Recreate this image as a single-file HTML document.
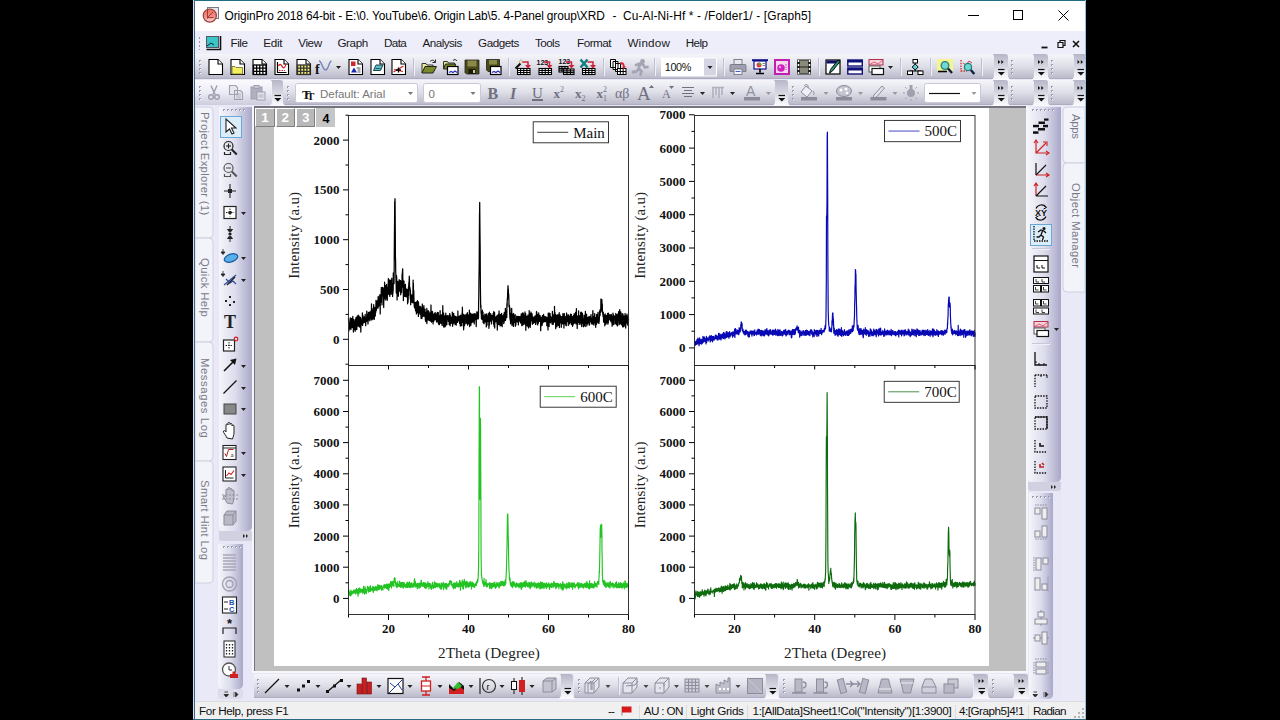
<!DOCTYPE html>
<html><head><meta charset="utf-8"><title>OriginPro 2018</title>
<style>
*{box-sizing:border-box;margin:0;padding:0}
html,body{width:1280px;height:720px;overflow:hidden;background:#000}
body{position:relative;font-family:"Liberation Sans",sans-serif;font-size:12px;color:#000}
.a{position:absolute}
#win{left:193px;top:0;width:893px;height:720px;background:#e7e7f7;overflow:hidden}
#title{left:0;top:0;width:893px;height:31px;background:#fff}
#title .t{left:31px;top:7px;font-size:12.3px;letter-spacing:-0.05px;white-space:nowrap;color:#000}
#menubar{left:0;top:31px;width:893px;height:24px;background:#eeeefa}
.mi{top:5px;font-size:11.6px;color:#111;white-space:nowrap}
.tb{border-radius:0 5px 5px 0;background:linear-gradient(#f6f6fc 0%,#e4e4f0 45%,#c4c4da 100%)}
.tbv{background:linear-gradient(90deg,#f4f4fb 0%,#e2e2ee 45%,#c0c0d6 100%);border-radius:0 0 5px 5px}
.grip{width:3px;background-image:radial-gradient(circle,#9a9ab4 0.8px,transparent 1.1px);background-size:3px 4px}
.gripv{height:3px;background-image:radial-gradient(circle,#9a9ab4 0.8px,transparent 1.1px);background-size:4px 3px}
.sep{width:1px;background:#b4b4c8}
.combo{background:#fff;border:1px solid #c6c6d4;border-radius:2px;font-size:11px;color:#555}
.stab{writing-mode:vertical-rl;font-size:11.3px;line-height:13px;color:#7a7a86;white-space:nowrap;letter-spacing:0.1px}
#status{left:0;top:700.5px;width:893px;height:19.5px;background:#f0f0f0;box-shadow:inset 0 1px 0 #dcdcdc;font-size:11.6px}
#status span{position:absolute;top:2px;white-space:nowrap}
svg{position:absolute;overflow:visible}
svg text{font-family:"Liberation Serif",serif}
</style></head>
<body>
<div id="win" class="a">
<div id="title" class="a">
<svg class="a" style="left:9px;top:6px" width="18" height="18" viewBox="0 0 18 18"><rect x="5.5" y="1.5" width="11" height="11" fill="#e8e4f0" stroke="#7a7a86"/><defs><linearGradient id="ga" x1="0" y1="0" x2="0" y2="1"><stop offset="0" stop-color="#e8705c"/><stop offset="0.6" stop-color="#f09088"/><stop offset="1" stop-color="#fbe0e0"/></linearGradient></defs><circle cx="7.8" cy="9.600" r="6.6" fill="url(#ga)" stroke="#9a4038" stroke-width="1.2"/><path d="M5.5 4v8.5M5.5 11.5h6M6 11l5-5" stroke="#a03030" stroke-width="0.9" fill="none"/></svg>
<div class="a" style="left:31.5px;top:8.8px;font-size:11.9px;letter-spacing:-0.122px;white-space:pre;color:#000;font-family:'Liberation Sans',sans-serif;">OriginPro 2018 64-bit - E:\0. YouTube\6. Origin Lab\5. 4-Panel group\XRD</div>
<div class="a" style="left:419.5px;top:8.8px;font-size:11.9px;letter-spacing:0.037px;white-space:pre;color:#000;font-family:'Liberation Sans',sans-serif;">-</div>
<div class="a" style="left:430.0px;top:8.8px;font-size:11.9px;letter-spacing:0.144px;white-space:pre;color:#000;font-family:'Liberation Sans',sans-serif;">Cu-Al-Ni-Hf * - /Folder1/ - [Graph5]</div>
<svg class="a" style="left:740px;top:0" width="153" height="30" viewBox="0 0 153 30"><path d="M35 15.5h11" stroke="#000" stroke-width="1"/><rect x="80.5" y="10.500" width="9" height="9" fill="none" stroke="#000" stroke-width="1"/><path d="M125.5 10.500l10 10M135.5 10.500l-10 10" stroke="#000" stroke-width="1"/></svg>
</div>
<div id="menubar" class="a">
<div class="a grip" style="left:5px;top:5px;height:14px"></div>
<svg class="a" style="left:11.5px;top:4px" width="17" height="16" viewBox="0 0 17 16"><path d="M15.500 1v13.500H1.5" stroke="#111" stroke-width="1.6" fill="none"/><rect x="1.5" y="1.500" width="12" height="11" fill="#39c6c6" stroke="#556"/><path d="M2 11l4-3 3 2" stroke="#123" stroke-width="1" fill="none"/></svg>
<div class="a" style="left:37.6px;top:4.5px;font-size:11.7px;letter-spacing:-0.484px;white-space:pre;color:#1a1a1a;font-family:'Liberation Sans',sans-serif;">File</div>
<div class="a" style="left:70.3px;top:4.5px;font-size:11.7px;letter-spacing:-0.287px;white-space:pre;color:#1a1a1a;font-family:'Liberation Sans',sans-serif;">Edit</div>
<div class="a" style="left:105.2px;top:4.5px;font-size:11.7px;letter-spacing:-0.383px;white-space:pre;color:#1a1a1a;font-family:'Liberation Sans',sans-serif;">View</div>
<div class="a" style="left:144.4px;top:4.5px;font-size:11.7px;letter-spacing:-0.404px;white-space:pre;color:#1a1a1a;font-family:'Liberation Sans',sans-serif;">Graph</div>
<div class="a" style="left:191.0px;top:4.5px;font-size:11.7px;letter-spacing:-0.605px;white-space:pre;color:#1a1a1a;font-family:'Liberation Sans',sans-serif;">Data</div>
<div class="a" style="left:229.5px;top:4.5px;font-size:11.7px;letter-spacing:-0.538px;white-space:pre;color:#1a1a1a;font-family:'Liberation Sans',sans-serif;">Analysis</div>
<div class="a" style="left:285.1px;top:4.5px;font-size:11.7px;letter-spacing:-0.488px;white-space:pre;color:#1a1a1a;font-family:'Liberation Sans',sans-serif;">Gadgets</div>
<div class="a" style="left:342.0px;top:4.5px;font-size:11.7px;letter-spacing:-0.578px;white-space:pre;color:#1a1a1a;font-family:'Liberation Sans',sans-serif;">Tools</div>
<div class="a" style="left:384.0px;top:4.5px;font-size:11.7px;letter-spacing:-0.491px;white-space:pre;color:#1a1a1a;font-family:'Liberation Sans',sans-serif;">Format</div>
<div class="a" style="left:434.4px;top:4.5px;font-size:11.7px;letter-spacing:0.197px;white-space:pre;color:#1a1a1a;font-family:'Liberation Sans',sans-serif;">Window</div>
<div class="a" style="left:492.7px;top:4.5px;font-size:11.7px;letter-spacing:-0.588px;white-space:pre;color:#1a1a1a;font-family:'Liberation Sans',sans-serif;">Help</div>
<svg class="a" style="left:844px;top:5px" width="60" height="16" viewBox="0 0 60 16"><path d="M4.500 11.500h6" stroke="#111" stroke-width="1.800"/><path d="M21 6.500h5v5h-5zM23 6V4.500h5v5H26.500" stroke="#111" stroke-width="1.2" fill="none"/><path d="M36 5l6 6M42 5l-6 6" stroke="#111" stroke-width="1.6"/></svg>
</div>
<svg class="a" style="left:0;top:0" width="893" height="720" viewBox="0 0 893 720">
<defs><linearGradient id="gh" x1="0" y1="0" x2="0" y2="1"><stop offset="0" stop-color="#f5f5fa"/><stop offset="0.5" stop-color="#dedee8"/><stop offset="0.94" stop-color="#bcbccc"/><stop offset="1" stop-color="#a6a6b8"/></linearGradient><linearGradient id="gh2" x1="0" y1="0" x2="0" y2="1"><stop offset="0" stop-color="#fafafe"/><stop offset="0.5" stop-color="#ececf6"/><stop offset="1" stop-color="#ccccde"/></linearGradient><linearGradient id="gc" x1="0" y1="0" x2="0" y2="1"><stop offset="0" stop-color="#b6b6c8"/><stop offset="0.45" stop-color="#d4d4e0"/><stop offset="0.85" stop-color="#f2f2f8"/><stop offset="1" stop-color="#fbfbfe"/></linearGradient><linearGradient id="gv" x1="0" y1="0" x2="1" y2="0"><stop offset="0" stop-color="#f5f5fb"/><stop offset="0.5" stop-color="#dcdcec"/><stop offset="1" stop-color="#a8a8c8"/></linearGradient></defs>
<path d="M2 54H800Q803 54 803 57V76Q803 79 800 79H2z" fill="url(#gh)"/>
<path d="M815 54H840Q843 54 843 57V76Q843 79 840 79H815z" fill="url(#gh)"/>
<rect x="818" y="60" width="2" height="2" fill="#9c9cb6"/><rect x="819" y="61" width="1" height="1" fill="#fff"/><rect x="818" y="64" width="2" height="2" fill="#9c9cb6"/><rect x="819" y="65" width="1" height="1" fill="#fff"/><rect x="818" y="68" width="2" height="2" fill="#9c9cb6"/><rect x="819" y="69" width="1" height="1" fill="#fff"/><rect x="818" y="72" width="2" height="2" fill="#9c9cb6"/><rect x="819" y="73" width="1" height="1" fill="#fff"/>
<path d="M855 54H880Q883 54 883 57V76Q883 79 880 79H855z" fill="url(#gh)"/>
<rect x="858" y="60" width="2" height="2" fill="#9c9cb6"/><rect x="859" y="61" width="1" height="1" fill="#fff"/><rect x="858" y="64" width="2" height="2" fill="#9c9cb6"/><rect x="859" y="65" width="1" height="1" fill="#fff"/><rect x="858" y="68" width="2" height="2" fill="#9c9cb6"/><rect x="859" y="69" width="1" height="1" fill="#fff"/><rect x="858" y="72" width="2" height="2" fill="#9c9cb6"/><rect x="859" y="73" width="1" height="1" fill="#fff"/>
<path d="M799 54H812Q815 54 815 57V75Q815 79 818 80H798Q801 79 801 75V57Q801 54 799 54z" fill="url(#gc)"/>
<path d="M839 54H852Q855 54 855 57V75Q855 79 858 80H838Q841 79 841 75V57Q841 54 839 54z" fill="url(#gc)"/>
<path d="M879 54H891Q894 54 894 57V75Q894 79 897 80H878Q881 79 881 75V57Q881 54 879 54z" fill="url(#gc)"/>
<path d="M805 60l2.200 2-2.200 2zM808.3 60l2.200 2-2.200 2z" fill="#111"/><path d="M805 69.5h6.500" stroke="#111" stroke-width="1.200"/><path d="M804.8 72h7l-3.500 3.500z" fill="#111"/>
<path d="M845 60l2.200 2-2.200 2zM848.3 60l2.200 2-2.200 2z" fill="#111"/><path d="M845 69.5h6.500" stroke="#111" stroke-width="1.200"/><path d="M844.8 72h7l-3.500 3.500z" fill="#111"/>
<path d="M884.5 60l2.200 2-2.200 2zM887.8 60l2.200 2-2.200 2z" fill="#111"/><path d="M884.5 69.5h6.500" stroke="#111" stroke-width="1.200"/><path d="M884.3 72h7l-3.500 3.500z" fill="#111"/>
<rect x="6" y="60" width="2" height="2" fill="#9c9cb6"/><rect x="7" y="61" width="1" height="1" fill="#fff"/><rect x="6" y="64" width="2" height="2" fill="#9c9cb6"/><rect x="7" y="65" width="1" height="1" fill="#fff"/><rect x="6" y="68" width="2" height="2" fill="#9c9cb6"/><rect x="7" y="69" width="1" height="1" fill="#fff"/><rect x="6" y="72" width="2" height="2" fill="#9c9cb6"/><rect x="7" y="73" width="1" height="1" fill="#fff"/>
<g transform="translate(15,59)"><path d="M1 0.500h9l4.500 4.500v10.500h-13.500z" fill="#fff" stroke="#000" stroke-width="1.100"/><path d="M10 0.500v4.500h4.500" fill="#fff" stroke="#000" stroke-width="1.100"/></g>
<g transform="translate(37,59)"><path d="M1 0.500h9l4.500 4.500v10.500h-13.500z" fill="#fff" stroke="#000" stroke-width="1.100"/><path d="M10 0.500v4.500h4.500" fill="#fff" stroke="#000" stroke-width="1.100"/><path d="M2 7.500h3l1 1h6.500v6.500H2z" fill="#f2f060" stroke="#6b6b30" stroke-width="0.8"/></g>
<g transform="translate(59,59)"><path d="M1 0.500h9l4.500 4.500v10.500h-13.500z" fill="#fff" stroke="#000" stroke-width="1.100"/><path d="M10 0.500v4.500h4.500" fill="#fff" stroke="#000" stroke-width="1.100"/><rect x="1.5" y="6" width="12.5" height="9.5" fill="#fff" stroke="#000" stroke-width="1.3"/><path d="M4.62 6v9.5M7.75 6v9.5M10.88 6v9.5M1.5 9.17h12.5M1.5 12.33h12.5" stroke="#000" stroke-width="1.3" fill="none"/></g>
<g transform="translate(81,59)"><path d="M1 0.500h9l4.500 4.500v10.500h-13.500z" fill="#fff" stroke="#000" stroke-width="1.100"/><path d="M10 0.500v4.500h4.500" fill="#fff" stroke="#000" stroke-width="1.100"/><path d="M3.500 3v10.500h9" stroke="#000" fill="none" stroke-width="1.2"/><path d="M4.500 7c1.500-3 3-1 4 1s3 0 3.500-3" stroke="#d02020" fill="none" stroke-width="1.2"/><path d="M5 11.500h6" stroke="#d02020" stroke-dasharray="1.500 1" /></g>
<g transform="translate(103,59)"><path d="M1 0.500h9l4.500 4.500v10.500h-13.500z" fill="#fff" stroke="#000" stroke-width="1.100"/><path d="M10 0.500v4.500h4.500" fill="#fff" stroke="#000" stroke-width="1.100"/><rect x="1.5" y="6" width="12.5" height="9.5" fill="#f0ee70" stroke="#333" stroke-width="1.3"/><path d="M4.62 6v9.5M7.75 6v9.5M10.88 6v9.5M1.5 9.17h12.5M1.5 12.33h12.5" stroke="#333" stroke-width="1.3" fill="none"/></g>
<g transform="translate(122,59)"><path d="M4 2c3 0 3.500 9 6.500 9s3.500-9 6-9" stroke="#7080b8" fill="none" stroke-width="1.3"/><path d="M4 13.500h12" stroke="#c8c8e0" stroke-width="1.5"/><text x="0" y="15" font-size="14" font-weight="bold" fill="#111">f</text></g>
<g transform="translate(155,59)"><path d="M1 0.500h9l4.500 4.500v10.500h-13.500z" fill="#fff" stroke="#000" stroke-width="1.100"/><path d="M10 0.500v4.500h4.500" fill="#fff" stroke="#000" stroke-width="1.100"/><rect x="3" y="2.500" width="4.500" height="4.500" fill="#d02828"/><path d="M3 13.500l3-5 3 5z" fill="#1828b0"/><path d="M8.500 9h4M9.500 11h3M9.500 13h3" stroke="#555" stroke-width="1"/></g>
<g transform="translate(177,59)"><path d="M1 0.500h9l4.500 4.500v10.500h-13.500z" fill="#fff" stroke="#000" stroke-width="1.100"/><path d="M10 0.500v4.500h4.500" fill="#fff" stroke="#000" stroke-width="1.100"/><path d="M3.500 11.500l2.500-5.500h7l-2.500 5.500z" fill="#58c0c0" stroke="#245" stroke-width="1"/><path d="M5.500 9.500h5" stroke="#245" stroke-width="0.8"/></g>
<g transform="translate(198,59)"><path d="M1 0.500h9l4.500 4.500v10.500h-13.500z" fill="#fff" stroke="#000" stroke-width="1.100"/><path d="M10 0.500v4.500h4.500" fill="#fff" stroke="#000" stroke-width="1.100"/><path d="M2.500 13l10-6M3 10.500l9 2" stroke="#d02020" stroke-width="1.1"/><path d="M7.500 8.500v5M5 11h5" stroke="#000" stroke-width="1.3"/></g>
<g transform="translate(228,59)"><path d="M1 14V4.500h4l1 1.500h6v2" fill="#e8e8a0" stroke="#333" stroke-width="1"/><path d="M1 14l3-6.500h11.500l-3.500 6.500z" fill="#7a8a28" stroke="#222" stroke-width="1"/><path d="M9 2.500c2-2 4-1.500 5 0.500M14.500 0.500v3h-3" stroke="#222" fill="none" stroke-width="1"/></g>
<g transform="translate(250,59)"><path d="M0.500 10V2.500h4l1 1.500h6v2" fill="#e8e8a0" stroke="#333" stroke-width="1"/><path d="M0.500 10l2-5h10l-1 5z" fill="#7a8a28" stroke="#222"/><rect x="4.500" y="7.500" width="10.500" height="8" fill="#fff" stroke="#000" stroke-width="1.2"/><path d="M6 13.500l2-1 2 1 2-1.500 2 1.500" stroke="#2030c0" fill="none" stroke-width="1.2"/><path d="M10 1.500c1.500-1.500 3-1 4 0.500" stroke="#222" fill="none"/></g>
<g transform="translate(271,59)"><path d="M1 1h14v14H2.500L1 13.500z" fill="#4a4a18" stroke="#222" stroke-width="0.8"/><rect x="3.500" y="1.500" width="9" height="6" fill="#8a8a4a"/><rect x="4.500" y="10" width="7" height="5" fill="#1a1a08"/><rect x="9" y="11" width="2" height="3" fill="#c8c8a0"/></g>
<g transform="translate(293,59)"><path d="M0.500 0.500h13v12H2L0.500 11z" fill="#4a4a18" stroke="#222" stroke-width="0.800"/><rect x="3" y="1" width="8" height="4.500" fill="#8a8a4a"/><rect x="4.500" y="7.500" width="10.500" height="8" fill="#fff" stroke="#000" stroke-width="1.2"/><path d="M6 13.500l2-1 2 1 2-1.500 2 1.500" stroke="#2030c0" fill="none" stroke-width="1.2"/></g>
<g transform="translate(322,59)"><rect x="2.5" y="9.5" width="12.5" height="6" fill="#fff" stroke="#000" stroke-width="1.1"/><path d="M5.62 9.5v6M8.75 9.5v6M11.88 9.5v6M2.5 11.50h12.5M2.5 13.50h12.5" stroke="#000" stroke-width="1.1" fill="none"/><path d="M0.500 9.500l5-5" stroke="#111" stroke-width="2.200"/><path d="M4 3l2-2.500 2 2-2.500 2z" fill="#f4f0a0" stroke="#888" stroke-width="0.500"/><path d="M7.500 3h5.500v3.500" stroke="#d02038" stroke-width="1.500" fill="none"/><path d="M10 6h6l-3 3.500z" fill="#d02038"/></g>
<g transform="translate(343.5,59)"><rect x="2.5" y="9.5" width="12.5" height="6" fill="#fff" stroke="#000" stroke-width="1.1"/><path d="M5.62 9.5v6M8.75 9.5v6M11.88 9.5v6M2.5 11.50h12.5M2.5 13.50h12.5" stroke="#000" stroke-width="1.1" fill="none"/><text x="0" y="5.500" font-size="7" font-weight="bold" fill="#111" style="font-family:'Liberation Sans',sans-serif">123</text><path d="M7.500 3h5.500v3.500" stroke="#d02038" stroke-width="1.500" fill="none"/><path d="M10 6h6l-3 3.500z" fill="#d02038"/></g>
<g transform="translate(365.5,59)"><rect x="0.5" y="7.5" width="9" height="5.5" fill="#fff" stroke="#000" stroke-width="1.1"/><path d="M3.50 7.5v5.5M6.50 7.5v5.5M0.5 9.33h9M0.5 11.17h9" stroke="#000" stroke-width="1.1" fill="none"/><rect x="5" y="10" width="10.5" height="5.5" fill="#fff" stroke="#000" stroke-width="1.1"/><path d="M8.50 10v5.5M12.00 10v5.5M5 11.83h10.5M5 13.67h10.5" stroke="#000" stroke-width="1.1" fill="none"/><text x="0" y="5" font-size="7" font-weight="bold" fill="#111" style="font-family:'Liberation Sans',sans-serif">123</text><path d="M7.500 3h5.500v3.500" stroke="#d02038" stroke-width="1.500" fill="none"/><path d="M10 6h6l-3 3.500z" fill="#d02038"/></g>
<g transform="translate(387,59)"><rect x="2.5" y="9.5" width="12.5" height="6" fill="#fff" stroke="#000" stroke-width="1.1"/><path d="M5.62 9.5v6M8.75 9.5v6M11.88 9.5v6M2.5 11.50h12.5M2.5 13.50h12.5" stroke="#000" stroke-width="1.1" fill="none"/><path d="M0.500 0.500l7 8M7.500 0.500l-7 8" stroke="#128080" stroke-width="2.600"/><path d="M7.500 3h5.500v3.500" stroke="#d02038" stroke-width="1.500" fill="none"/><path d="M10 6h6l-3 3.500z" fill="#d02038"/></g>
<g transform="translate(417,59)"><path d="M0.500 0.500h5v8h-5zM3 2.500h5v8h-5zM5.500 4.500h5v8h-5z" fill="#fff" stroke="#000" stroke-width="1"/><rect x="7.5" y="9.5" width="8.5" height="6" fill="#fff" stroke="#000" stroke-width="1"/><path d="M10.33 9.5v6M13.17 9.5v6M7.5 12.50h8.5" stroke="#000" stroke-width="1" fill="none"/><path d="M10 3.500c3-1 5 1 4.500 4l1.500-0.500-2 3-2.500-2.500 1.500 0.300c0.500-2-1-3-3-2.500z" fill="#d82030"/></g>
<g transform="translate(439,59)"><circle cx="10.500" cy="2.500" r="2.400" fill="#a4a4b4"/><path d="M4 6l4-1.500 3 1 2 3 2.500-0.500M8 5l-1.500 5 3 2-1 3.500M6.500 10l-2 2.500-3.500 0.500" stroke="#a4a4b4" stroke-width="2.800" fill="none" stroke-linecap="round" stroke-linejoin="round"/></g>
<g transform="translate(537,59)"><rect x="4" y="0.500" width="8" height="5" fill="#e8e8f0" stroke="#808090"/><path d="M1 5.500h14a1 1 0 0 1 1 1v6h-16v-6a1 1 0 0 1 1-1z" fill="#a0a0b0" stroke="#707080" stroke-width="0.8"/><rect x="4" y="10" width="8" height="5.500" fill="#f4f4f8" stroke="#808090"/><path d="M5.500 12.500h5" stroke="#4060c0"/></g>
<g transform="translate(559,59)"><path d="M0 1.200h16" stroke="#10108a" stroke-width="2"/><rect x="2" y="2" width="12" height="8" fill="#fff" stroke="#10108a" stroke-width="1.2"/><circle cx="7" cy="6" r="2.500" fill="#e04040"/><path d="M7 6V3.500A2.500 2.500 0 0 1 9.500 6z" fill="#40b040"/><path d="M10.500 4.500h2.500M10.500 6.500h2.500" stroke="#888"/><path d="M8 10v3.500M4 14.500h8" stroke="#000" stroke-width="1.600"/></g>
<g transform="translate(581,59)"><rect x="1" y="1" width="14" height="14" fill="#f8d8f0" stroke="#c020b0" stroke-width="2"/><circle cx="7" cy="9" r="3.800" fill="#d020c0"/><circle cx="6" cy="8" r="1.200" fill="#f8a0e8"/><path d="M12 5v6" stroke="#e070d0" stroke-width="1.500" stroke-dasharray="1.500 1"/></g>
<g transform="translate(603,59)"><rect x="1" y="0.500" width="14" height="15" fill="#222"/><rect x="4" y="1.500" width="8" height="6" fill="#8a8a7a"/><rect x="4" y="8.500" width="8" height="6" fill="#8a8a7a"/><path d="M2.500 1v14M13.500 1v14" stroke="#fff" stroke-width="1.500" stroke-dasharray="2 2"/></g>
<g transform="translate(632,59)"><rect x="1" y="1" width="14" height="14" fill="#fff" stroke="#000" stroke-width="1.2"/><rect x="1.500" y="1.500" width="13" height="3" fill="#10106a"/><path d="M4.500 14l1-3.500 7.500-9.500 2 1.500-7.500 9.500z" fill="#309070" stroke="#000" stroke-width="0.9"/></g>
<g transform="translate(654,59)"><rect x="0.800" y="1" width="14.500" height="6" fill="#fff" stroke="#10107a" stroke-width="1.400"/><rect x="0.800" y="1" width="14.500" height="2.500" fill="#10107a"/><rect x="0.800" y="9" width="14.500" height="6" fill="#fff" stroke="#10107a" stroke-width="1.400"/><rect x="0.800" y="9" width="14.500" height="2.500" fill="#10107a"/></g>
<g transform="translate(675,59)"><rect x="1" y="0.500" width="14" height="5.500" fill="#f8d0d8" stroke="#b03050" stroke-width="1"/><path d="M1 6l5-3 4 2 5-4" stroke="#d04060" fill="none" stroke-width="0.8"/><rect x="1" y="7" width="11" height="6" fill="#fff" stroke="#555" stroke-width="1"/><rect x="4" y="9.500" width="11.500" height="6" fill="#fff" stroke="#111" stroke-width="1.200"/></g>
<g transform="translate(714,59)"><rect x="6" y="0.500" width="4.500" height="3.500" fill="#fff" stroke="#000"/><path d="M8.200 4v1.500M8.200 10.500V12M3 15v-3h10.500v3" stroke="#000" fill="none" stroke-width="1.1"/><path d="M8.200 5l3 3-3 3-3-3z" fill="#60d0d8" stroke="#000" stroke-width="1"/><rect x="0.500" y="12" width="5" height="3.500" fill="#fff" stroke="#000"/><rect x="11" y="12" width="5" height="3.500" fill="#fff" stroke="#000"/></g>
<g transform="translate(744,59)"><rect x="0" y="0" width="16" height="12" fill="#f4f490"/><path d="M1 12.500h9" stroke="#000" stroke-width="1.600"/><circle cx="8" cy="6.500" r="3.800" fill="#70d8d0" stroke="#208080" stroke-width="1.300"/><path d="M11 9.500l4 4.500" stroke="#102040" stroke-width="2.400"/></g>
<g transform="translate(766,59)"><path d="M2 1v11h6" stroke="#d03030" stroke-dasharray="1.500 1.200" fill="none" stroke-width="1.300"/><path d="M4 4l3 2 3-4 3 2" stroke="#d03030" fill="none" stroke-width="0.900"/><circle cx="9" cy="8" r="3.600" fill="#70d8d0" stroke="#208080" stroke-width="1.300"/><path d="M11.800 11l3.500 4" stroke="#102040" stroke-width="2.400"/></g>
<path d="M143 66h5l-2.500 3z" fill="#222"/>
<path d="M695 66h5l-2.500 3z" fill="#222"/>
<path d="M220.5 58v18" stroke="#c0c0d0" stroke-width="1"/><path d="M221.5 58v18" stroke="#f0f0f8" stroke-width="1"/>
<path d="M315.5 58v18" stroke="#c0c0d0" stroke-width="1"/><path d="M316.5 58v18" stroke="#f0f0f8" stroke-width="1"/>
<path d="M410.5 58v18" stroke="#c0c0d0" stroke-width="1"/><path d="M411.5 58v18" stroke="#f0f0f8" stroke-width="1"/>
<path d="M461.5 58v18" stroke="#c0c0d0" stroke-width="1"/><path d="M462.5 58v18" stroke="#f0f0f8" stroke-width="1"/>
<path d="M530.5 58v18" stroke="#c0c0d0" stroke-width="1"/><path d="M531.5 58v18" stroke="#f0f0f8" stroke-width="1"/>
<path d="M625.5 58v18" stroke="#c0c0d0" stroke-width="1"/><path d="M626.5 58v18" stroke="#f0f0f8" stroke-width="1"/>
<path d="M707.5 58v18" stroke="#c0c0d0" stroke-width="1"/><path d="M708.5 58v18" stroke="#f0f0f8" stroke-width="1"/>
<path d="M737.5 58v18" stroke="#c0c0d0" stroke-width="1"/><path d="M738.5 58v18" stroke="#f0f0f8" stroke-width="1"/>
<path d="M788.5 58v18" stroke="#c0c0d0" stroke-width="1"/><path d="M789.5 58v18" stroke="#f0f0f8" stroke-width="1"/>
<rect x="468" y="57.5" width="56" height="19" fill="#fff"/>
<rect x="511" y="58.5" width="12" height="17" fill="#d4d4e2"/>
<path d="M514.5 66h5l-2.500 3z" fill="#222"/>
<text x="471.79999999999995" y="70.6" font-size="10.8" fill="#111" style="font-family:'Liberation Sans',sans-serif" letter-spacing="-0.35">100%</text>
<path d="M2 80H78Q81 80 81 83V102Q81 105 78 105H2z" fill="url(#gh2)"/>
<rect x="6" y="86" width="2" height="2" fill="#9c9cb6"/><rect x="7" y="87" width="1" height="1" fill="#fff"/><rect x="6" y="90" width="2" height="2" fill="#9c9cb6"/><rect x="7" y="91" width="1" height="1" fill="#fff"/><rect x="6" y="94" width="2" height="2" fill="#9c9cb6"/><rect x="7" y="95" width="1" height="1" fill="#fff"/><rect x="6" y="98" width="2" height="2" fill="#9c9cb6"/><rect x="7" y="99" width="1" height="1" fill="#fff"/>
<path d="M90 80H581Q584 80 584 83V102Q584 105 581 105H90z" fill="url(#gh)"/>
<rect x="94" y="86" width="2" height="2" fill="#9c9cb6"/><rect x="95" y="87" width="1" height="1" fill="#fff"/><rect x="94" y="90" width="2" height="2" fill="#9c9cb6"/><rect x="95" y="91" width="1" height="1" fill="#fff"/><rect x="94" y="94" width="2" height="2" fill="#9c9cb6"/><rect x="95" y="95" width="1" height="1" fill="#fff"/><rect x="94" y="98" width="2" height="2" fill="#9c9cb6"/><rect x="95" y="99" width="1" height="1" fill="#fff"/>
<path d="M595 80H800Q803 80 803 83V102Q803 105 800 105H595z" fill="url(#gh)"/>
<rect x="599" y="86" width="2" height="2" fill="#9c9cb6"/><rect x="600" y="87" width="1" height="1" fill="#fff"/><rect x="599" y="90" width="2" height="2" fill="#9c9cb6"/><rect x="600" y="91" width="1" height="1" fill="#fff"/><rect x="599" y="94" width="2" height="2" fill="#9c9cb6"/><rect x="600" y="95" width="1" height="1" fill="#fff"/><rect x="599" y="98" width="2" height="2" fill="#9c9cb6"/><rect x="600" y="99" width="1" height="1" fill="#fff"/>
<path d="M815 80H840Q843 80 843 83V102Q843 105 840 105H815z" fill="url(#gh)"/>
<rect x="818" y="86" width="2" height="2" fill="#9c9cb6"/><rect x="819" y="87" width="1" height="1" fill="#fff"/><rect x="818" y="90" width="2" height="2" fill="#9c9cb6"/><rect x="819" y="91" width="1" height="1" fill="#fff"/><rect x="818" y="94" width="2" height="2" fill="#9c9cb6"/><rect x="819" y="95" width="1" height="1" fill="#fff"/><rect x="818" y="98" width="2" height="2" fill="#9c9cb6"/><rect x="819" y="99" width="1" height="1" fill="#fff"/>
<path d="M855 80H880Q883 80 883 83V102Q883 105 880 105H855z" fill="url(#gh)"/>
<rect x="858" y="86" width="2" height="2" fill="#9c9cb6"/><rect x="859" y="87" width="1" height="1" fill="#fff"/><rect x="858" y="90" width="2" height="2" fill="#9c9cb6"/><rect x="859" y="91" width="1" height="1" fill="#fff"/><rect x="858" y="94" width="2" height="2" fill="#9c9cb6"/><rect x="859" y="95" width="1" height="1" fill="#fff"/><rect x="858" y="98" width="2" height="2" fill="#9c9cb6"/><rect x="859" y="99" width="1" height="1" fill="#fff"/>
<path d="M77 80H87Q90 80 90 83V101Q90 105 93 106H76Q79 105 79 101V83Q79 80 77 80z" fill="url(#gc)"/>
<path d="M580 80H592Q595 80 595 83V101Q595 105 598 106H579Q582 105 582 101V83Q582 80 580 80z" fill="url(#gc)"/>
<path d="M799 80H812Q815 80 815 83V101Q815 105 818 106H798Q801 105 801 101V83Q801 80 799 80z" fill="url(#gc)"/>
<path d="M839 80H852Q855 80 855 83V101Q855 105 858 106H838Q841 105 841 101V83Q841 80 839 80z" fill="url(#gc)"/>
<path d="M879 80H891Q894 80 894 83V101Q894 105 897 106H878Q881 105 881 101V83Q881 80 879 80z" fill="url(#gc)"/>
<path d="M81.5 95.5h6.500" stroke="#111" stroke-width="1.200"/><path d="M81.3 98h7l-3.500 3.500z" fill="#111"/>
<path d="M585.5 95.5h6.500" stroke="#111" stroke-width="1.200"/><path d="M585.3 98h7l-3.500 3.500z" fill="#111"/>
<path d="M805 86l2.200 2-2.200 2zM808.3 86l2.200 2-2.200 2z" fill="#111"/><path d="M805 95.5h6.500" stroke="#111" stroke-width="1.200"/><path d="M804.8 98h7l-3.500 3.500z" fill="#111"/>
<path d="M845 86l2.200 2-2.200 2zM848.3 86l2.200 2-2.200 2z" fill="#111"/><path d="M845 95.5h6.500" stroke="#111" stroke-width="1.200"/><path d="M844.8 98h7l-3.500 3.500z" fill="#111"/>
<path d="M884.5 86l2.200 2-2.200 2zM887.8 86l2.200 2-2.200 2z" fill="#111"/><path d="M884.5 95.5h6.500" stroke="#111" stroke-width="1.200"/><path d="M884.3 98h7l-3.500 3.500z" fill="#111"/>
<g transform="translate(13,85)"><path d="M5 0.500l4 9M11 0.500l-4 9" stroke="#a0a0b0" stroke-width="1.500"/><circle cx="5" cy="12" r="2.300" fill="none" stroke="#a0a0b0" stroke-width="1.500"/><circle cx="11" cy="12" r="2.300" fill="none" stroke="#a0a0b0" stroke-width="1.500"/></g>
<g transform="translate(35,85)"><path d="M1.500 0.500h6l2 2v7h-8zM6.500 5.500h6l2 2v7h-8z" fill="#e8e8f0" stroke="#a0a0b0" stroke-width="1.100"/><path d="M8 9h5M8 11h5M8 13h5" stroke="#a0a0b0" stroke-width="0.800"/></g>
<g transform="translate(57,85)"><rect x="1" y="2" width="11" height="12" fill="#b0b0c0" stroke="#a0a0b0"/><rect x="4" y="0.500" width="5" height="3" fill="#c8c8d4" stroke="#a0a0b0"/><rect x="7" y="7" width="8" height="8" fill="#e4e4ec" stroke="#a0a0b0"/><path d="M8.500 10h5M8.500 12h5" stroke="#a0a0b0" stroke-width="0.800"/></g>
<rect x="102.5" y="83.500" width="122" height="19" rx="2" fill="#fff" stroke="#c8c8d8"/>
<text x="109" y="98.500" font-size="13" font-weight="bold" fill="#111">T</text><text x="114" y="100" font-size="11" font-weight="bold" fill="#111">T</text>
<text x="127" y="97.500" font-size="11.500" fill="#777" style="font-family:'Liberation Sans',sans-serif">Default: Arial</text>
<path d="M215 92h5l-2.500 3z" fill="#777"/>
<rect x="230.5" y="83.500" width="57" height="19" rx="2" fill="#fff" stroke="#c8c8d8"/>
<text x="235.5" y="97.500" font-size="11.500" fill="#777" style="font-family:'Liberation Sans',sans-serif">0</text>
<path d="M277.5 92h5l-2.500 3z" fill="#777"/>
<text x="294.5" y="99" font-size="16" fill="#707080" font-weight="bold">B</text>
<text x="317" y="99" font-size="16" fill="#707080" font-weight="bold" font-style="italic">I</text>
<text x="339" y="98" font-size="15" fill="#707080" text-decoration="underline">U</text>
<path d="M339 100.500h11" stroke="#707080"/>
<text x="360.5" y="98" font-size="13" fill="#707080" font-weight="bold">x</text><text x="367" y="92" font-size="8" fill="#707080" >2</text>
<text x="382" y="98" font-size="13" fill="#707080" font-weight="bold">x</text><text x="388.5" y="101" font-size="8" fill="#707080" >2</text>
<text x="403.5" y="98" font-size="13" fill="#707080" font-weight="bold">x</text><text x="410" y="92" font-size="8" fill="#707080" >2</text><text x="410" y="101" font-size="8" fill="#707080" >1</text>
<text x="422" y="98" font-size="14" fill="#707080" >αβ</text>
<text x="444" y="100" font-size="19" fill="#707080" >A</text><path d="M456 88l2.500-3 2.500 3z" fill="#707080"/>
<text x="469" y="98" font-size="12" fill="#707080" >A</text><path d="M476 86h5l-2.500 3z" fill="#707080"/>
<path d="M489 87.500h12M491 90.500h8M489 93.500h12M491 96.500h8" stroke="#707080" stroke-width="1.200"/>
<path d="M507 92h5l-2.500 3z" fill="#222"/>
<path d="M520 87v11M523 87v8M526 87v11M529 87v8M519 87.500h12" stroke="#b0b0c0" stroke-width="1.600"/>
<path d="M537 92h5l-2.500 3z" fill="#222"/>
<text x="553" y="96" font-size="14" fill="#9090a0" style="font-family:'Liberation Sans',sans-serif">A</text><rect x="551" y="97" width="16" height="3.500" fill="#8c8c9c"/>
<path d="M573 92h5l-2.500 3z" fill="#999"/>
<path d="M613 86l6 5-5 6-6-5z" fill="#f0f0f6" stroke="#8c8c9c"/><path d="M611 86c2-3 5-1 4 2" stroke="#8c8c9c" fill="none"/><path d="M620 91c1.500 2 1.500 3 0 4" stroke="#8c8c9c" fill="none"/><rect x="608" y="97" width="16" height="3.500" fill="#8c8c9c"/>
<path d="M630.5 92h5l-2.500 3z" fill="#999"/>
<ellipse cx="651" cy="91" rx="7.500" ry="5.500" fill="#c4c4d0" stroke="#8c8c9c"/><circle cx="648" cy="90" r="1.500" fill="#fff"/><circle cx="653" cy="89" r="1.500" fill="#fff"/><circle cx="654" cy="93" r="1.300" fill="#fff"/><rect x="643" y="97" width="16" height="3.500" fill="#8c8c9c"/>
<path d="M665 92h5l-2.500 3z" fill="#999"/>
<path d="M681 95l8-9 2.500 2-8 9-3.500 1z" fill="#e4e4ec" stroke="#8c8c9c"/><rect x="677.5" y="97" width="16" height="3.500" fill="#8c8c9c"/>
<path d="M699.5 92h5l-2.500 3z" fill="#999"/>
<circle cx="718" cy="93" r="4" fill="#a0a0ae"/><rect x="716.5" y="85" width="3" height="5" fill="#a0a0ae"/><path d="M710 93h2M724 93h2M712 87l1.500 1.500M724 87l-1.500 1.500M712 99l1.500-1.500M724 99l-1.500-1.500M718 99v2" stroke="#a0a0ae"/>
<rect x="731.5" y="83.500" width="56" height="19" rx="2" fill="#fff" stroke="#c8c8d8"/><path d="M736 93.500h31" stroke="#111" stroke-width="1.200"/>
<path d="M778.5 92h5l-2.500 3z" fill="#999"/>
</svg>
<svg class="a" style="left:0;top:0" width="893" height="720" viewBox="0 0 893 720">
<rect x="2" y="106" width="22" height="596" fill="#e9e9f8"/>
<path d="M2 107H16Q20 107 20 111V234Q20 238 16 238H2z" fill="#f3f3fa" stroke="#d0d0e0" stroke-width="1"/>
<path d="M2 238H16Q20 238 20 242V338Q20 342 16 342H2z" fill="#f3f3fa" stroke="#d0d0e0" stroke-width="1"/>
<path d="M2 342H16Q20 342 20 346V457Q20 461 16 461H2z" fill="#f3f3fa" stroke="#d0d0e0" stroke-width="1"/>
<path d="M2 461H16Q20 461 20 465V579Q20 583 16 583H2z" fill="#f3f3fa" stroke="#d0d0e0" stroke-width="1"/>
<path d="M26 107H59V526Q59 531 54 531H31Q26 531 26 526z" fill="url(#gv)"/>
<rect x="30" y="109" width="2" height="2" fill="#9c9cb6"/><rect x="31" y="110" width="1" height="1" fill="#fff"/><rect x="34" y="109" width="2" height="2" fill="#9c9cb6"/><rect x="35" y="110" width="1" height="1" fill="#fff"/><rect x="38" y="109" width="2" height="2" fill="#9c9cb6"/><rect x="39" y="110" width="1" height="1" fill="#fff"/><rect x="42" y="109" width="2" height="2" fill="#9c9cb6"/><rect x="43" y="110" width="1" height="1" fill="#fff"/><rect x="46" y="109" width="2" height="2" fill="#9c9cb6"/><rect x="47" y="110" width="1" height="1" fill="#fff"/><rect x="50" y="109" width="2" height="2" fill="#9c9cb6"/><rect x="51" y="110" width="1" height="1" fill="#fff"/>
<rect x="27.5" y="116.500" width="21" height="21" fill="#dcedfa" stroke="#6aa8d8"/>
<path d="M33 119v13l3.500-3 2.500 5 2-1-2.500-5h4.500z" fill="#fff" stroke="#222" stroke-width="1.100"/>
<circle cx="35.5" cy="146" r="4.500" fill="none" stroke="#222" stroke-width="1.200"/><path d="M38.8 149.5l5 5" stroke="#222" stroke-width="2"/><path d="M33 146h5" stroke="#222" stroke-width="1.100"/><path d="M35.5 143.5v5" stroke="#222" stroke-width="1.100"/><path d="M31.5 154.5h6M31.5 152v3M37.5 152v3" stroke="#222" stroke-width="1.200" fill="none"/>
<circle cx="35.5" cy="168" r="4.500" fill="none" stroke="#555" stroke-width="1.200"/><path d="M38.8 171.5l5 5" stroke="#555" stroke-width="2"/><path d="M33 168h5" stroke="#555" stroke-width="1.100"/><path d="M31.5 176.5h6M31.5 174v3M37.5 174v3" stroke="#555" stroke-width="1.200" fill="none"/>
<path d="M37 184v14M31 191h12" stroke="#222" stroke-width="1.100"/><rect x="35" y="189" width="4" height="4" fill="#222"/>
<rect x="31" y="206.5" width="12" height="12" fill="#fff" stroke="#222" stroke-width="1.200"/><path d="M37 208.5v8M33 212.5h8" stroke="#222" stroke-dasharray="1.500 1"/><rect x="35.5" y="211.0" width="3" height="3" fill="#222"/>
<path d="M48 212h5l-2.500 3z" fill="#222"/>
<path d="M37 226v5M34.5 229.5h5l-2.500 3zM37 242v-5M34.5 238.5h5l-2.500-3z" stroke="#222" fill="#222" stroke-width="1"/><path d="M35.5 234h3" stroke="#222" stroke-width="2"/>
<ellipse cx="38" cy="258" rx="7" ry="3.800" fill="#58b0e8" stroke="#1858a0" stroke-width="1.200" transform="rotate(-20 38 258)"/><path d="M30 249v4M28 252h4l-2 2.500z" fill="#222" stroke="#222" stroke-width="0.800"/>
<path d="M48 257h5l-2.500 3z" fill="#222"/>
<path d="M30 271v4M28 274h4l-2 2.500z" fill="#222" stroke="#222" stroke-width="0.800"/><path d="M31 285l12-10M33 279l4 4 3-2 3 3" stroke="#2848a0" fill="none" stroke-width="1.100"/><path d="M34 285l8-8" stroke="#222" stroke-width="1.400"/>
<path d="M48 279h5l-2.500 3z" fill="#222"/>
<rect x="36" y="296" width="2" height="2" fill="#222"/><rect x="32" y="300" width="2" height="2" fill="#222"/><rect x="40" y="301" width="2" height="2" fill="#222"/><rect x="36" y="304" width="2" height="2" fill="#222"/>
<text x="37" y="327.5" font-size="18" font-weight="bold" fill="#222" text-anchor="middle">T</text>
<rect x="30.5" y="340" width="11" height="11" fill="#fff" stroke="#222" stroke-width="1.200"/><path d="M36 342v7M32.5 345.5h7" stroke="#222" stroke-dasharray="1.500 1"/><circle cx="43" cy="339" r="1.800" fill="none" stroke="#d02020" stroke-width="1.200"/>
<path d="M31 371l11-11" stroke="#111" stroke-width="1.600"/><path d="M43.5 358.5l-6.500 1.500 5 5z" fill="#111"/>
<path d="M48 365h5l-2.500 3z" fill="#222"/>
<path d="M30.5 393.5l13-13" stroke="#111" stroke-width="1.300"/>
<path d="M48 387h5l-2.500 3z" fill="#222"/>
<rect x="31" y="404" width="12" height="10" fill="#888" stroke="#444"/>
<path d="M48 408h5l-2.500 3z" fill="#222"/>
<path d="M34 438c-1-3-4-5-3.500-7 1-1 2 0 2.500 1v-7c0-1.500 2-1.500 2 0v-1.500c0-1.500 2-1.500 2 0v1c0-1.500 2-1.500 2 0v1.500c0-1.300 2-1.300 2 0v7c0 2-1 4-1.500 6z" fill="#fff" stroke="#222" stroke-width="1"/>
<rect x="30" y="445.5" width="13" height="14" fill="#fff" stroke="#222" stroke-width="1.100"/><path d="M32 453.5l1.500 3 2-7h5" stroke="#b02020" fill="none" stroke-width="1"/><text x="37.5" y="456.5" font-size="7" fill="#222">a</text><path d="M30 448.0h13" stroke="#222"/>
<path d="M48 452h5l-2.500 3z" fill="#222"/>
<rect x="30" y="467" width="13" height="14" fill="#fff" stroke="#222" stroke-width="1.100"/><path d="M32.5 470v8h8" stroke="#222" fill="none"/><path d="M33.5 476l2.500-3 2 1.500 3-4" stroke="#d02020" fill="none" stroke-width="1.100"/>
<path d="M48 474h5l-2.500 3z" fill="#222"/>
<path d="M34 503c-1-3-4-5-3.500-7 1-1 2 0 2.500 1v-7c0-1.500 2-1.500 2 0v-1.500c0-1.500 2-1.500 2 0v1c0-1.500 2-1.500 2 0v1.500c0-1.300 2-1.300 2 0v7c0 2-1 4-1.500 6z" fill="#c0c0cc" stroke="#8c8c9c" stroke-width="1"/><path d="M29 495h16M29 499h16" stroke="#8c8c9c" stroke-dasharray="2 1.500"/>
<path d="M31 515l3-4h9v10l-3 4h-9z" fill="#b8b8c6" stroke="#8c8c9c"/><path d="M31 515h9v10M40 515l3-4" stroke="#8c8c9c" fill="none"/>
<path d="M26 531h31q3 0 3 3v5q0 2-3 2h-28q-3 0-3-3z" fill="#d0d0e0"/>
<path d="M50 534v4l2-2zM53 534v4l2-2z" fill="#222"/>
<path d="M25 544H50V684Q50 689 45 689H30Q25 689 25 684z" fill="url(#gv)"/>
<rect x="30" y="546" width="2" height="2" fill="#9c9cb6"/><rect x="31" y="547" width="1" height="1" fill="#fff"/><rect x="34" y="546" width="2" height="2" fill="#9c9cb6"/><rect x="35" y="547" width="1" height="1" fill="#fff"/><rect x="38" y="546" width="2" height="2" fill="#9c9cb6"/><rect x="39" y="547" width="1" height="1" fill="#fff"/><rect x="42" y="546" width="2" height="2" fill="#9c9cb6"/><rect x="43" y="547" width="1" height="1" fill="#fff"/><rect x="46" y="546" width="2" height="2" fill="#9c9cb6"/><rect x="47" y="547" width="1" height="1" fill="#fff"/>
<path d="M30 555h13M30 558h13M30 561h13M30 564h13M30 567h13M30 570h13" stroke="#a8a8b8" stroke-width="1.600"/>
<circle cx="36.5" cy="584" r="7" fill="none" stroke="#a0a0b0" stroke-width="1.300"/><circle cx="36.5" cy="584" r="3.500" fill="none" stroke="#a0a0b0" stroke-width="1.300"/>
<rect x="29.5" y="597" width="14" height="16" fill="#fff" stroke="#222" stroke-width="1.100"/><text x="36" y="604.5" font-size="7.500" font-weight="bold" fill="#2050b0" style="font-family:'Liberation Sans',sans-serif">B</text><text x="36" y="611.5" font-size="7.500" font-weight="bold" fill="#2050b0" style="font-family:'Liberation Sans',sans-serif">C</text><path d="M31 602h4M31 609h4" stroke="#222"/>
<path d="M30 634v-6h13v6" stroke="#222" fill="none" stroke-width="1.200"/><text x="36.5" y="628" font-size="13" font-weight="bold" fill="#111" text-anchor="middle" style="font-family:'Liberation Sans',sans-serif">*</text>
<rect x="31" y="641" width="11" height="16" fill="#fff" stroke="#222" stroke-width="1"/><path d="M33.5 644v11M36.5 644v11M39.5 644v11" stroke="#222" stroke-dasharray="1.500 1.500" stroke-width="1.300"/>
<circle cx="36" cy="669.5" r="6.500" fill="#fff" stroke="#555" stroke-width="1.300"/><path d="M36 666v4h3" stroke="#333" fill="none"/><path d="M37 678h8v-4h-2.500v-2.500h-3v2.500h-2.500z" fill="#d02020"/>
<path d="M25 689h25v7q0 3-3 3h-19q-3 0-3-3z" fill="#dcdcea"/>
<path d="M31.5 692h3.500M31 694.500h4.500l-2.250 2.500z" stroke="#222" fill="#222" stroke-width="0.800"/><path d="M41 692v5M42.5 692v5l2.500-2.500z" fill="#222" stroke="#222" stroke-width="0.600"/>
</svg>
<div class="a stab" style="left:5px;top:112px;letter-spacing:0.314px">Project Explorer (1)</div>
<div class="a stab" style="left:5px;top:257.5px;letter-spacing:0.382px">Quick Help</div>
<div class="a stab" style="left:5px;top:357.5px;letter-spacing:0.573px">Messages Log</div>
<div class="a stab" style="left:5px;top:479.5px;letter-spacing:0.357px">Smart Hint Log</div>
<svg class="a" style="left:0;top:0" width="893" height="720" viewBox="0 0 893 720">
<rect x="868" y="106" width="25" height="596" fill="#e9e9f8"/>
<path d="M892 107H874Q870 107 870 111V159Q870 163 874 163H892z" fill="#f3f3fa" stroke="#d0d0e0" stroke-width="1"/>
<path d="M892 163H874Q870 163 870 167V288Q870 292 874 292H892z" fill="#f3f3fa" stroke="#d0d0e0" stroke-width="1"/>
<path d="M835 107H868V477Q868 482 863 482H840Q835 482 835 477z" fill="url(#gv)"/>
<rect x="839" y="109" width="2" height="2" fill="#9c9cb6"/><rect x="840" y="110" width="1" height="1" fill="#fff"/><rect x="843" y="109" width="2" height="2" fill="#9c9cb6"/><rect x="844" y="110" width="1" height="1" fill="#fff"/><rect x="847" y="109" width="2" height="2" fill="#9c9cb6"/><rect x="848" y="110" width="1" height="1" fill="#fff"/><rect x="851" y="109" width="2" height="2" fill="#9c9cb6"/><rect x="852" y="110" width="1" height="1" fill="#fff"/><rect x="855" y="109" width="2" height="2" fill="#9c9cb6"/><rect x="856" y="110" width="1" height="1" fill="#fff"/><rect x="859" y="109" width="2" height="2" fill="#9c9cb6"/><rect x="860" y="110" width="1" height="1" fill="#fff"/>
<rect x="851" y="118.5" width="4.5" height="2.2" fill="#111"/><rect x="845.5" y="121.5" width="6.5" height="2.5" fill="#111"/><rect x="840" y="124.8" width="6" height="2.5" fill="#111"/><rect x="850" y="124.8" width="5" height="2.5" fill="#111"/><rect x="845" y="128" width="7" height="2.5" fill="#111"/><rect x="840" y="131.3" width="5.5" height="2.5" fill="#111"/>
<path d="M843 141v12h12M843 153l10-10" stroke="#d02020" fill="none" stroke-width="1.200"/><path d="M841 143l2-3 2 3M853 151l3 2-3 2M850 142h4v4" stroke="#d02020" fill="none" stroke-width="1.100"/>
<path d="M843 163v12" stroke="#111" stroke-width="1.200"/><path d="M843 175h12M853 173l3 2-3 2" stroke="#d02020" fill="none" stroke-width="1.200"/><path d="M843 175l10-10" stroke="#111" stroke-width="1.100"/>
<path d="M843 184v12M841 186l2-3 2 3" stroke="#d02020" fill="none" stroke-width="1.200"/><path d="M843 196h12M843 196l10-10" stroke="#111" stroke-width="1.200"/>
<path d="M843 208.5a6 6 0 0 1 10-1.500M853 216.5a6 6 0 0 1-10 1.500" stroke="#111" fill="none" stroke-width="1.200"/><path d="M851 205.5l2.500 2-3 1.500M845 219.5l-2.500-2 3-1.500" stroke="#111" fill="none"/><text x="842" y="216.0" font-size="9" font-weight="bold" fill="#111" style="font-family:'Liberation Sans',sans-serif">XY</text>
<rect x="837.5" y="224.500" width="21" height="21" fill="#dcedfa" stroke="#6aa8d8"/>
<path d="M841 226v15h15" stroke="#111" fill="none" stroke-dasharray="1.500 1" stroke-width="1.300"/><circle cx="851" cy="228.5" r="1.500" fill="#111"/><path d="M845 232l3-2 3 1 2 2M849.5 231l-1.500 4 2.500 2-1 3M848 235l-2 2-2.500 0" stroke="#111" stroke-width="1.300" fill="none"/>
<path d="M839 248.5h18" stroke="#c8c8d8" stroke-width="1"/><path d="M839 249.5h18" stroke="#f0f0f8" stroke-width="1"/>
<rect x="841" y="256" width="14" height="16" fill="#fff" stroke="#111" stroke-width="1.200"/><path d="M841 260.5h14" stroke="#111"/><path d="M844 265v3h3M849 265v3h3" stroke="#111" fill="none"/>
<rect x="840.5" y="277.5" width="15" height="6" fill="#fff" stroke="#111"/><rect x="840.5" y="285.5" width="7" height="6.500" fill="#fff" stroke="#111"/><rect x="848.5" y="285.5" width="7" height="6.500" fill="#fff" stroke="#111"/><path d="M843 279v3h3M849 279v3h3M842.5 287v3h3M850.5 287v3h3" stroke="#111" fill="none" stroke-width="0.800"/>
<rect x="840.5" y="308" width="15" height="6" fill="#fff" stroke="#111"/><rect x="840.5" y="299.5" width="7" height="6.500" fill="#fff" stroke="#111"/><rect x="848.5" y="299.5" width="7" height="6.500" fill="#fff" stroke="#111"/><path d="M843 309.5v3h3M849 309.5v3h3M842.5 301v3h3M850.5 301v3h3" stroke="#111" fill="none" stroke-width="0.800"/>
<g transform="translate(840,321)"><rect x="1" y="0.500" width="14" height="5.500" fill="#f8d0d8" stroke="#b03050" stroke-width="1"/><path d="M1 6l5-3 4 2 5-4" stroke="#d04060" fill="none" stroke-width="0.8"/><rect x="1" y="7" width="11" height="6" fill="#fff" stroke="#555" stroke-width="1"/><rect x="4" y="9.500" width="11.500" height="6" fill="#fff" stroke="#111" stroke-width="1.200"/></g>
<path d="M861 328h5l-2.500 3z" fill="#222"/>
<path d="M839 343.5h18" stroke="#c8c8d8" stroke-width="1"/><path d="M839 344.5h18" stroke="#f0f0f8" stroke-width="1"/>
<path d="M842 352v13h12" stroke="#111" fill="none" stroke-width="1.300"/><path d="M842 362h2M846 365v-2M851 365v-2" stroke="#111"/>
<path d="M842 375h12M842 375v12" stroke="#111" fill="none" stroke-dasharray="1.500 1.200" stroke-width="1.300"/><path d="M854 375v3M848 375v2" stroke="#111"/>
<rect x="842" y="396" width="12" height="12" fill="none" stroke="#111" stroke-dasharray="1.500 1.200" stroke-width="1.300"/>
<rect x="842" y="417" width="12" height="12" fill="none" stroke="#111" stroke-dasharray="1.500 1.200" stroke-width="1.300"/><path d="M842 417h12v12" stroke="#111" fill="none" stroke-width="1.200"/>
<path d="M842 440v12h12" stroke="#111" fill="none" stroke-dasharray="1.500 1.200" stroke-width="1.300"/><path d="M847 443v3h4" stroke="#111" fill="none" stroke-width="1.600"/>
<path d="M842 461v12h12" stroke="#111" fill="none" stroke-dasharray="1.500 1.200" stroke-width="1.300"/><path d="M847 464v3h4M849 463l2 2" stroke="#c02020" fill="none" stroke-width="1.600"/>
<path d="M835 482h33v6q0 3-3 3h-27q-3 0-3-3z" fill="#d0d0e0"/>
<path d="M858 485v4l2-2zM861 485v4l2-2z" fill="#222"/>
<path d="M836 493H860V694Q860 699 855 699H841Q836 699 836 694z" fill="url(#gv)"/>
<rect x="839" y="496" width="2" height="2" fill="#9c9cb6"/><rect x="840" y="497" width="1" height="1" fill="#fff"/><rect x="843" y="496" width="2" height="2" fill="#9c9cb6"/><rect x="844" y="497" width="1" height="1" fill="#fff"/><rect x="847" y="496" width="2" height="2" fill="#9c9cb6"/><rect x="848" y="497" width="1" height="1" fill="#fff"/><rect x="851" y="496" width="2" height="2" fill="#9c9cb6"/><rect x="852" y="497" width="1" height="1" fill="#fff"/><rect x="855" y="496" width="2" height="2" fill="#9c9cb6"/><rect x="856" y="497" width="1" height="1" fill="#fff"/>
<path d="M842 505h12" stroke="#8c8c9c" stroke-dasharray="1.500 1"/><rect x="842" y="508" width="5" height="6" fill="#eee" stroke="#8c8c9c"/><rect x="849" y="508" width="5" height="11" fill="#eee" stroke="#8c8c9c"/>
<path d="M842 539h12" stroke="#8c8c9c" stroke-dasharray="1.500 1"/><rect x="842" y="531" width="5" height="6" fill="#eee" stroke="#8c8c9c"/><rect x="849" y="526" width="5" height="11" fill="#eee" stroke="#8c8c9c"/>
<path d="M841 557v14" stroke="#8c8c9c" stroke-dasharray="1.500 1"/><rect x="843" y="558" width="5" height="12" fill="#eee" stroke="#8c8c9c"/><rect x="850" y="558" width="5" height="6" fill="#eee" stroke="#8c8c9c"/>
<path d="M855 577v14" stroke="#8c8c9c" stroke-dasharray="1.500 1"/><rect x="842" y="578" width="5" height="12" fill="#eee" stroke="#8c8c9c"/><rect x="849" y="584" width="5" height="6" fill="#eee" stroke="#8c8c9c"/>
<path d="M848 610v16" stroke="#8c8c9c"/><rect x="845" y="612" width="6" height="5" fill="#eee" stroke="#8c8c9c"/><rect x="842" y="619" width="12" height="5" fill="#eee" stroke="#8c8c9c"/>
<path d="M840 638h16" stroke="#8c8c9c"/><rect x="842" y="635" width="5" height="6" fill="#eee" stroke="#8c8c9c"/><rect x="849" y="632" width="5" height="12" fill="#eee" stroke="#8c8c9c"/>
<path d="M842 659h12" stroke="#8c8c9c" stroke-dasharray="1.500 1"/><rect x="843" y="662" width="10" height="5" fill="#eee" stroke="#8c8c9c"/><rect x="843" y="669" width="10" height="5" fill="#eee" stroke="#8c8c9c"/><path d="M841 662v12M855 662v12" stroke="#8c8c9c" stroke-dasharray="1.500 1"/>
<path d="M840.5 692h3.500M840 694.500h4.500l-2.250 2.500z" stroke="#222" fill="#222" stroke-width="0.800"/><path d="M851 692v5M852.5 692v5l2.500-2.500z" fill="#222" stroke="#222" stroke-width="0.600"/>
</svg>
<div class="a stab" style="left:876px;top:113.5px;letter-spacing:-0.252px">Apps</div>
<div class="a stab" style="left:876px;top:182.5px;letter-spacing:0.354px">Object Manager</div>
<svg class="a" style="left:0;top:0" width="893" height="720" viewBox="0 0 893 720">
<path d="M61 674H367Q370 674 370 677V695Q370 698 367 698H61z" fill="url(#gh)"/>
<rect x="64" y="679" width="2" height="2" fill="#9c9cb6"/><rect x="65" y="680" width="1" height="1" fill="#fff"/><rect x="64" y="683" width="2" height="2" fill="#9c9cb6"/><rect x="65" y="684" width="1" height="1" fill="#fff"/><rect x="64" y="687" width="2" height="2" fill="#9c9cb6"/><rect x="65" y="688" width="1" height="1" fill="#fff"/><rect x="64" y="691" width="2" height="2" fill="#9c9cb6"/><rect x="65" y="692" width="1" height="1" fill="#fff"/>
<path d="M381 674H572Q575 674 575 677V695Q575 698 572 698H381z" fill="url(#gh)"/>
<rect x="385" y="679" width="2" height="2" fill="#9c9cb6"/><rect x="386" y="680" width="1" height="1" fill="#fff"/><rect x="385" y="683" width="2" height="2" fill="#9c9cb6"/><rect x="386" y="684" width="1" height="1" fill="#fff"/><rect x="385" y="687" width="2" height="2" fill="#9c9cb6"/><rect x="386" y="688" width="1" height="1" fill="#fff"/><rect x="385" y="691" width="2" height="2" fill="#9c9cb6"/><rect x="386" y="692" width="1" height="1" fill="#fff"/>
<path d="M586 674H777Q780 674 780 677V695Q780 698 777 698H586z" fill="url(#gh)"/>
<rect x="590" y="679" width="2" height="2" fill="#9c9cb6"/><rect x="591" y="680" width="1" height="1" fill="#fff"/><rect x="590" y="683" width="2" height="2" fill="#9c9cb6"/><rect x="591" y="684" width="1" height="1" fill="#fff"/><rect x="590" y="687" width="2" height="2" fill="#9c9cb6"/><rect x="591" y="688" width="1" height="1" fill="#fff"/><rect x="590" y="691" width="2" height="2" fill="#9c9cb6"/><rect x="591" y="692" width="1" height="1" fill="#fff"/>
<path d="M795 674H820Q823 674 823 677V695Q823 698 820 698H795z" fill="url(#gh)"/>
<rect x="799" y="679" width="2" height="2" fill="#9c9cb6"/><rect x="800" y="680" width="1" height="1" fill="#fff"/><rect x="799" y="683" width="2" height="2" fill="#9c9cb6"/><rect x="800" y="684" width="1" height="1" fill="#fff"/><rect x="799" y="687" width="2" height="2" fill="#9c9cb6"/><rect x="800" y="688" width="1" height="1" fill="#fff"/><rect x="799" y="691" width="2" height="2" fill="#9c9cb6"/><rect x="800" y="692" width="1" height="1" fill="#fff"/>
<path d="M366 674H377Q380 674 380 677V694Q380 698 383 699H365Q368 698 368 694V677Q368 674 366 674z" fill="url(#gc)"/>
<path d="M571 674H582Q585 674 585 677V694Q585 698 588 699H570Q573 698 573 694V677Q573 674 571 674z" fill="url(#gc)"/>
<path d="M779 674H792Q795 674 795 677V694Q795 698 798 699H778Q781 698 781 694V677Q781 674 779 674z" fill="url(#gc)"/>
<path d="M819 674H832Q835 674 835 677V694Q835 698 838 699H818Q821 698 821 694V677Q821 674 819 674z" fill="url(#gc)"/>
<path d="M371.5 688.5h6.500" stroke="#111" stroke-width="1.200"/><path d="M371.3 691h7l-3.500 3.500z" fill="#111"/>
<path d="M576.5 688.5h6.500" stroke="#111" stroke-width="1.200"/><path d="M576.3 691h7l-3.500 3.500z" fill="#111"/>
<path d="M785.5 679l2.200 2-2.200 2zM788.8 679l2.200 2-2.200 2z" fill="#111"/><path d="M785.5 688.5h6.500" stroke="#111" stroke-width="1.200"/><path d="M785.3 691h7l-3.500 3.500z" fill="#111"/>
<path d="M825.5 679l2.200 2-2.200 2zM828.8 679l2.200 2-2.200 2z" fill="#111"/><path d="M825.5 688.5h6.500" stroke="#111" stroke-width="1.200"/><path d="M825.3 691h7l-3.500 3.500z" fill="#111"/>
<path d="M72 693l14-14" stroke="#111" stroke-width="1.200"/>
<path d="M91.5 685h5l-2.500 3z" fill="#222"/>
<rect x="104" y="688.5" width="3" height="3" fill="#111"/><rect x="109" y="684.5" width="3" height="3" fill="#111"/><rect x="114" y="680" width="3" height="3" fill="#111"/>
<path d="M122.5 685h5l-2.500 3z" fill="#222"/>
<path d="M134 692l14-12" stroke="#111" stroke-width="1.200"/><rect x="133" y="690" width="3" height="3" fill="#111"/><rect x="140" y="684.5" width="3" height="3" fill="#111"/><rect x="147" y="679" width="3" height="3" fill="#111"/>
<path d="M153.5 685h5l-2.500 3z" fill="#222"/>
<rect x="164" y="684" width="4.500" height="10" fill="#c82020" stroke="#701010" stroke-width="0.600"/><rect x="169" y="678" width="4.500" height="16" fill="#c82020" stroke="#701010" stroke-width="0.600"/><rect x="174" y="682" width="4.500" height="12" fill="#c82020" stroke="#701010" stroke-width="0.600"/>
<path d="M183.5 685h5l-2.500 3z" fill="#222"/>
<rect x="195" y="678.500" width="15" height="15" fill="#fff" stroke="#111" stroke-width="1.200"/><path d="M196 693l13-13M197 683l5 4 3-3 4 6" stroke="#2040a0" fill="none" stroke-width="1"/>
<path d="M214.5 685h5l-2.500 3z" fill="#222"/>
<path d="M233 677v4M233 691v4M229 677h8M229 695h8" stroke="#d02020" stroke-width="1.300"/><rect x="228.5" y="681" width="9" height="10" fill="#fff" stroke="#d02020" stroke-width="1.300"/><path d="M229 686h8" stroke="#d02020"/>
<path d="M244.5 685h5l-2.500 3z" fill="#222"/>
<path d="M256 694v-10l5 5 5-7 5 4v8z" fill="#111"/><path d="M256 694v-6l5 3 5-5 5 4v4z" fill="#d02020"/><path d="M260 688l5-6 4 4-4 3z" fill="#30c030"/>
<path d="M275.5 685h5l-2.500 3z" fill="#222"/>
<circle cx="296" cy="686" r="6.500" fill="none" stroke="#333" stroke-width="1.200"/><path d="M287 678v16" stroke="#333" stroke-width="1.300"/><text x="293.5" y="689.500" font-size="9" fill="#111" style="font-family:'Liberation Sans',sans-serif">r</text>
<path d="M306.5 685h5l-2.500 3z" fill="#222"/>
<path d="M321 678v16M329 677v18" stroke="#111"/><rect x="318.5" y="681.500" width="5" height="8" fill="#fff" stroke="#111"/><rect x="326.5" y="680.500" width="5" height="11" fill="#d02020" stroke="#d02020"/>
<path d="M336.5 685h5l-2.500 3z" fill="#222"/>
<path d="M350 681l4-3h9v11l-4 3h-9z" fill="#c4c4d0" stroke="#8c8c9c"/><path d="M350 681h9v11M359 681l4-3" stroke="#8c8c9c" fill="none"/>
<path d="M392 683l5-5h9v9l-5 6h-9z" fill="#e4e4ee" stroke="#8c8c9c"/><path d="M392 683h9v10M401 683l5-5" stroke="#8c8c9c" fill="none"/><path d="M395 693v-9l3-3v9M399 690v-8l3-3" stroke="#8c8c9c" fill="none"/>
<path d="M412.5 685h5l-2.500 3z" fill="#444"/>
<path d="M425.5 677v18" stroke="#c0c0d0" stroke-width="1"/><path d="M426.5 677v18" stroke="#f0f0f8" stroke-width="1"/>
<path d="M430 683l5-5h9v9l-5 6h-9z" fill="#e4e4ee" stroke="#8c8c9c"/><path d="M430 683h9v10M439 683l5-5" stroke="#8c8c9c" fill="none"/><path d="M433 686l9-1 3-4" stroke="#8c8c9c" fill="none"/>
<path d="M450.5 685h5l-2.500 3z" fill="#444"/>
<path d="M462 683l5-5h9v9l-5 6h-9z" fill="#e4e4ee" stroke="#8c8c9c"/><path d="M462 683h9v10M471 683l5-5" stroke="#8c8c9c" fill="none"/><circle cx="467" cy="688" r="0.800" fill="#8c8c9c"/><circle cx="471" cy="685" r="0.800" fill="#8c8c9c"/>
<path d="M481 685h5l-2.500 3z" fill="#444"/>
<rect x="492" y="679" width="14" height="13" fill="#d0d0dc" stroke="#8c8c9c" stroke-width="1"/><path d="M495.50 679v13M499.00 679v13M502.50 679v13M492 682.25h14M492 685.50h14M492 688.75h14" stroke="#8c8c9c" stroke-width="1" fill="none"/>
<path d="M511.5 685h5l-2.500 3z" fill="#444"/>
<path d="M523 693v-9l4 2v-4l4 2v-4l4 2v-4h2v15z" fill="#c0c0cc" stroke="#8c8c9c"/><path d="M526 689h2M530 689h2M534 689h2" stroke="#fff" stroke-width="2"/>
<path d="M542.5 685h5l-2.500 3z" fill="#444"/>
<rect x="554.5" y="678.500" width="15" height="15" fill="#b4b4c2" stroke="#8c8c9c"/><path d="M555 679l14 14" stroke="#c8c8d4"/>
<rect x="602" y="679" width="7" height="13" fill="#b8b8c6" stroke="#8c8c9c"/><path d="M599 693h14M610 682c4 0 4 5 0 6" stroke="#8c8c9c" fill="none" stroke-width="1.300"/>
<rect x="623.5" y="679" width="7" height="13" fill="#b8b8c6" stroke="#8c8c9c"/><path d="M620.5 693h14M631.5 682c4 0 4 5 0 6" stroke="#8c8c9c" fill="none" stroke-width="1.300"/>
<rect x="646" y="679" width="6" height="14" fill="#b8b8c6" stroke="#8c8c9c" transform="rotate(-15 649 686)"/><path d="M653 684h7m-3-3l3 3-3 3" stroke="#8c8c9c" fill="none" stroke-width="1.300"/>
<rect x="668" y="679" width="6" height="14" fill="#b8b8c6" stroke="#8c8c9c" transform="rotate(15 671 686)"/><path d="M660 684h7m-3-3l3 3-3 3" stroke="#8c8c9c" fill="none" stroke-width="1.300"/>
<path d="M685 693l3.500-14h7l3.500 14z" fill="#b8b8c6" stroke="#8c8c9c"/><path d="M686 689h12" stroke="#eee"/>
<path d="M707 679h14l-3.500 14h-7z" fill="#b8b8c6" stroke="#8c8c9c"/><path d="M708 683h12" stroke="#eee"/>
<path d="M729 693v-6l3-8h7l4 8v6z" fill="#d0d0dc" stroke="#8c8c9c"/><path d="M729 687h14" stroke="#8c8c9c"/>
<rect x="755" y="679" width="10" height="9" fill="#c8c8d4" stroke="#8c8c9c"/><rect x="751" y="684" width="10" height="9" fill="#b8b8c6" stroke="#8c8c9c"/>
</svg>
<div class="a" style="left:59px;top:105.5px;width:776px;height:567.5px;background:#f6f6fb"></div>
<div class="a" style="left:60.5px;top:106px;width:772.5px;height:564.5px;background:#74747e"></div>
<div class="a" style="left:62px;top:107.5px;width:771px;height:563px;background:#c0c0c0"></div>
<div class="a" style="left:81px;top:108px;width:715px;height:557.8px;background:#fff"></div>
<div class="a" style="left:62.3px;top:108px;width:19.5px;height:19px;background:#b8b8b8;border:1.5px solid;border-color:#fff #808080 #808080 #fff;color:#fff;font-size:13.5px;font-weight:bold;line-height:17px;text-align:center;font-family:'Liberation Sans',sans-serif">1</div>
<div class="a" style="left:82.6px;top:108px;width:19.5px;height:19px;background:#b8b8b8;border:1.5px solid;border-color:#fff #808080 #808080 #fff;color:#fff;font-size:13.5px;font-weight:bold;line-height:17px;text-align:center;font-family:'Liberation Sans',sans-serif">2</div>
<div class="a" style="left:102.9px;top:108px;width:19.5px;height:19px;background:#b8b8b8;border:1.5px solid;border-color:#fff #808080 #808080 #fff;color:#fff;font-size:13.5px;font-weight:bold;line-height:17px;text-align:center;font-family:'Liberation Sans',sans-serif">3</div>
<div class="a" style="left:123.2px;top:108px;width:18.5px;height:18.5px;background:#c6c6c6;color:#000;font-size:12.5px;font-weight:bold;line-height:22px;text-align:center;padding-left:1px;font-family:'Liberation Sans',sans-serif">4</div>
<svg class="a" style="left:0;top:0" width="893" height="720" viewBox="0 0 893 720">
<polyline points="155.5,317.9 155.6,322.7 155.8,323.9 155.9,330.9 156.1,325.2 156.2,325.5 156.3,324.5 156.5,326.4 156.6,324.3 156.8,325.8 156.9,328.8 157.0,320.9 157.2,320.8 157.3,317.8 157.5,323.8 157.6,325.4 157.7,325.9 157.9,329.5 158.0,320.3 158.2,327.8 158.3,328.1 158.4,324.5 158.6,318.4 158.7,322.9 158.9,327.4 159.0,326.2 159.1,321.4 159.3,324.2 159.4,326.4 159.6,324.4 159.7,320.9 159.8,316.4 160.0,328.0 160.1,325.7 160.3,326.3 160.4,332.1 160.5,326.7 160.7,327.0 160.8,319.3 161.0,323.8 161.1,329.1 161.2,320.9 161.4,324.5 161.5,329.5 161.7,325.3 161.8,325.2 161.9,326.2 162.1,322.9 162.2,331.2 162.4,324.0 162.5,319.3 162.6,319.8 162.8,318.9 162.9,318.8 163.1,317.4 163.2,326.8 163.3,319.7 163.5,329.5 163.6,324.9 163.8,329.6 163.9,318.8 164.0,317.7 164.2,323.3 164.3,316.1 164.5,324.9 164.6,321.9 164.7,321.8 164.9,326.2 165.0,320.7 165.2,315.2 165.3,326.0 165.4,318.9 165.6,322.7 165.7,315.7 165.9,320.3 166.0,319.6 166.1,319.7 166.3,321.0 166.4,327.0 166.6,316.8 166.7,326.8 166.8,320.9 167.0,319.5 167.1,324.7 167.3,321.1 167.4,317.3 167.5,321.6 167.7,324.7 167.8,332.1 168.0,325.0 168.1,323.5 168.2,323.2 168.4,324.8 168.5,319.8 168.7,323.2 168.8,321.5 168.9,318.5 169.1,324.1 169.2,322.0 169.4,312.9 169.5,317.5 169.6,325.5 169.8,320.9 169.9,318.5 170.1,315.9 170.2,319.9 170.3,322.4 170.5,323.0 170.6,317.9 170.8,319.0 170.9,322.0 171.0,320.8 171.2,321.5 171.3,317.2 171.5,322.4 171.6,317.9 171.7,316.5 171.9,317.8 172.0,322.6 172.2,314.4 172.3,321.9 172.4,317.7 172.6,322.0 172.7,325.7 172.9,318.2 173.0,317.9 173.1,319.1 173.3,317.7 173.4,321.1 173.6,321.4 173.7,319.1 173.8,311.1 174.0,315.2 174.1,320.2 174.3,316.0 174.4,319.8 174.5,319.6 174.7,314.5 174.8,319.7 175.0,324.0 175.1,320.9 175.2,317.0 175.4,316.7 175.5,312.3 175.7,319.8 175.8,314.1 176.0,315.1 176.1,317.2 176.2,313.3 176.4,314.5 176.5,319.6 176.7,312.0 176.8,320.8 176.9,315.7 177.1,315.8 177.2,314.0 177.4,318.3 177.5,315.5 177.6,315.8 177.8,311.2 177.9,318.1 178.1,314.5 178.2,315.7 178.3,319.7 178.5,303.8 178.6,314.5 178.8,320.0 178.9,308.3 179.0,318.0 179.2,312.1 179.3,310.0 179.5,315.9 179.6,314.8 179.7,315.1 179.9,313.3 180.0,319.2 180.2,317.4 180.3,312.8 180.4,307.9 180.6,309.4 180.7,304.7 180.9,308.7 181.0,313.5 181.1,311.7 181.3,319.3 181.4,314.8 181.6,314.8 181.7,309.3 181.8,307.6 182.0,312.4 182.1,312.3 182.3,316.1 182.4,310.0 182.5,308.3 182.7,307.2 182.8,312.2 183.0,300.3 183.1,303.5 183.2,308.7 183.4,310.3 183.5,309.2 183.7,307.0 183.8,307.5 183.9,305.2 184.1,303.7 184.2,301.0 184.4,301.7 184.5,306.8 184.6,304.5 184.8,307.6 184.9,308.2 185.1,297.2 185.2,307.2 185.3,296.4 185.5,306.3 185.6,303.4 185.8,299.6 185.9,304.0 186.0,302.1 186.2,304.7 186.3,305.5 186.5,303.9 186.6,305.8 186.7,295.5 186.9,303.2 187.0,294.6 187.2,313.9 187.3,301.6 187.4,299.0 187.6,302.6 187.7,296.1 187.9,297.9 188.0,301.8 188.1,298.4 188.3,287.5 188.4,298.8 188.6,298.4 188.7,301.5 188.8,298.7 189.0,304.9 189.1,299.7 189.3,287.4 189.4,293.5 189.5,295.2 189.7,292.9 189.8,289.1 190.0,294.8 190.1,287.7 190.2,292.1 190.4,296.1 190.5,288.7 190.7,307.4 190.8,298.9 190.9,294.8 191.1,300.0 191.2,296.3 191.4,298.4 191.5,298.2 191.6,282.2 191.8,291.8 191.9,294.8 192.1,288.1 192.2,295.2 192.3,289.7 192.5,292.0 192.6,285.7 192.8,300.1 192.9,289.4 193.0,292.3 193.2,298.2 193.3,287.4 193.5,296.5 193.6,284.3 193.7,289.5 193.9,288.4 194.0,291.2 194.2,287.0 194.3,300.2 194.4,290.7 194.6,293.9 194.7,289.3 194.9,290.7 195.0,287.3 195.1,294.2 195.3,281.0 195.4,278.5 195.6,290.7 195.7,289.6 195.8,287.9 196.0,283.0 196.1,279.7 196.3,294.8 196.4,291.8 196.5,293.8 196.7,293.9 196.8,296.4 197.0,286.3 197.1,293.7 197.2,280.4 197.4,283.2 197.5,292.7 197.7,292.6 197.8,290.3 197.9,280.2 198.1,291.3 198.2,294.3 198.4,287.0 198.5,284.7 198.6,289.7 198.8,278.2 198.9,284.9 199.1,283.7 199.2,290.1 199.3,285.8 199.5,286.1 199.6,296.5 199.8,283.4 199.9,293.5 200.0,284.3 200.2,291.1 200.3,273.0 200.5,280.8 200.6,277.1 200.7,275.1 200.9,283.6 201.0,283.7 201.2,266.4 201.3,249.2 201.4,238.5 201.6,217.9 201.7,201.4 201.9,204.8 202.0,198.7 202.1,203.2 202.3,233.0 202.4,256.6 202.6,260.6 202.7,271.1 202.8,272.7 203.0,283.0 203.1,280.2 203.3,293.1 203.4,278.6 203.5,275.6 203.7,277.5 203.8,292.0 204.0,283.1 204.1,299.9 204.2,283.9 204.4,285.8 204.5,290.7 204.7,284.1 204.8,285.3 204.9,281.5 205.1,285.7 205.2,285.3 205.4,296.2 205.5,292.4 205.6,289.1 205.8,285.4 205.9,287.0 206.1,279.7 206.2,291.5 206.3,288.5 206.5,286.1 206.6,288.6 206.8,285.1 206.9,290.4 207.0,280.7 207.2,289.3 207.3,282.4 207.5,288.0 207.6,280.6 207.7,294.8 207.9,285.4 208.0,290.0 208.2,286.7 208.3,281.7 208.4,292.6 208.6,292.5 208.7,289.4 208.9,280.9 209.0,287.8 209.1,274.1 209.3,276.6 209.4,273.2 209.6,269.5 209.7,268.8 209.8,278.0 210.0,281.8 210.1,283.4 210.3,287.2 210.4,300.6 210.5,291.1 210.7,289.4 210.8,285.1 211.0,281.0 211.1,287.8 211.2,290.9 211.4,296.1 211.5,291.3 211.7,288.3 211.8,286.2 211.9,296.5 212.1,291.4 212.2,288.9 212.4,284.3 212.5,291.9 212.6,295.8 212.8,296.6 212.9,295.3 213.1,296.8 213.2,290.1 213.3,289.2 213.5,290.9 213.6,289.0 213.8,296.6 213.9,293.0 214.0,296.6 214.2,294.8 214.3,289.6 214.5,295.4 214.6,303.8 214.7,296.6 214.9,298.7 215.0,302.3 215.2,299.0 215.3,290.9 215.4,287.1 215.6,295.5 215.7,286.6 215.9,282.2 216.0,287.9 216.2,278.4 216.3,276.2 216.4,277.3 216.6,289.8 216.7,289.4 216.9,287.3 217.0,289.3 217.1,288.5 217.3,299.0 217.4,290.0 217.6,295.7 217.7,304.8 217.8,295.9 218.0,300.9 218.1,297.4 218.3,300.3 218.4,294.9 218.5,299.1 218.7,301.6 218.8,296.4 219.0,299.5 219.1,302.4 219.2,295.2 219.4,302.2 219.5,302.7 219.7,301.1 219.8,302.7 219.9,295.1 220.1,280.2 220.2,287.7 220.4,283.4 220.5,291.9 220.6,295.0 220.8,290.6 220.9,296.2 221.1,304.2 221.2,302.7 221.3,306.7 221.5,306.9 221.6,307.7 221.8,307.9 221.9,303.2 222.0,302.3 222.2,303.0 222.3,305.8 222.5,310.9 222.6,305.8 222.7,309.5 222.9,302.3 223.0,303.8 223.2,303.2 223.3,307.8 223.4,313.9 223.6,302.9 223.7,302.0 223.9,313.0 224.0,306.7 224.1,302.6 224.3,311.8 224.4,300.7 224.6,309.2 224.7,312.3 224.8,302.7 225.0,307.2 225.1,311.0 225.3,305.1 225.4,316.4 225.5,301.8 225.7,312.2 225.8,308.1 226.0,310.9 226.1,307.8 226.2,306.1 226.4,312.9 226.5,306.8 226.7,311.1 226.8,312.8 226.9,311.1 227.1,314.3 227.2,313.6 227.4,307.0 227.5,311.4 227.6,306.5 227.8,309.4 227.9,315.1 228.1,318.5 228.2,314.0 228.3,310.5 228.5,311.6 228.6,314.9 228.8,308.0 228.9,318.6 229.0,316.9 229.2,311.7 229.3,304.0 229.5,310.8 229.6,316.3 229.7,310.4 229.9,310.1 230.0,309.3 230.2,314.5 230.3,316.1 230.4,312.7 230.6,311.7 230.7,307.3 230.9,305.6 231.0,316.3 231.1,315.6 231.3,314.0 231.4,314.8 231.6,312.1 231.7,312.2 231.8,313.1 232.0,309.2 232.1,314.9 232.3,318.3 232.4,320.2 232.5,318.3 232.7,318.5 232.8,321.7 233.0,312.3 233.1,314.2 233.2,316.5 233.4,318.3 233.5,320.9 233.7,318.6 233.8,308.4 233.9,323.5 234.1,314.9 234.2,312.7 234.4,315.0 234.5,316.8 234.6,312.8 234.8,319.8 234.9,313.8 235.1,310.6 235.2,319.8 235.3,319.0 235.5,315.6 235.6,312.5 235.8,311.3 235.9,313.8 236.0,318.8 236.2,320.4 236.3,315.5 236.5,315.0 236.6,320.6 236.7,316.4 236.9,315.4 237.0,312.9 237.2,320.4 237.3,314.8 237.4,321.1 237.6,318.5 237.7,317.2 237.9,311.5 238.0,305.0 238.1,316.2 238.3,315.3 238.4,313.5 238.6,322.2 238.7,314.5 238.8,321.8 239.0,311.4 239.1,312.2 239.3,315.6 239.4,320.4 239.5,311.5 239.7,316.6 239.8,317.2 240.0,315.5 240.1,323.9 240.2,316.2 240.4,314.1 240.5,316.5 240.7,317.3 240.8,321.3 240.9,315.5 241.1,317.2 241.2,317.9 241.4,320.0 241.5,314.9 241.6,313.5 241.8,316.7 241.9,314.9 242.1,313.3 242.2,312.4 242.3,317.4 242.5,319.0 242.6,319.7 242.8,318.2 242.9,316.3 243.0,314.9 243.2,319.9 243.3,317.8 243.5,322.0 243.6,313.8 243.7,319.8 243.9,317.2 244.0,321.1 244.2,319.6 244.3,321.0 244.4,312.4 244.6,317.3 244.7,319.2 244.9,322.0 245.0,320.8 245.1,316.6 245.3,312.6 245.4,323.8 245.6,322.0 245.7,319.3 245.8,321.0 246.0,324.7 246.1,318.7 246.3,316.1 246.4,324.4 246.5,318.0 246.7,315.3 246.8,315.3 247.0,320.3 247.1,310.6 247.2,316.9 247.4,321.8 247.5,315.3 247.7,322.9 247.8,315.7 247.9,323.4 248.1,316.1 248.2,321.0 248.4,314.9 248.5,316.3 248.6,317.4 248.8,318.8 248.9,315.1 249.1,325.5 249.2,317.5 249.3,317.5 249.5,317.0 249.6,316.1 249.8,305.7 249.9,318.6 250.0,316.2 250.2,318.5 250.3,313.4 250.5,326.3 250.6,313.0 250.7,321.5 250.9,327.2 251.0,323.0 251.2,319.7 251.3,318.4 251.4,319.3 251.6,316.2 251.7,319.3 251.9,319.4 252.0,326.8 252.1,317.4 252.3,315.5 252.4,320.7 252.6,325.9 252.7,324.0 252.8,313.2 253.0,321.4 253.1,321.6 253.3,322.1 253.4,316.8 253.5,321.3 253.7,322.3 253.8,324.6 254.0,319.6 254.1,315.6 254.2,319.8 254.4,316.1 254.5,318.6 254.7,318.7 254.8,318.6 254.9,319.1 255.1,315.6 255.2,317.5 255.4,321.3 255.5,318.8 255.7,319.5 255.8,317.5 255.9,318.6 256.1,317.8 256.2,324.6 256.4,317.9 256.5,314.6 256.6,324.1 256.8,313.5 256.9,318.2 257.1,320.0 257.2,325.8 257.3,315.4 257.5,322.8 257.6,321.1 257.8,317.3 257.9,323.0 258.0,322.8 258.2,323.4 258.3,319.7 258.5,317.2 258.6,317.9 258.7,317.8 258.9,320.5 259.0,318.8 259.2,321.8 259.3,312.1 259.4,318.6 259.6,326.3 259.7,323.1 259.9,313.6 260.0,324.2 260.1,320.9 260.3,317.9 260.4,323.2 260.6,315.5 260.7,313.3 260.8,322.3 261.0,315.3 261.1,322.5 261.3,322.9 261.4,318.4 261.5,318.5 261.7,321.5 261.8,316.3 262.0,324.6 262.1,322.4 262.2,323.2 262.4,316.6 262.5,316.4 262.7,316.9 262.8,324.0 262.9,318.8 263.1,317.7 263.2,325.1 263.4,322.3 263.5,317.0 263.6,316.8 263.8,318.4 263.9,317.4 264.1,318.2 264.2,318.8 264.3,319.7 264.5,322.4 264.6,320.2 264.8,320.8 264.9,311.0 265.0,318.4 265.2,319.4 265.3,320.1 265.5,319.7 265.6,320.3 265.7,317.4 265.9,319.4 266.0,316.4 266.2,321.8 266.3,318.1 266.4,316.2 266.6,323.4 266.7,318.7 266.9,318.4 267.0,320.5 267.1,321.0 267.3,325.9 267.4,315.2 267.6,322.6 267.7,323.7 267.8,316.9 268.0,325.8 268.1,315.8 268.3,317.6 268.4,317.0 268.5,319.7 268.7,323.4 268.8,325.7 269.0,313.4 269.1,319.4 269.2,317.6 269.4,307.2 269.5,313.6 269.7,314.4 269.8,317.2 269.9,318.5 270.1,322.4 270.2,321.0 270.4,314.4 270.5,316.4 270.6,329.8 270.8,326.2 270.9,318.0 271.1,319.6 271.2,320.6 271.3,315.5 271.5,325.7 271.6,315.0 271.8,318.8 271.9,317.3 272.0,318.4 272.2,316.2 272.3,320.2 272.5,321.2 272.6,316.5 272.7,318.6 272.9,323.8 273.0,314.4 273.2,314.9 273.3,314.1 273.4,319.0 273.6,318.0 273.7,320.6 273.9,322.8 274.0,319.0 274.1,318.6 274.3,321.6 274.4,312.7 274.6,325.1 274.7,322.2 274.8,321.7 275.0,314.6 275.1,320.2 275.3,320.4 275.4,322.4 275.5,322.0 275.7,323.9 275.8,315.6 276.0,317.1 276.1,315.7 276.2,321.6 276.4,310.2 276.5,322.7 276.7,326.6 276.8,320.3 276.9,318.7 277.1,316.5 277.2,322.9 277.4,317.1 277.5,313.1 277.6,322.2 277.8,321.8 277.9,325.3 278.1,318.3 278.2,316.1 278.3,316.4 278.5,316.2 278.6,314.1 278.8,318.7 278.9,315.7 279.0,322.5 279.2,322.0 279.3,318.2 279.5,322.0 279.6,317.0 279.7,314.1 279.9,317.6 280.0,321.7 280.2,321.7 280.3,314.1 280.4,321.9 280.6,318.7 280.7,319.9 280.9,318.8 281.0,315.0 281.1,320.8 281.3,323.9 281.4,313.7 281.6,318.0 281.7,316.2 281.8,318.8 282.0,316.0 282.1,314.2 282.3,313.8 282.4,319.6 282.5,319.8 282.7,317.1 282.8,317.7 283.0,316.4 283.1,320.9 283.2,326.6 283.4,316.5 283.5,315.2 283.7,315.6 283.8,311.8 283.9,314.5 284.1,318.8 284.2,313.6 284.4,317.2 284.5,312.1 284.6,315.4 284.8,314.2 284.9,314.5 285.1,314.4 285.2,319.0 285.3,312.0 285.5,318.1 285.6,304.5 285.8,296.9 285.9,284.0 286.0,277.0 286.2,263.8 286.3,247.1 286.5,214.8 286.6,213.0 286.7,202.3 286.9,224.2 287.0,234.5 287.2,252.1 287.3,271.6 287.4,287.4 287.6,300.6 287.7,307.8 287.9,305.2 288.0,309.9 288.1,313.7 288.3,313.5 288.4,318.4 288.6,312.0 288.7,311.6 288.8,319.3 289.0,316.5 289.1,313.3 289.3,319.6 289.4,310.2 289.5,312.3 289.7,318.8 289.8,314.5 290.0,312.1 290.1,322.6 290.2,316.0 290.4,318.9 290.5,319.2 290.7,315.9 290.8,320.2 290.9,323.6 291.1,323.7 291.2,318.8 291.4,316.5 291.5,318.8 291.6,319.3 291.8,318.9 291.9,314.2 292.1,317.0 292.2,321.6 292.3,320.0 292.5,314.6 292.6,321.0 292.8,320.4 292.9,319.1 293.0,322.8 293.2,315.8 293.3,326.9 293.5,313.8 293.6,320.6 293.7,323.6 293.9,318.1 294.0,325.2 294.2,317.2 294.3,316.3 294.4,321.2 294.6,320.5 294.7,315.7 294.9,321.5 295.0,319.1 295.1,317.9 295.3,313.6 295.4,321.0 295.6,319.0 295.7,315.1 295.9,328.3 296.0,320.1 296.1,326.0 296.3,325.8 296.4,312.2 296.6,318.4 296.7,313.9 296.8,320.1 297.0,317.3 297.1,320.8 297.3,321.2 297.4,319.5 297.5,318.8 297.7,313.7 297.8,319.9 298.0,317.9 298.1,320.1 298.2,318.7 298.4,323.9 298.5,315.3 298.7,321.1 298.8,319.1 298.9,320.0 299.1,315.7 299.2,317.4 299.4,319.2 299.5,318.6 299.6,318.0 299.8,316.5 299.9,317.4 300.1,314.6 300.2,313.4 300.3,317.0 300.5,324.0 300.6,313.0 300.8,311.5 300.9,320.5 301.0,320.7 301.2,326.6 301.3,316.4 301.5,322.8 301.6,312.7 301.7,328.1 301.9,319.0 302.0,316.8 302.2,320.7 302.3,322.1 302.4,318.3 302.6,321.1 302.7,320.5 302.9,319.4 303.0,321.2 303.1,320.0 303.3,316.4 303.4,320.6 303.6,318.6 303.7,321.9 303.8,315.9 304.0,323.8 304.1,315.8 304.3,330.1 304.4,322.5 304.5,324.9 304.7,315.6 304.8,318.2 305.0,323.9 305.1,321.3 305.2,314.4 305.4,319.4 305.5,317.2 305.7,324.6 305.8,324.6 305.9,317.2 306.1,311.0 306.2,321.2 306.4,317.1 306.5,322.6 306.6,314.7 306.8,320.8 306.9,320.8 307.1,326.0 307.2,320.7 307.3,318.5 307.5,314.3 307.6,323.4 307.8,315.7 307.9,320.4 308.0,320.2 308.2,322.6 308.3,325.3 308.5,323.5 308.6,313.3 308.7,323.4 308.9,320.7 309.0,315.2 309.2,326.7 309.3,317.5 309.4,320.9 309.6,318.4 309.7,315.9 309.9,319.6 310.0,319.7 310.1,316.4 310.3,316.6 310.4,321.5 310.6,319.5 310.7,323.6 310.8,314.1 311.0,323.1 311.1,318.0 311.3,312.3 311.4,315.6 311.5,319.5 311.7,321.0 311.8,320.5 312.0,314.8 312.1,316.8 312.2,317.8 312.4,308.3 312.5,320.4 312.7,318.8 312.8,318.0 312.9,315.4 313.1,314.4 313.2,315.6 313.4,310.9 313.5,310.3 313.6,311.7 313.8,317.5 313.9,303.6 314.1,307.3 314.2,303.4 314.3,298.6 314.5,299.5 314.6,295.0 314.8,289.4 314.9,289.1 315.0,285.7 315.2,290.0 315.3,288.9 315.5,293.9 315.6,293.7 315.7,294.5 315.9,299.5 316.0,306.7 316.2,305.1 316.3,306.4 316.4,305.1 316.6,311.2 316.7,314.1 316.9,318.1 317.0,307.8 317.1,319.2 317.3,320.5 317.4,317.5 317.6,323.8 317.7,313.7 317.8,317.2 318.0,316.3 318.1,321.7 318.3,320.1 318.4,315.3 318.5,315.2 318.7,308.4 318.8,314.7 319.0,325.5 319.1,318.4 319.2,320.1 319.4,314.9 319.5,319.2 319.7,317.2 319.8,320.1 319.9,316.8 320.1,313.8 320.2,321.2 320.4,326.4 320.5,322.8 320.6,313.5 320.8,318.3 320.9,320.2 321.1,322.6 321.2,315.4 321.3,318.2 321.5,319.6 321.6,321.2 321.8,319.8 321.9,320.4 322.0,317.2 322.2,314.7 322.3,326.3 322.5,324.5 322.6,319.6 322.7,319.0 322.9,324.9 323.0,321.6 323.2,320.8 323.3,320.9 323.4,321.0 323.6,319.7 323.7,316.2 323.9,316.7 324.0,317.3 324.1,318.4 324.3,322.0 324.4,321.1 324.6,316.9 324.7,319.0 324.8,316.5 325.0,318.5 325.1,319.2 325.3,317.8 325.4,324.9 325.5,320.0 325.7,321.5 325.8,316.4 326.0,321.8 326.1,318.6 326.2,321.0 326.4,317.8 326.5,316.9 326.7,320.2 326.8,319.1 326.9,318.9 327.1,316.7 327.2,320.7 327.4,319.4 327.5,321.0 327.6,323.0 327.8,318.9 327.9,318.0 328.1,322.4 328.2,313.9 328.3,322.2 328.5,316.9 328.6,318.2 328.8,325.7 328.9,319.7 329.0,325.2 329.2,320.0 329.3,317.1 329.5,312.9 329.6,316.8 329.7,325.1 329.9,320.8 330.0,314.2 330.2,318.9 330.3,313.2 330.4,322.2 330.6,321.6 330.7,324.4 330.9,321.0 331.0,315.1 331.1,322.9 331.3,316.6 331.4,318.0 331.6,316.8 331.7,320.5 331.8,319.5 332.0,311.9 332.1,324.1 332.3,316.9 332.4,314.2 332.5,318.0 332.7,313.7 332.8,330.3 333.0,320.7 333.1,323.8 333.2,321.1 333.4,320.0 333.5,317.9 333.7,322.7 333.8,316.5 333.9,325.3 334.1,316.2 334.2,320.6 334.4,326.0 334.5,326.1 334.6,326.1 334.8,323.3 334.9,319.3 335.1,315.0 335.2,316.9 335.3,324.5 335.5,328.0 335.6,320.8 335.8,324.9 335.9,320.4 336.1,322.2 336.2,310.6 336.3,326.0 336.5,318.7 336.6,313.1 336.8,321.3 336.9,322.6 337.0,313.8 337.2,327.4 337.3,326.0 337.5,324.3 337.6,318.4 337.7,317.1 337.9,320.3 338.0,312.0 338.2,320.6 338.3,319.8 338.4,320.9 338.6,315.4 338.7,319.8 338.9,321.2 339.0,313.7 339.1,315.1 339.3,316.1 339.4,324.3 339.6,323.6 339.7,320.6 339.8,320.6 340.0,321.2 340.1,320.5 340.3,317.3 340.4,323.3 340.5,318.8 340.7,321.1 340.8,321.4 341.0,320.6 341.1,316.9 341.2,318.6 341.4,322.4 341.5,318.4 341.7,319.1 341.8,318.1 341.9,320.5 342.1,315.9 342.2,318.1 342.4,323.6 342.5,324.1 342.6,324.5 342.8,318.0 342.9,321.9 343.1,320.7 343.2,319.7 343.3,315.0 343.5,311.5 343.6,319.8 343.8,312.2 343.9,317.4 344.0,315.0 344.2,320.4 344.3,323.9 344.5,317.6 344.6,314.7 344.7,325.0 344.9,319.6 345.0,318.6 345.2,317.2 345.3,323.3 345.4,321.4 345.6,316.0 345.7,312.9 345.9,319.0 346.0,315.8 346.1,318.8 346.3,317.8 346.4,320.8 346.6,320.2 346.7,321.4 346.8,319.0 347.0,315.4 347.1,318.7 347.3,317.0 347.4,321.7 347.5,316.8 347.7,330.7 347.8,324.5 348.0,320.6 348.1,325.9 348.2,317.3 348.4,318.6 348.5,322.7 348.7,319.0 348.8,324.8 348.9,322.7 349.1,320.8 349.2,325.2 349.4,315.6 349.5,321.8 349.6,315.7 349.8,319.9 349.9,318.3 350.1,322.7 350.2,320.5 350.3,320.9 350.5,318.5 350.6,314.4 350.8,321.4 350.9,320.0 351.0,318.1 351.2,316.3 351.3,319.8 351.5,320.8 351.6,321.5 351.7,319.3 351.9,318.5 352.0,321.8 352.2,320.5 352.3,316.6 352.4,319.5 352.6,321.4 352.7,316.8 352.9,316.8 353.0,317.2 353.1,317.0 353.3,320.8 353.4,318.6 353.6,318.2 353.7,318.9 353.8,325.7 354.0,319.4 354.1,318.1 354.3,317.6 354.4,320.4 354.5,319.2 354.7,325.8 354.8,324.7 355.0,330.0 355.1,320.2 355.2,313.5 355.4,313.1 355.5,323.4 355.7,317.0 355.8,314.8 355.9,320.5 356.1,326.4 356.2,314.3 356.4,320.6 356.5,320.8 356.6,313.2 356.8,317.7 356.9,316.3 357.1,313.6 357.2,319.9 357.3,322.8 357.5,316.5 357.6,319.3 357.8,316.6 357.9,317.8 358.0,322.0 358.2,319.2 358.3,320.5 358.5,320.1 358.6,319.4 358.7,318.0 358.9,318.5 359.0,323.8 359.2,317.0 359.3,324.4 359.4,311.3 359.6,322.0 359.7,319.4 359.9,314.4 360.0,319.9 360.1,323.8 360.3,324.3 360.4,318.2 360.6,317.7 360.7,316.2 360.8,318.2 361.0,320.9 361.1,317.5 361.3,314.0 361.4,322.1 361.5,306.4 361.7,320.7 361.8,314.7 362.0,312.4 362.1,315.9 362.2,318.1 362.4,316.6 362.5,314.4 362.7,328.7 362.8,317.6 362.9,320.7 363.1,321.7 363.2,318.8 363.4,318.6 363.5,317.5 363.6,321.3 363.8,315.2 363.9,326.8 364.1,322.7 364.2,323.7 364.3,318.9 364.5,321.1 364.6,317.4 364.8,322.1 364.9,314.7 365.0,316.7 365.2,321.2 365.3,325.4 365.5,323.6 365.6,324.9 365.7,314.9 365.9,316.6 366.0,323.9 366.2,312.6 366.3,320.4 366.4,327.5 366.6,315.5 366.7,314.7 366.9,319.3 367.0,322.6 367.1,314.9 367.3,321.2 367.4,319.4 367.6,317.7 367.7,318.3 367.8,321.0 368.0,323.1 368.1,316.7 368.3,327.3 368.4,318.2 368.5,318.4 368.7,317.5 368.8,320.7 369.0,318.6 369.1,316.5 369.2,323.1 369.4,319.2 369.5,318.0 369.7,323.9 369.8,322.8 369.9,313.7 370.1,315.6 370.2,322.0 370.4,316.8 370.5,317.9 370.6,314.3 370.8,315.2 370.9,328.1 371.1,320.4 371.2,314.4 371.3,313.5 371.5,321.6 371.6,323.8 371.8,318.4 371.9,321.7 372.0,319.4 372.2,323.5 372.3,316.6 372.5,317.3 372.6,317.7 372.7,323.3 372.9,325.4 373.0,323.9 373.2,317.6 373.3,325.8 373.4,317.0 373.6,313.0 373.7,321.6 373.9,320.0 374.0,315.8 374.1,316.1 374.3,321.6 374.4,320.0 374.6,318.9 374.7,320.3 374.8,317.3 375.0,318.2 375.1,314.6 375.3,325.5 375.4,315.1 375.6,316.4 375.7,319.8 375.8,317.8 376.0,315.8 376.1,318.2 376.3,320.2 376.4,318.3 376.5,321.8 376.7,324.0 376.8,322.5 377.0,322.1 377.1,318.6 377.2,316.5 377.4,318.4 377.5,314.1 377.7,319.6 377.8,321.6 377.9,321.9 378.1,322.5 378.2,320.4 378.4,314.4 378.5,324.6 378.6,317.3 378.8,319.3 378.9,316.3 379.1,321.0 379.2,316.7 379.3,321.0 379.5,317.0 379.6,326.3 379.8,317.5 379.9,316.6 380.0,324.9 380.2,316.2 380.3,323.3 380.5,315.7 380.6,319.2 380.7,316.7 380.9,317.8 381.0,323.5 381.2,313.6 381.3,314.8 381.4,322.8 381.6,317.1 381.7,317.5 381.9,321.6 382.0,322.8 382.1,314.5 382.3,320.5 382.4,315.9 382.6,312.3 382.7,317.4 382.8,322.3 383.0,315.6 383.1,324.0 383.3,322.3 383.4,308.6 383.5,321.9 383.7,317.8 383.8,322.9 384.0,319.5 384.1,318.4 384.2,328.6 384.4,321.4 384.5,316.7 384.7,316.0 384.8,317.9 384.9,322.5 385.1,317.7 385.2,320.9 385.4,321.9 385.5,319.1 385.6,310.9 385.8,322.3 385.9,315.4 386.1,318.2 386.2,324.4 386.3,322.4 386.5,319.7 386.6,320.8 386.8,318.2 386.9,322.7 387.0,322.8 387.2,315.5 387.3,319.2 387.5,322.2 387.6,319.1 387.7,312.5 387.9,321.2 388.0,324.5 388.2,315.8 388.3,312.1 388.4,314.6 388.6,323.9 388.7,326.5 388.9,314.6 389.0,319.8 389.1,317.4 389.3,319.8 389.4,313.2 389.6,318.9 389.7,320.3 389.8,318.7 390.0,323.5 390.1,318.6 390.3,319.5 390.4,326.8 390.5,323.3 390.7,323.8 390.8,324.9 391.0,318.0 391.1,315.2 391.2,318.1 391.4,324.6 391.5,325.7 391.7,316.5 391.8,320.4 391.9,319.7 392.1,324.0 392.2,326.6 392.4,311.4 392.5,321.5 392.6,320.0 392.8,323.5 392.9,313.9 393.1,320.6 393.2,319.9 393.3,319.2 393.5,319.4 393.6,314.3 393.8,325.9 393.9,317.1 394.0,321.6 394.2,320.9 394.3,321.6 394.5,317.9 394.6,324.0 394.7,321.4 394.9,317.4 395.0,321.5 395.2,321.1 395.3,318.1 395.4,319.1 395.6,320.6 395.7,319.2 395.9,322.6 396.0,316.4 396.1,323.4 396.3,325.2 396.4,317.9 396.6,324.2 396.7,322.9 396.8,320.2 397.0,316.9 397.1,321.2 397.3,321.1 397.4,321.0 397.5,318.1 397.7,321.3 397.8,318.6 398.0,314.6 398.1,320.3 398.2,320.8 398.4,322.8 398.5,322.2 398.7,323.9 398.8,323.4 398.9,321.6 399.1,318.3 399.2,317.8 399.4,321.0 399.5,318.3 399.6,324.1 399.8,312.1 399.9,310.6 400.1,319.9 400.2,317.7 400.3,319.1 400.5,316.7 400.6,321.7 400.8,324.9 400.9,316.5 401.0,323.3 401.2,318.2 401.3,322.7 401.5,322.2 401.6,315.9 401.7,313.6 401.9,319.9 402.0,320.9 402.2,318.3 402.3,321.3 402.4,325.5 402.6,319.4 402.7,327.3 402.9,317.7 403.0,321.1 403.1,318.6 403.3,324.5 403.4,321.9 403.6,317.1 403.7,314.3 403.8,316.1 404.0,317.7 404.1,323.0 404.3,317.0 404.4,318.5 404.5,320.1 404.7,314.2 404.8,321.5 405.0,312.4 405.1,320.9 405.2,320.9 405.4,318.7 405.5,322.9 405.7,319.7 405.8,317.5 405.9,323.5 406.1,320.0 406.2,321.5 406.4,317.5 406.5,311.2 406.6,316.1 406.8,314.3 406.9,311.8 407.1,315.4 407.2,309.4 407.3,310.8 407.5,310.0 407.6,312.5 407.8,307.4 407.9,300.4 408.0,299.0 408.2,303.9 408.3,302.5 408.5,304.5 408.6,307.5 408.7,310.9 408.9,299.5 409.0,310.4 409.2,307.4 409.3,303.9 409.4,312.0 409.6,312.4 409.7,312.0 409.9,315.2 410.0,313.8 410.1,316.7 410.3,312.1 410.4,314.9 410.6,321.3 410.7,322.2 410.8,320.0 411.0,320.1 411.1,320.8 411.3,315.0 411.4,321.0 411.5,320.1 411.7,318.1 411.8,325.8 412.0,317.2 412.1,316.7 412.2,313.8 412.4,322.3 412.5,320.5 412.7,318.1 412.8,320.3 412.9,324.2 413.1,315.7 413.2,320.0 413.4,317.8 413.5,322.9 413.6,315.6 413.8,320.3 413.9,321.6 414.1,316.3 414.2,315.1 414.3,322.4 414.5,315.5 414.6,313.3 414.8,318.2 414.9,324.2 415.0,317.1 415.2,315.3 415.3,322.8 415.5,313.2 415.6,319.9 415.8,319.6 415.9,315.3 416.0,318.4 416.2,314.7 416.3,319.2 416.5,317.8 416.6,319.1 416.7,318.3 416.9,317.1 417.0,317.5 417.2,320.3 417.3,315.9 417.4,319.5 417.6,314.9 417.7,317.0 417.9,319.6 418.0,321.9 418.1,319.1 418.3,314.3 418.4,318.6 418.6,315.8 418.7,319.6 418.8,320.4 419.0,321.7 419.1,326.2 419.3,318.1 419.4,319.1 419.5,319.5 419.7,316.5 419.8,322.8 420.0,313.2 420.1,324.5 420.2,318.4 420.4,323.6 420.5,320.3 420.7,315.2 420.8,324.7 420.9,318.7 421.1,318.9 421.2,318.7 421.4,318.4 421.5,316.5 421.6,317.6 421.8,318.0 421.9,316.1 422.1,317.0 422.2,319.8 422.3,323.7 422.5,316.5 422.6,320.6 422.8,313.5 422.9,321.4 423.0,323.7 423.2,315.3 423.3,322.0 423.5,324.7 423.6,315.1 423.7,324.6 423.9,314.6 424.0,322.8 424.2,317.9 424.3,318.6 424.4,325.9 424.6,319.4 424.7,320.9 424.9,318.9 425.0,317.5 425.1,313.7 425.3,320.2 425.4,319.7 425.6,311.7 425.7,316.8 425.8,316.7 426.0,324.9 426.1,324.4 426.3,321.4 426.4,320.1 426.5,317.6 426.7,309.6 426.8,323.9 427.0,320.9 427.1,317.1 427.2,318.4 427.4,315.4 427.5,320.4 427.7,322.6 427.8,311.9 427.9,317.8 428.1,323.7 428.2,320.7 428.4,319.6 428.5,324.8 428.6,316.7 428.8,318.9 428.9,320.8 429.1,321.8 429.2,313.6 429.3,319.7 429.5,322.3 429.6,326.8 429.8,323.3 429.9,317.0 430.0,314.1 430.2,323.7 430.3,326.8 430.5,319.4 430.6,319.7 430.7,316.4 430.9,322.1 431.0,319.1 431.2,326.2 431.3,324.0 431.4,321.5 431.6,321.1 431.7,317.6 431.9,315.1 432.0,324.6 432.1,313.5 432.3,322.2 432.4,321.0 432.6,315.5 432.7,328.1 432.8,324.7 433.0,322.5 433.1,319.2 433.3,315.6 433.4,315.6 433.5,322.8 433.7,316.8 433.8,321.0 434.0,314.1 434.1,320.5 434.2,315.7 434.4,323.2 434.5,316.7 434.7,324.4 434.8,319.1 434.9,325.3 435.1,320.0 435.2,322.3 435.4,323.0 435.5,318.6" fill="none" stroke="#000" stroke-width="1.25" stroke-linejoin="round"/>
<rect x="155.5" y="115.5" width="280.0" height="250.0" fill="none" stroke="#2a2a2a" stroke-width="0.95"/>
<line x1="150.0" y1="339.3" x2="155.5" y2="339.3" stroke="#000" stroke-width="1"/>
<text x="146.5" y="343.7" font-size="13" font-weight="bold" text-anchor="end" fill="#111">0</text>
<line x1="150.0" y1="289.5" x2="155.5" y2="289.5" stroke="#000" stroke-width="1"/>
<text x="146.5" y="293.9" font-size="13" font-weight="bold" text-anchor="end" fill="#111">500</text>
<line x1="150.0" y1="239.7" x2="155.5" y2="239.7" stroke="#000" stroke-width="1"/>
<text x="146.5" y="244.1" font-size="13" font-weight="bold" text-anchor="end" fill="#111">1000</text>
<line x1="150.0" y1="189.9" x2="155.5" y2="189.9" stroke="#000" stroke-width="1"/>
<text x="146.5" y="194.3" font-size="13" font-weight="bold" text-anchor="end" fill="#111">1500</text>
<line x1="150.0" y1="140.1" x2="155.5" y2="140.1" stroke="#000" stroke-width="1"/>
<text x="146.5" y="144.5" font-size="13" font-weight="bold" text-anchor="end" fill="#111">2000</text>
<line x1="152.5" y1="364.2" x2="155.5" y2="364.2" stroke="#000" stroke-width="1"/>
<line x1="152.5" y1="314.4" x2="155.5" y2="314.4" stroke="#000" stroke-width="1"/>
<line x1="152.5" y1="264.6" x2="155.5" y2="264.6" stroke="#000" stroke-width="1"/>
<line x1="152.5" y1="214.8" x2="155.5" y2="214.8" stroke="#000" stroke-width="1"/>
<line x1="152.5" y1="165.0" x2="155.5" y2="165.0" stroke="#000" stroke-width="1"/>
<line x1="152.5" y1="115.2" x2="155.5" y2="115.2" stroke="#000" stroke-width="1"/>
<text transform="translate(106.0,235.3) rotate(-90)" font-size="15" text-anchor="middle" fill="#222" letter-spacing="0.2">Intensity (a.u)</text>
<rect x="340.20000000000005" y="121.8" width="75.3" height="21" fill="#fff" stroke="#222" stroke-width="0.9"/>
<line x1="344.20000000000005" y1="132.3" x2="375.20000000000005" y2="132.3" stroke="#000" stroke-width="1" opacity="0.75"/>
<text x="380.20000000000005" y="137.5" font-size="15" fill="#111">Main</text>
</svg>
<svg class="a" style="left:0;top:0" width="893" height="720" viewBox="0 0 893 720">
<polyline points="501.5,342.8 501.6,342.0 501.8,344.5 501.9,341.5 502.1,343.4 502.2,345.4 502.3,343.7 502.5,341.5 502.6,342.0 502.8,344.5 502.9,341.4 503.0,342.6 503.2,341.6 503.3,341.8 503.5,344.3 503.6,341.6 503.7,343.3 503.9,339.5 504.0,340.9 504.2,342.0 504.3,343.8 504.4,341.9 504.6,341.7 504.7,344.0 504.9,338.1 505.0,341.2 505.1,338.9 505.3,343.7 505.4,338.9 505.6,344.1 505.7,342.8 505.8,340.7 506.0,341.5 506.1,345.7 506.3,343.5 506.4,340.1 506.6,337.9 506.7,339.9 506.8,341.9 507.0,340.0 507.1,343.3 507.3,340.4 507.4,343.6 507.5,341.2 507.7,341.4 507.8,339.8 508.0,341.7 508.1,339.0 508.2,341.4 508.4,339.6 508.5,339.6 508.7,344.1 508.8,340.9 508.9,340.8 509.1,342.2 509.2,340.5 509.4,343.3 509.5,339.8 509.6,339.8 509.8,340.2 509.9,336.4 510.1,340.0 510.2,340.5 510.3,341.8 510.5,340.0 510.6,342.1 510.8,338.2 510.9,341.5 511.0,340.1 511.2,336.9 511.3,338.3 511.5,339.9 511.6,337.9 511.7,340.3 511.9,338.8 512.0,340.1 512.2,341.7 512.3,339.3 512.4,338.4 512.6,340.6 512.7,341.9 512.9,340.9 513.0,344.0 513.1,340.9 513.3,341.7 513.4,336.3 513.6,340.8 513.7,342.4 513.8,338.2 514.0,340.0 514.1,339.6 514.3,339.3 514.4,339.2 514.5,340.2 514.7,337.9 514.8,338.6 515.0,340.3 515.1,339.7 515.3,341.0 515.4,338.9 515.5,338.1 515.7,338.2 515.8,338.2 516.0,339.5 516.1,336.5 516.2,339.5 516.4,339.1 516.5,339.7 516.7,338.9 516.8,339.5 516.9,335.5 517.1,338.2 517.2,341.9 517.4,339.7 517.5,341.3 517.6,337.3 517.8,336.4 517.9,339.6 518.1,337.7 518.2,339.1 518.3,338.0 518.5,335.7 518.6,339.2 518.8,340.7 518.9,337.3 519.0,337.6 519.2,337.3 519.3,336.7 519.5,339.6 519.6,341.8 519.7,336.6 519.9,339.1 520.0,340.4 520.2,340.3 520.3,336.3 520.4,337.9 520.6,337.7 520.7,336.7 520.9,339.3 521.0,340.0 521.1,339.5 521.3,340.0 521.4,338.5 521.6,339.5 521.7,337.9 521.8,338.7 522.0,338.0 522.1,336.7 522.3,335.4 522.4,335.1 522.5,337.6 522.7,337.4 522.8,338.6 523.0,335.9 523.1,335.0 523.2,338.6 523.4,336.3 523.5,338.1 523.7,337.8 523.8,337.2 524.0,338.1 524.1,335.9 524.2,340.0 524.4,338.6 524.5,337.5 524.7,339.1 524.8,336.6 524.9,339.9 525.1,337.1 525.2,339.7 525.4,337.4 525.5,336.2 525.6,333.3 525.8,335.2 525.9,334.2 526.1,336.9 526.2,333.3 526.3,337.4 526.5,337.3 526.6,339.1 526.8,336.5 526.9,335.0 527.0,337.9 527.2,337.4 527.3,337.5 527.5,337.3 527.6,337.7 527.7,339.0 527.9,334.2 528.0,340.0 528.2,338.1 528.3,335.9 528.4,334.7 528.6,336.8 528.7,336.9 528.9,336.3 529.0,336.8 529.1,334.8 529.3,337.1 529.4,338.0 529.6,337.1 529.7,336.0 529.8,334.1 530.0,333.4 530.1,336.8 530.3,338.6 530.4,338.5 530.5,332.3 530.7,336.7 530.8,335.2 531.0,332.6 531.1,337.1 531.2,336.2 531.4,336.9 531.5,337.7 531.7,334.4 531.8,333.9 531.9,339.0 532.1,334.0 532.2,336.1 532.4,335.3 532.5,335.3 532.7,337.8 532.8,336.1 532.9,337.2 533.1,332.2 533.2,331.7 533.4,335.3 533.5,337.4 533.6,333.4 533.8,335.7 533.9,332.3 534.1,331.9 534.2,332.4 534.3,335.9 534.5,336.9 534.6,336.3 534.8,335.3 534.9,336.7 535.0,333.0 535.2,333.9 535.3,335.1 535.5,335.7 535.6,333.8 535.7,332.5 535.9,338.2 536.0,334.5 536.2,335.4 536.3,336.1 536.4,335.4 536.6,334.5 536.7,331.5 536.9,334.6 537.0,335.4 537.1,336.8 537.3,333.3 537.4,335.9 537.6,334.7 537.7,333.3 537.8,334.4 538.0,335.1 538.1,334.7 538.3,332.8 538.4,334.4 538.5,333.9 538.7,333.6 538.8,334.8 539.0,333.7 539.1,334.7 539.2,332.2 539.4,333.3 539.5,337.1 539.7,334.4 539.8,332.1 539.9,334.4 540.1,334.7 540.2,332.2 540.4,335.8 540.5,333.8 540.6,332.9 540.8,332.4 540.9,335.6 541.1,335.9 541.2,331.2 541.4,335.1 541.5,333.8 541.6,329.4 541.8,334.4 541.9,337.4 542.1,328.7 542.2,331.8 542.3,332.9 542.5,328.7 542.6,333.6 542.8,330.9 542.9,333.3 543.0,333.8 543.2,332.2 543.3,331.7 543.5,331.0 543.6,331.1 543.7,334.0 543.9,333.3 544.0,329.7 544.2,332.0 544.3,332.8 544.4,330.6 544.6,330.5 544.7,330.6 544.9,333.8 545.0,333.5 545.1,331.4 545.3,330.6 545.4,334.7 545.6,333.4 545.7,332.9 545.8,330.8 546.0,334.3 546.1,327.7 546.3,332.1 546.4,331.1 546.5,328.2 546.7,330.8 546.8,330.3 547.0,331.5 547.1,329.9 547.2,331.9 547.4,329.4 547.5,328.3 547.7,329.0 547.8,324.4 547.9,324.2 548.1,327.2 548.2,321.8 548.4,324.5 548.5,322.1 548.6,325.1 548.8,325.3 548.9,325.1 549.1,323.6 549.2,330.7 549.3,329.6 549.5,330.5 549.6,328.6 549.8,331.5 549.9,330.8 550.1,329.5 550.2,330.7 550.3,332.9 550.5,333.0 550.6,332.8 550.8,332.1 550.9,334.0 551.0,332.6 551.2,331.5 551.3,333.4 551.5,333.4 551.6,332.1 551.7,331.3 551.9,335.0 552.0,334.4 552.2,330.5 552.3,332.8 552.4,334.6 552.6,332.5 552.7,330.0 552.9,333.8 553.0,334.4 553.1,333.2 553.3,330.0 553.4,333.9 553.6,331.9 553.7,331.1 553.8,331.7 554.0,333.4 554.1,331.7 554.3,332.5 554.4,331.4 554.5,332.2 554.7,332.6 554.8,335.8 555.0,331.7 555.1,333.0 555.2,336.4 555.4,332.9 555.5,332.3 555.7,333.1 555.8,337.1 555.9,334.1 556.1,334.5 556.2,333.4 556.4,336.8 556.5,332.4 556.6,331.9 556.8,331.9 556.9,333.0 557.1,333.0 557.2,331.1 557.3,332.1 557.5,333.6 557.6,332.4 557.8,331.7 557.9,330.8 558.0,332.1 558.2,334.2 558.3,333.7 558.5,332.5 558.6,332.3 558.8,331.1 558.9,336.1 559.0,334.1 559.2,334.8 559.3,331.0 559.5,331.5 559.6,332.3 559.7,331.5 559.9,333.8 560.0,332.0 560.2,332.8 560.3,332.7 560.4,333.1 560.6,331.2 560.7,331.0 560.9,335.3 561.0,333.8 561.1,332.7 561.3,331.9 561.4,335.6 561.6,334.5 561.7,333.4 561.8,329.9 562.0,334.4 562.1,333.5 562.3,332.9 562.4,333.1 562.5,332.6 562.7,332.9 562.8,333.2 563.0,332.4 563.1,332.4 563.2,332.2 563.4,332.2 563.5,334.9 563.7,332.6 563.8,332.6 563.9,331.5 564.1,331.7 564.2,330.2 564.4,334.2 564.5,333.1 564.6,332.5 564.8,334.0 564.9,333.3 565.1,333.5 565.2,333.7 565.3,329.0 565.5,333.0 565.6,330.3 565.8,334.3 565.9,332.4 566.0,334.0 566.2,332.3 566.3,330.0 566.5,329.5 566.6,331.5 566.7,332.1 566.9,332.8 567.0,332.2 567.2,330.5 567.3,335.6 567.5,333.4 567.6,334.5 567.7,331.1 567.9,335.0 568.0,331.4 568.2,334.8 568.3,334.7 568.4,330.3 568.6,331.1 568.7,334.4 568.9,335.8 569.0,334.5 569.1,331.8 569.3,332.9 569.4,334.5 569.6,331.9 569.7,330.5 569.8,334.8 570.0,333.0 570.1,334.2 570.3,331.0 570.4,332.7 570.5,334.0 570.7,335.7 570.8,331.7 571.0,333.3 571.1,332.6 571.2,333.2 571.4,332.2 571.5,335.8 571.7,334.3 571.8,332.3 571.9,329.8 572.1,332.3 572.2,333.0 572.4,334.0 572.5,334.0 572.6,333.2 572.8,334.2 572.9,332.6 573.1,332.8 573.2,329.4 573.3,333.0 573.5,331.0 573.6,333.6 573.8,331.2 573.9,328.7 574.0,333.8 574.2,334.8 574.3,331.0 574.5,332.7 574.6,333.3 574.7,332.1 574.9,332.3 575.0,330.7 575.2,332.1 575.3,333.8 575.4,334.7 575.6,335.8 575.7,334.7 575.9,330.9 576.0,335.3 576.2,332.7 576.3,330.7 576.4,331.8 576.6,330.2 576.7,331.6 576.9,330.1 577.0,333.8 577.1,334.2 577.3,329.5 577.4,332.2 577.6,332.7 577.7,333.8 577.8,330.1 578.0,332.0 578.1,332.0 578.3,333.9 578.4,332.7 578.5,333.6 578.7,333.0 578.8,332.3 579.0,333.7 579.1,334.3 579.2,331.5 579.4,334.6 579.5,330.4 579.7,330.2 579.8,335.2 579.9,330.1 580.1,334.2 580.2,330.6 580.4,333.8 580.5,331.5 580.6,334.6 580.8,331.7 580.9,332.7 581.1,330.1 581.2,331.5 581.3,334.4 581.5,332.3 581.6,334.0 581.8,332.5 581.9,330.2 582.0,330.1 582.2,332.5 582.3,334.2 582.5,332.7 582.6,329.2 582.7,333.0 582.9,335.3 583.0,335.2 583.2,334.9 583.3,331.0 583.4,333.4 583.6,334.1 583.7,332.2 583.9,331.2 584.0,333.1 584.1,334.2 584.3,332.5 584.4,331.4 584.6,335.7 584.7,335.2 584.9,329.4 585.0,332.1 585.1,332.2 585.3,335.2 585.4,334.5 585.6,333.3 585.7,330.7 585.8,332.7 586.0,335.6 586.1,330.2 586.3,330.1 586.4,331.3 586.5,334.7 586.7,333.9 586.8,333.3 587.0,332.6 587.1,329.8 587.2,335.2 587.4,334.1 587.5,332.9 587.7,333.8 587.8,333.7 587.9,335.4 588.1,332.8 588.2,333.4 588.4,332.6 588.5,331.3 588.6,333.3 588.8,333.1 588.9,332.4 589.1,333.6 589.2,332.5 589.3,335.9 589.5,334.3 589.6,332.0 589.8,332.5 589.9,331.5 590.0,335.2 590.2,333.8 590.3,333.0 590.5,333.0 590.6,333.3 590.7,330.4 590.9,333.7 591.0,333.4 591.2,332.0 591.3,332.1 591.4,332.6 591.6,330.0 591.7,331.9 591.9,333.3 592.0,334.5 592.1,330.8 592.3,333.9 592.4,332.2 592.6,333.8 592.7,329.3 592.8,331.6 593.0,335.9 593.1,332.4 593.3,335.2 593.4,333.8 593.6,331.5 593.7,335.1 593.8,332.3 594.0,333.0 594.1,331.6 594.3,334.5 594.4,331.8 594.5,333.5 594.7,331.1 594.8,332.8 595.0,331.8 595.1,330.6 595.2,331.0 595.4,332.9 595.5,331.7 595.7,332.9 595.8,332.2 595.9,330.1 596.1,334.4 596.2,334.9 596.4,332.1 596.5,333.8 596.6,330.8 596.8,331.4 596.9,331.8 597.1,332.9 597.2,333.7 597.3,334.4 597.5,333.8 597.6,332.9 597.8,334.5 597.9,331.1 598.0,331.8 598.2,335.1 598.3,337.5 598.5,331.0 598.6,334.9 598.7,337.8 598.9,335.7 599.0,332.5 599.2,330.5 599.3,331.2 599.4,330.3 599.6,329.7 599.7,329.5 599.9,334.4 600.0,333.0 600.1,333.8 600.3,332.6 600.4,333.3 600.6,332.2 600.7,329.5 600.8,333.8 601.0,331.3 601.1,334.2 601.3,334.7 601.4,330.7 601.5,332.6 601.7,332.1 601.8,329.7 602.0,334.3 602.1,331.7 602.2,329.1 602.4,333.2 602.5,330.7 602.7,329.3 602.8,329.0 603.0,329.0 603.1,328.1 603.2,328.6 603.4,327.7 603.5,328.0 603.7,329.9 603.8,327.9 603.9,328.1 604.1,325.9 604.2,327.1 604.4,327.2 604.5,328.0 604.6,327.5 604.8,329.9 604.9,328.9 605.1,330.9 605.2,330.7 605.3,332.4 605.5,327.0 605.6,330.1 605.8,333.0 605.9,332.2 606.0,331.2 606.2,332.7 606.3,330.8 606.5,331.5 606.6,330.3 606.7,337.2 606.9,331.1 607.0,332.1 607.2,330.8 607.3,333.5 607.4,333.8 607.6,334.6 607.7,331.8 607.9,332.4 608.0,335.6 608.1,333.6 608.3,332.7 608.4,334.7 608.6,333.3 608.7,332.9 608.8,333.7 609.0,335.5 609.1,330.8 609.3,332.3 609.4,332.2 609.5,333.7 609.7,332.5 609.8,333.9 610.0,333.0 610.1,332.5 610.2,331.8 610.4,333.8 610.5,334.1 610.7,330.6 610.8,335.2 610.9,332.5 611.1,333.0 611.2,331.6 611.4,333.5 611.5,334.6 611.7,332.6 611.8,335.1 611.9,334.6 612.1,332.8 612.2,332.6 612.4,335.3 612.5,330.6 612.6,332.9 612.8,330.7 612.9,330.9 613.1,332.7 613.2,333.5 613.3,335.2 613.5,331.1 613.6,330.2 613.8,332.5 613.9,332.7 614.0,334.4 614.2,334.5 614.3,333.0 614.5,330.7 614.6,333.3 614.7,331.3 614.9,332.1 615.0,333.0 615.2,334.2 615.3,333.4 615.4,334.8 615.6,331.3 615.7,331.9 615.9,334.5 616.0,333.9 616.1,335.0 616.3,332.5 616.4,331.8 616.6,334.3 616.7,333.5 616.8,332.1 617.0,335.6 617.1,332.4 617.3,330.1 617.4,330.0 617.5,333.0 617.7,332.8 617.8,331.5 618.0,331.6 618.1,330.2 618.2,332.3 618.4,332.1 618.5,332.1 618.7,329.8 618.8,334.3 618.9,330.5 619.1,332.2 619.2,332.1 619.4,334.0 619.5,332.7 619.6,334.1 619.8,337.0 619.9,332.2 620.1,334.9 620.2,332.5 620.4,334.8 620.5,333.2 620.6,333.3 620.8,335.5 620.9,332.5 621.1,333.6 621.2,336.6 621.3,329.5 621.5,331.7 621.6,331.9 621.8,332.5 621.9,331.1 622.0,333.4 622.2,331.3 622.3,330.9 622.5,333.4 622.6,332.4 622.7,332.3 622.9,335.0 623.0,331.9 623.2,332.6 623.3,330.4 623.4,332.2 623.6,334.0 623.7,332.3 623.9,333.4 624.0,336.5 624.1,332.9 624.3,334.7 624.4,330.4 624.6,332.0 624.7,331.0 624.8,331.9 625.0,332.9 625.1,331.3 625.3,335.1 625.4,331.2 625.5,332.7 625.7,335.9 625.8,332.8 626.0,331.5 626.1,333.3 626.2,330.1 626.4,330.3 626.5,333.5 626.7,333.7 626.8,332.8 626.9,333.2 627.1,331.2 627.2,330.5 627.4,331.2 627.5,331.2 627.6,332.4 627.8,332.5 627.9,333.4 628.1,328.3 628.2,330.7 628.3,331.2 628.5,333.3 628.6,334.7 628.8,333.4 628.9,332.8 629.1,332.6 629.2,330.9 629.3,332.6 629.5,330.8 629.6,331.0 629.8,330.6 629.9,331.9 630.0,330.3 630.2,331.3 630.3,331.1 630.5,331.6 630.6,331.5 630.7,330.8 630.9,329.8 631.0,332.0 631.2,331.2 631.3,330.4 631.4,328.3 631.6,329.9 631.7,328.5 631.9,327.6 632.0,328.7 632.1,325.5 632.3,329.1 632.4,328.8 632.6,327.3 632.7,325.2 632.8,322.4 633.0,317.4 633.1,305.8 633.3,284.0 633.4,247.0 633.5,215.8 633.7,218.3 633.8,218.8 634.0,200.2 634.1,167.7 634.2,136.3 634.4,132.1 634.5,156.7 634.7,197.9 634.8,239.9 634.9,268.5 635.1,295.7 635.2,310.7 635.4,316.7 635.5,321.0 635.6,321.9 635.8,325.6 635.9,325.9 636.1,326.4 636.2,326.4 636.3,331.0 636.5,328.3 636.6,331.2 636.8,327.6 636.9,331.1 637.0,331.2 637.2,329.3 637.3,330.4 637.5,330.6 637.6,329.3 637.8,331.4 637.9,331.6 638.0,328.8 638.2,331.3 638.3,329.8 638.5,331.8 638.6,329.1 638.7,328.6 638.9,325.9 639.0,320.7 639.2,325.2 639.3,320.6 639.4,316.5 639.6,313.2 639.7,314.8 639.9,312.9 640.0,316.3 640.1,317.6 640.3,322.5 640.4,318.9 640.6,325.7 640.7,326.7 640.8,333.2 641.0,331.5 641.1,331.0 641.3,328.2 641.4,332.8 641.5,330.9 641.7,333.3 641.8,332.1 642.0,335.2 642.1,335.3 642.2,333.4 642.4,330.7 642.5,330.7 642.7,332.6 642.8,334.5 642.9,330.4 643.1,332.9 643.2,333.9 643.4,333.1 643.5,332.9 643.6,329.5 643.8,332.5 643.9,333.4 644.1,333.3 644.2,335.2 644.3,330.4 644.5,334.2 644.6,332.3 644.8,334.3 644.9,333.9 645.0,336.3 645.2,332.5 645.3,328.8 645.5,329.5 645.6,331.9 645.7,330.2 645.9,334.0 646.0,334.6 646.2,330.6 646.3,333.8 646.5,329.0 646.6,330.2 646.7,334.6 646.9,333.3 647.0,333.3 647.2,331.3 647.3,333.3 647.4,332.7 647.6,335.3 647.7,329.9 647.9,331.1 648.0,332.5 648.1,335.4 648.3,332.4 648.4,327.5 648.6,332.0 648.7,330.5 648.8,336.4 649.0,333.2 649.1,333.1 649.3,330.8 649.4,334.4 649.5,331.2 649.7,330.8 649.8,332.5 650.0,333.0 650.1,331.9 650.2,334.5 650.4,335.5 650.5,335.7 650.7,332.4 650.8,333.2 650.9,333.0 651.1,333.7 651.2,332.9 651.4,329.5 651.5,333.3 651.6,334.3 651.8,334.9 651.9,334.4 652.1,331.8 652.2,333.1 652.3,333.4 652.5,333.1 652.6,335.3 652.8,334.3 652.9,333.5 653.0,333.5 653.2,332.3 653.3,331.2 653.5,333.9 653.6,332.2 653.7,332.1 653.9,333.8 654.0,331.8 654.2,331.1 654.3,335.5 654.4,332.0 654.6,332.0 654.7,332.2 654.9,335.3 655.0,330.9 655.2,332.9 655.3,334.1 655.4,335.4 655.6,331.9 655.7,332.9 655.9,335.0 656.0,329.7 656.1,334.7 656.3,331.4 656.4,334.2 656.6,332.8 656.7,331.3 656.8,332.9 657.0,331.5 657.1,332.3 657.3,329.7 657.4,331.0 657.5,331.3 657.7,333.4 657.8,332.8 658.0,331.7 658.1,329.0 658.2,329.3 658.4,331.5 658.5,329.8 658.7,331.4 658.8,331.2 658.9,331.4 659.1,331.9 659.2,330.4 659.4,325.8 659.5,331.5 659.6,328.8 659.8,329.1 659.9,330.3 660.1,328.8 660.2,330.6 660.3,329.2 660.5,326.4 660.6,325.4 660.8,327.2 660.9,326.2 661.0,326.3 661.2,320.3 661.3,319.3 661.5,315.7 661.6,308.7 661.7,303.1 661.9,298.7 662.0,286.9 662.2,284.6 662.3,278.3 662.4,269.5 662.6,270.1 662.7,274.2 662.9,273.8 663.0,280.3 663.1,289.4 663.3,296.5 663.4,302.8 663.6,307.8 663.7,314.6 663.9,320.4 664.0,321.9 664.1,325.1 664.3,328.9 664.4,328.2 664.6,330.2 664.7,328.9 664.8,327.5 665.0,329.1 665.1,325.4 665.3,329.8 665.4,330.5 665.5,332.5 665.7,329.7 665.8,330.7 666.0,334.3 666.1,332.7 666.2,330.5 666.4,332.5 666.5,331.1 666.7,331.5 666.8,328.4 666.9,334.6 667.1,332.3 667.2,334.4 667.4,333.7 667.5,328.8 667.6,330.6 667.8,331.2 667.9,332.4 668.1,332.2 668.2,328.8 668.3,334.2 668.5,330.1 668.6,330.5 668.8,334.0 668.9,332.0 669.0,333.7 669.2,332.4 669.3,330.9 669.5,332.0 669.6,330.4 669.7,331.2 669.9,336.4 670.0,331.1 670.2,334.8 670.3,337.7 670.4,333.2 670.6,333.5 670.7,329.0 670.9,330.8 671.0,331.1 671.1,332.5 671.3,331.0 671.4,333.8 671.6,330.7 671.7,333.4 671.8,332.9 672.0,332.1 672.1,333.9 672.3,327.5 672.4,332.3 672.6,333.4 672.7,334.3 672.8,333.8 673.0,332.8 673.1,331.7 673.3,335.3 673.4,333.5 673.5,329.5 673.7,332.1 673.8,332.7 674.0,333.4 674.1,333.1 674.2,332.5 674.4,330.3 674.5,330.4 674.7,333.7 674.8,334.2 674.9,331.9 675.1,333.7 675.2,331.0 675.4,330.8 675.5,334.0 675.6,336.4 675.8,335.2 675.9,333.0 676.1,334.9 676.2,332.3 676.3,332.4 676.5,332.7 676.6,333.1 676.8,334.0 676.9,331.8 677.0,336.2 677.2,332.1 677.3,328.8 677.5,330.6 677.6,332.8 677.7,333.3 677.9,332.1 678.0,333.1 678.2,329.9 678.3,333.8 678.4,333.2 678.6,334.9 678.7,331.8 678.9,335.6 679.0,331.4 679.1,331.9 679.3,335.1 679.4,332.1 679.6,333.3 679.7,333.8 679.8,335.2 680.0,335.7 680.1,335.4 680.3,335.8 680.4,332.8 680.5,334.6 680.7,329.2 680.8,332.2 681.0,330.9 681.1,334.1 681.3,330.2 681.4,333.6 681.5,331.1 681.7,332.3 681.8,331.6 682.0,334.9 682.1,334.5 682.2,331.2 682.4,332.1 682.5,333.9 682.7,331.8 682.8,332.7 682.9,333.9 683.1,329.3 683.2,336.8 683.4,333.4 683.5,331.4 683.6,332.1 683.8,329.5 683.9,331.8 684.1,332.0 684.2,334.0 684.3,330.0 684.5,333.9 684.6,333.5 684.8,333.5 684.9,331.8 685.0,333.9 685.2,333.0 685.3,333.8 685.5,335.9 685.6,334.0 685.7,329.3 685.9,333.6 686.0,332.6 686.2,328.4 686.3,334.2 686.4,331.6 686.6,330.8 686.7,334.5 686.9,330.2 687.0,331.3 687.1,334.9 687.3,332.7 687.4,335.0 687.6,328.0 687.7,329.2 687.8,332.8 688.0,334.0 688.1,332.1 688.3,334.9 688.4,333.3 688.5,334.8 688.7,333.3 688.8,332.2 689.0,332.3 689.1,331.6 689.2,333.8 689.4,331.4 689.5,332.7 689.7,332.3 689.8,330.3 689.9,332.8 690.1,334.5 690.2,331.7 690.4,334.7 690.5,332.7 690.7,333.0 690.8,336.5 690.9,335.4 691.1,334.5 691.2,332.3 691.4,331.3 691.5,332.8 691.6,328.9 691.8,331.5 691.9,335.6 692.1,331.8 692.2,334.6 692.3,334.2 692.5,333.4 692.6,333.3 692.8,332.3 692.9,331.6 693.0,331.0 693.2,333.9 693.3,332.7 693.5,330.8 693.6,334.8 693.7,331.1 693.9,331.6 694.0,333.5 694.2,330.8 694.3,332.2 694.4,331.6 694.6,330.1 694.7,333.0 694.9,334.8 695.0,333.7 695.1,334.8 695.3,331.1 695.4,333.5 695.6,333.6 695.7,334.0 695.8,331.0 696.0,332.4 696.1,331.6 696.3,332.5 696.4,334.2 696.5,334.5 696.7,330.8 696.8,333.4 697.0,331.7 697.1,334.9 697.2,333.4 697.4,333.9 697.5,334.4 697.7,331.9 697.8,331.4 697.9,333.4 698.1,329.3 698.2,333.0 698.4,335.7 698.5,332.0 698.6,335.2 698.8,333.6 698.9,332.5 699.1,330.9 699.2,331.9 699.4,334.2 699.5,330.7 699.6,332.5 699.8,330.7 699.9,330.6 700.1,332.9 700.2,334.2 700.3,331.7 700.5,332.8 700.6,333.0 700.8,332.7 700.9,334.4 701.0,334.7 701.2,333.8 701.3,332.6 701.5,333.5 701.6,331.8 701.7,331.6 701.9,332.2 702.0,334.7 702.2,335.4 702.3,334.6 702.4,335.0 702.6,331.5 702.7,331.6 702.9,335.8 703.0,333.7 703.1,333.2 703.3,334.5 703.4,333.5 703.6,334.4 703.7,333.7 703.8,333.0 704.0,332.4 704.1,334.3 704.3,331.7 704.4,334.4 704.5,333.6 704.7,333.3 704.8,334.6 705.0,332.2 705.1,334.1 705.2,334.6 705.4,330.1 705.5,333.4 705.7,333.7 705.8,336.9 705.9,333.2 706.1,330.3 706.2,333.6 706.4,333.5 706.5,331.6 706.6,331.5 706.8,330.9 706.9,331.8 707.1,333.4 707.2,334.2 707.3,332.0 707.5,332.0 707.6,332.1 707.8,334.1 707.9,333.8 708.1,330.3 708.2,333.6 708.3,331.9 708.5,332.9 708.6,335.8 708.8,332.0 708.9,334.7 709.0,330.1 709.2,333.6 709.3,334.0 709.5,333.3 709.6,333.0 709.7,333.7 709.9,333.5 710.0,331.1 710.2,332.7 710.3,331.7 710.4,332.8 710.6,331.9 710.7,334.1 710.9,330.3 711.0,334.5 711.1,335.9 711.3,335.3 711.4,334.7 711.6,333.4 711.7,330.0 711.8,335.1 712.0,331.7 712.1,334.6 712.3,330.6 712.4,332.0 712.5,329.8 712.7,333.4 712.8,331.6 713.0,331.5 713.1,333.7 713.2,333.1 713.4,334.0 713.5,334.3 713.7,334.0 713.8,335.0 713.9,331.5 714.1,333.2 714.2,334.5 714.4,332.9 714.5,332.5 714.6,333.6 714.8,331.2 714.9,333.4 715.1,332.7 715.2,329.2 715.3,333.9 715.5,332.9 715.6,332.5 715.8,335.1 715.9,333.7 716.0,331.6 716.2,330.2 716.3,334.2 716.5,332.2 716.6,333.5 716.8,333.7 716.9,335.1 717.0,332.3 717.2,336.6 717.3,331.9 717.5,332.6 717.6,332.5 717.7,333.3 717.9,335.2 718.0,335.7 718.2,332.8 718.3,332.1 718.4,332.7 718.6,334.6 718.7,331.5 718.9,329.0 719.0,333.7 719.1,334.6 719.3,333.6 719.4,329.9 719.6,334.4 719.7,333.8 719.8,333.2 720.0,333.5 720.1,331.8 720.3,333.7 720.4,335.0 720.5,332.7 720.7,332.9 720.8,329.5 721.0,330.8 721.1,329.8 721.2,332.8 721.4,332.2 721.5,332.1 721.7,332.9 721.8,335.7 721.9,331.9 722.1,332.5 722.2,330.0 722.4,331.0 722.5,333.8 722.6,332.3 722.8,334.8 722.9,330.8 723.1,333.2 723.2,335.2 723.3,336.7 723.5,331.5 723.6,331.9 723.8,334.5 723.9,328.9 724.0,333.9 724.2,330.2 724.3,334.1 724.5,332.5 724.6,333.9 724.7,329.3 724.9,331.2 725.0,332.4 725.2,332.2 725.3,332.6 725.5,332.6 725.6,335.3 725.7,332.1 725.9,330.5 726.0,334.1 726.2,335.2 726.3,335.3 726.4,334.6 726.6,331.2 726.7,332.2 726.9,335.2 727.0,330.4 727.1,333.5 727.3,331.8 727.4,333.5 727.6,334.7 727.7,332.7 727.8,333.6 728.0,332.5 728.1,332.8 728.3,335.0 728.4,332.1 728.5,333.7 728.7,332.1 728.8,331.4 729.0,332.1 729.1,331.3 729.2,330.0 729.4,333.5 729.5,334.0 729.7,334.7 729.8,331.1 729.9,334.4 730.1,331.8 730.2,330.4 730.4,334.4 730.5,330.4 730.6,334.6 730.8,331.6 730.9,332.9 731.1,335.6 731.2,333.0 731.3,330.3 731.5,333.2 731.6,335.0 731.8,331.3 731.9,331.3 732.0,334.8 732.2,332.7 732.3,335.2 732.5,335.4 732.6,331.7 732.7,331.6 732.9,330.2 733.0,331.6 733.2,333.3 733.3,331.0 733.4,334.4 733.6,333.6 733.7,332.7 733.9,333.7 734.0,333.2 734.2,334.3 734.3,331.3 734.4,330.3 734.6,330.9 734.7,329.6 734.9,331.2 735.0,331.4 735.1,335.2 735.3,332.6 735.4,335.4 735.6,331.0 735.7,332.5 735.8,333.1 736.0,333.6 736.1,334.1 736.3,333.1 736.4,333.4 736.5,332.3 736.7,335.1 736.8,333.6 737.0,330.3 737.1,336.3 737.2,333.7 737.4,335.1 737.5,332.2 737.7,331.6 737.8,333.5 737.9,334.1 738.1,333.3 738.2,331.3 738.4,334.2 738.5,333.4 738.6,331.0 738.8,334.7 738.9,335.2 739.1,331.7 739.2,330.6 739.3,331.6 739.5,328.8 739.6,334.6 739.8,333.9 739.9,332.2 740.0,336.8 740.2,333.7 740.3,329.3 740.5,330.7 740.6,334.7 740.7,329.1 740.9,330.2 741.0,332.4 741.2,333.8 741.3,331.6 741.4,330.3 741.6,332.6 741.7,334.2 741.9,331.9 742.0,332.1 742.1,335.4 742.3,335.2 742.4,334.6 742.6,331.5 742.7,334.9 742.9,333.3 743.0,332.4 743.1,334.6 743.3,334.6 743.4,334.4 743.6,333.4 743.7,334.6 743.8,329.7 744.0,332.0 744.1,331.1 744.3,334.6 744.4,334.6 744.5,335.0 744.7,334.5 744.8,331.8 745.0,330.9 745.1,331.0 745.2,331.4 745.4,336.5 745.5,333.6 745.7,332.2 745.8,331.6 745.9,333.2 746.1,332.2 746.2,333.0 746.4,333.2 746.5,331.9 746.6,334.2 746.8,333.9 746.9,332.2 747.1,332.3 747.2,332.7 747.3,331.4 747.5,333.7 747.6,332.3 747.8,330.8 747.9,334.0 748.0,333.4 748.2,330.5 748.3,333.3 748.5,331.6 748.6,334.2 748.7,333.9 748.9,334.8 749.0,335.0 749.2,330.7 749.3,332.8 749.4,333.8 749.6,331.0 749.7,332.2 749.9,331.8 750.0,332.4 750.1,331.2 750.3,335.0 750.4,335.1 750.6,333.2 750.7,332.3 750.8,332.4 751.0,333.6 751.1,331.6 751.3,331.9 751.4,332.5 751.6,332.5 751.7,330.1 751.8,332.7 752.0,334.3 752.1,334.0 752.3,330.3 752.4,332.4 752.5,331.4 752.7,331.2 752.8,331.7 753.0,332.9 753.1,331.7 753.2,330.2 753.4,332.7 753.5,330.9 753.7,330.5 753.8,332.4 753.9,330.3 754.1,328.5 754.2,328.2 754.4,328.5 754.5,323.4 754.6,324.8 754.8,320.0 754.9,317.7 755.1,315.4 755.2,309.6 755.3,304.0 755.5,302.9 755.6,300.3 755.8,298.3 755.9,297.1 756.0,299.7 756.2,297.1 756.3,302.0 756.5,306.9 756.6,304.3 756.7,305.7 756.9,307.3 757.0,302.9 757.2,305.2 757.3,307.6 757.4,315.4 757.6,320.4 757.7,323.3 757.9,324.9 758.0,327.9 758.1,326.3 758.3,330.5 758.4,330.9 758.6,331.8 758.7,332.3 758.8,333.2 759.0,333.8 759.1,332.1 759.3,330.8 759.4,329.0 759.5,331.8 759.7,334.8 759.8,330.5 760.0,333.4 760.1,330.8 760.3,331.8 760.4,333.1 760.5,332.9 760.7,333.2 760.8,331.2 761.0,333.6 761.1,332.9 761.2,333.5 761.4,333.5 761.5,331.2 761.7,330.4 761.8,333.1 761.9,332.2 762.1,330.9 762.2,331.2 762.4,333.4 762.5,331.2 762.6,332.4 762.8,334.8 762.9,333.3 763.1,334.3 763.2,331.7 763.3,331.4 763.5,331.0 763.6,333.1 763.8,333.6 763.9,333.2 764.0,332.6 764.2,333.9 764.3,332.1 764.5,331.1 764.6,335.7 764.7,331.3 764.9,331.3 765.0,334.9 765.2,325.4 765.3,331.3 765.4,332.2 765.6,335.4 765.7,332.4 765.9,332.7 766.0,331.9 766.1,333.6 766.3,334.6 766.4,334.7 766.6,332.4 766.7,334.1 766.8,332.3 767.0,330.0 767.1,335.6 767.3,333.3 767.4,329.1 767.5,332.0 767.7,329.8 767.8,332.5 768.0,330.1 768.1,331.0 768.2,330.9 768.4,334.8 768.5,330.4 768.7,332.7 768.8,333.6 769.0,331.4 769.1,333.8 769.2,334.8 769.4,332.6 769.5,331.0 769.7,333.4 769.8,331.7 769.9,330.4 770.1,332.9 770.2,333.0 770.4,334.1 770.5,333.8 770.6,333.0 770.8,337.2 770.9,332.5 771.1,329.7 771.2,332.7 771.3,332.8 771.5,334.0 771.6,331.7 771.8,333.4 771.9,329.6 772.0,332.0 772.2,331.8 772.3,332.2 772.5,333.5 772.6,337.3 772.7,333.7 772.9,331.6 773.0,336.2 773.2,332.1 773.3,332.1 773.4,331.9 773.6,332.5 773.7,332.4 773.9,333.5 774.0,330.9 774.1,335.3 774.3,334.9 774.4,334.6 774.6,334.5 774.7,331.7 774.8,333.4 775.0,331.4 775.1,335.1 775.3,333.7 775.4,334.3 775.5,332.8 775.7,332.5 775.8,332.5 776.0,334.1 776.1,330.7 776.2,333.5 776.4,331.5 776.5,330.0 776.7,330.6 776.8,335.1 776.9,329.9 777.1,333.2 777.2,331.7 777.4,332.7 777.5,332.9 777.7,332.7 777.8,332.0 777.9,331.4 778.1,334.5 778.2,335.8 778.4,333.7 778.5,335.3 778.6,334.6 778.8,330.9 778.9,331.9 779.1,334.3 779.2,334.1 779.3,333.9 779.5,333.7 779.6,333.4 779.8,332.8 779.9,331.3 780.0,333.4 780.2,336.1 780.3,332.9 780.5,333.3 780.6,333.9 780.7,331.6 780.9,336.3 781.0,334.9 781.2,334.4 781.3,330.3 781.4,334.6 781.6,333.7 781.7,332.3 781.9,332.8 782.0,336.8" fill="none" stroke="#0808b4" stroke-width="1.2" stroke-linejoin="round"/>
<rect x="501.5" y="115.5" width="280.5" height="250.0" fill="none" stroke="#2a2a2a" stroke-width="0.95"/>
<line x1="496.0" y1="347.9" x2="501.5" y2="347.9" stroke="#000" stroke-width="1"/>
<text x="492.5" y="352.3" font-size="13" font-weight="bold" text-anchor="end" fill="#111">0</text>
<line x1="496.0" y1="314.6" x2="501.5" y2="314.6" stroke="#000" stroke-width="1"/>
<text x="492.5" y="319.0" font-size="13" font-weight="bold" text-anchor="end" fill="#111">1000</text>
<line x1="496.0" y1="281.3" x2="501.5" y2="281.3" stroke="#000" stroke-width="1"/>
<text x="492.5" y="285.7" font-size="13" font-weight="bold" text-anchor="end" fill="#111">2000</text>
<line x1="496.0" y1="248.0" x2="501.5" y2="248.0" stroke="#000" stroke-width="1"/>
<text x="492.5" y="252.4" font-size="13" font-weight="bold" text-anchor="end" fill="#111">3000</text>
<line x1="496.0" y1="214.7" x2="501.5" y2="214.7" stroke="#000" stroke-width="1"/>
<text x="492.5" y="219.1" font-size="13" font-weight="bold" text-anchor="end" fill="#111">4000</text>
<line x1="496.0" y1="181.4" x2="501.5" y2="181.4" stroke="#000" stroke-width="1"/>
<text x="492.5" y="185.8" font-size="13" font-weight="bold" text-anchor="end" fill="#111">5000</text>
<line x1="496.0" y1="148.1" x2="501.5" y2="148.1" stroke="#000" stroke-width="1"/>
<text x="492.5" y="152.5" font-size="13" font-weight="bold" text-anchor="end" fill="#111">6000</text>
<line x1="496.0" y1="114.8" x2="501.5" y2="114.8" stroke="#000" stroke-width="1"/>
<text x="492.5" y="119.2" font-size="13" font-weight="bold" text-anchor="end" fill="#111">7000</text>
<line x1="498.5" y1="331.2" x2="501.5" y2="331.2" stroke="#000" stroke-width="1"/>
<line x1="498.5" y1="297.9" x2="501.5" y2="297.9" stroke="#000" stroke-width="1"/>
<line x1="498.5" y1="264.6" x2="501.5" y2="264.6" stroke="#000" stroke-width="1"/>
<line x1="498.5" y1="231.3" x2="501.5" y2="231.3" stroke="#000" stroke-width="1"/>
<line x1="498.5" y1="198.0" x2="501.5" y2="198.0" stroke="#000" stroke-width="1"/>
<line x1="498.5" y1="164.7" x2="501.5" y2="164.7" stroke="#000" stroke-width="1"/>
<line x1="498.5" y1="131.4" x2="501.5" y2="131.4" stroke="#000" stroke-width="1"/>
<text transform="translate(452.0,235.3) rotate(-90)" font-size="15" text-anchor="middle" fill="#222" letter-spacing="0.2">Intensity (a.u)</text>
<rect x="691.5" y="120.4" width="76" height="21.3" fill="#fff" stroke="#222" stroke-width="0.9"/>
<line x1="695.5" y1="131.05" x2="726.5" y2="131.05" stroke="#0808b4" stroke-width="1" opacity="0.75"/>
<text x="731.5" y="136.25" font-size="15" fill="#111">500C</text>
</svg>
<svg class="a" style="left:0;top:0" width="893" height="720" viewBox="0 0 893 720">
<polyline points="155.5,593.0 155.6,594.2 155.8,589.7 155.9,594.0 156.1,593.4 156.2,591.0 156.3,595.0 156.5,594.4 156.6,593.1 156.8,593.9 156.9,595.3 157.0,593.6 157.2,593.9 157.3,592.3 157.5,595.9 157.6,594.3 157.7,591.3 157.9,590.1 158.0,595.5 158.2,592.0 158.3,594.6 158.4,594.4 158.6,594.4 158.7,593.6 158.9,591.3 159.0,591.7 159.1,592.7 159.3,593.4 159.4,592.8 159.6,592.9 159.7,591.4 159.8,593.7 160.0,592.7 160.1,592.8 160.3,592.7 160.4,592.2 160.5,592.2 160.7,590.3 160.8,592.6 161.0,589.9 161.1,592.9 161.2,593.2 161.4,592.2 161.5,591.7 161.7,591.9 161.8,590.2 161.9,590.4 162.1,591.4 162.2,592.7 162.4,592.3 162.5,589.8 162.6,591.7 162.8,594.2 162.9,593.1 163.1,592.9 163.2,590.1 163.3,592.1 163.5,588.3 163.6,590.8 163.8,591.7 163.9,592.5 164.0,590.2 164.2,592.2 164.3,593.1 164.5,590.8 164.6,591.7 164.7,589.7 164.9,591.7 165.0,596.2 165.2,590.3 165.3,594.6 165.4,589.0 165.6,588.5 165.7,592.2 165.9,593.3 166.0,593.7 166.1,590.0 166.3,591.7 166.4,592.3 166.6,591.7 166.7,587.9 166.8,590.7 167.0,590.0 167.1,589.9 167.3,589.5 167.4,589.4 167.5,592.3 167.7,591.4 167.8,592.3 168.0,592.2 168.1,589.1 168.2,591.8 168.4,591.1 168.5,592.0 168.7,591.8 168.8,589.6 168.9,591.6 169.1,591.6 169.2,590.0 169.4,589.9 169.5,589.4 169.6,590.4 169.8,593.5 169.9,589.6 170.1,589.8 170.2,588.9 170.3,591.9 170.5,586.4 170.6,592.5 170.8,589.3 170.9,590.4 171.0,591.2 171.2,589.1 171.3,590.8 171.5,594.1 171.6,592.2 171.7,589.5 171.9,586.6 172.0,592.6 172.2,590.2 172.3,587.8 172.4,589.2 172.6,590.7 172.7,592.4 172.9,593.0 173.0,591.3 173.1,590.6 173.3,593.6 173.4,592.7 173.6,589.5 173.7,590.6 173.8,591.1 174.0,590.5 174.1,591.2 174.3,588.3 174.4,587.1 174.5,586.4 174.7,588.6 174.8,588.5 175.0,587.3 175.1,586.8 175.2,587.3 175.4,587.6 175.5,590.6 175.7,592.1 175.8,588.1 176.0,589.7 176.1,589.6 176.2,590.9 176.4,591.5 176.5,587.1 176.7,588.6 176.8,591.1 176.9,588.7 177.1,588.8 177.2,588.4 177.4,585.6 177.5,589.3 177.6,591.3 177.8,589.1 177.9,590.2 178.1,588.2 178.2,588.7 178.3,588.5 178.5,590.0 178.6,588.3 178.8,589.8 178.9,588.1 179.0,589.4 179.2,590.7 179.3,588.1 179.5,590.0 179.6,586.5 179.7,588.1 179.9,588.0 180.0,588.6 180.2,588.8 180.3,592.6 180.4,586.7 180.6,590.0 180.7,587.1 180.9,589.6 181.0,588.8 181.1,588.9 181.3,590.2 181.4,588.8 181.6,587.7 181.7,589.1 181.8,590.5 182.0,589.3 182.1,588.0 182.3,586.5 182.4,587.0 182.5,587.8 182.7,589.9 182.8,586.8 183.0,588.2 183.1,588.6 183.2,586.7 183.4,587.1 183.5,587.3 183.7,590.0 183.8,589.1 183.9,590.8 184.1,587.7 184.2,587.9 184.4,586.5 184.5,587.6 184.6,588.5 184.8,584.5 184.9,589.5 185.1,590.0 185.2,588.8 185.3,586.9 185.5,588.3 185.6,588.5 185.8,589.5 185.9,585.3 186.0,588.7 186.2,589.4 186.3,587.8 186.5,588.9 186.6,587.9 186.7,585.4 186.9,588.2 187.0,587.6 187.2,588.1 187.3,587.7 187.4,586.1 187.6,586.5 187.7,587.9 187.9,588.8 188.0,587.5 188.1,585.9 188.3,587.3 188.4,587.4 188.6,590.1 188.7,585.6 188.8,589.6 189.0,589.2 189.1,587.7 189.3,587.0 189.4,587.0 189.5,588.3 189.7,587.5 189.8,588.0 190.0,589.9 190.1,587.3 190.2,588.0 190.4,586.2 190.5,587.1 190.7,585.3 190.8,585.7 190.9,585.3 191.1,584.8 191.2,585.6 191.4,587.0 191.5,584.5 191.6,588.2 191.8,586.7 191.9,585.2 192.1,587.0 192.2,585.4 192.3,587.8 192.5,587.4 192.6,585.6 192.8,585.3 192.9,584.5 193.0,586.5 193.2,585.9 193.3,585.3 193.5,585.6 193.6,588.4 193.7,587.2 193.9,583.9 194.0,588.2 194.2,585.2 194.3,586.9 194.4,584.5 194.6,587.4 194.7,586.0 194.9,589.4 195.0,586.1 195.1,584.3 195.3,588.4 195.4,584.0 195.6,587.1 195.7,586.0 195.8,590.4 196.0,584.1 196.1,587.3 196.3,586.7 196.4,587.8 196.5,587.4 196.7,583.9 196.8,586.5 197.0,584.2 197.1,585.9 197.2,585.0 197.4,586.4 197.5,584.9 197.7,581.3 197.8,584.4 197.9,584.6 198.1,586.2 198.2,583.7 198.4,583.1 198.5,588.1 198.6,587.5 198.8,581.8 198.9,584.5 199.1,584.9 199.2,584.1 199.3,583.2 199.5,583.6 199.6,585.2 199.8,581.3 199.9,584.5 200.0,585.7 200.2,584.9 200.3,583.9 200.5,583.8 200.6,582.9 200.7,581.5 200.9,586.6 201.0,581.8 201.2,578.4 201.3,578.5 201.4,580.2 201.6,580.1 201.7,577.6 201.9,580.4 202.0,581.6 202.1,578.4 202.3,582.7 202.4,581.6 202.6,583.4 202.7,583.6 202.8,585.6 203.0,585.7 203.1,582.5 203.3,586.6 203.4,584.4 203.5,586.8 203.7,585.3 203.8,585.1 204.0,587.7 204.1,583.2 204.2,585.4 204.4,583.1 204.5,586.6 204.7,583.7 204.8,581.4 204.9,584.8 205.1,586.2 205.2,584.4 205.4,585.0 205.5,585.5 205.6,585.4 205.8,586.2 205.9,584.5 206.1,585.9 206.2,586.6 206.3,583.9 206.5,585.5 206.6,581.0 206.8,585.6 206.9,586.4 207.0,586.1 207.2,584.7 207.3,586.4 207.5,587.3 207.6,582.6 207.7,587.3 207.9,582.8 208.0,585.0 208.2,587.0 208.3,582.6 208.4,585.6 208.6,586.9 208.7,585.2 208.9,583.2 209.0,584.2 209.1,583.9 209.3,582.4 209.4,584.9 209.6,584.7 209.7,585.6 209.8,587.6 210.0,585.5 210.1,582.7 210.3,588.1 210.4,583.1 210.5,584.9 210.7,586.8 210.8,585.2 211.0,582.4 211.1,586.2 211.2,584.0 211.4,583.5 211.5,586.7 211.7,584.3 211.8,584.4 211.9,586.1 212.1,584.2 212.2,585.9 212.4,586.2 212.5,587.3 212.6,584.7 212.8,586.0 212.9,586.2 213.1,587.2 213.2,587.5 213.3,586.6 213.5,584.1 213.6,586.6 213.8,583.0 213.9,584.6 214.0,585.0 214.2,587.2 214.3,582.1 214.5,587.6 214.6,584.4 214.7,582.5 214.9,585.6 215.0,586.4 215.2,585.3 215.3,583.8 215.4,583.1 215.6,584.3 215.7,587.0 215.9,586.4 216.0,585.0 216.2,587.4 216.3,585.7 216.4,581.7 216.6,587.0 216.7,583.4 216.9,586.8 217.0,585.8 217.1,585.4 217.3,587.7 217.4,585.4 217.6,583.2 217.7,584.1 217.8,584.1 218.0,586.6 218.1,585.5 218.3,584.9 218.4,584.2 218.5,583.1 218.7,586.9 218.8,582.5 219.0,585.7 219.1,585.6 219.2,587.2 219.4,585.3 219.5,585.6 219.7,587.2 219.8,585.7 219.9,585.0 220.1,585.8 220.2,583.8 220.4,586.7 220.5,583.5 220.6,585.1 220.8,583.9 220.9,587.0 221.1,583.1 221.2,582.4 221.3,579.7 221.5,582.6 221.6,578.7 221.8,583.6 221.9,580.8 222.0,582.8 222.2,585.6 222.3,581.2 222.5,586.9 222.6,585.3 222.7,584.8 222.9,584.3 223.0,584.8 223.2,583.9 223.3,584.4 223.4,585.1 223.6,586.7 223.7,585.8 223.9,583.8 224.0,587.1 224.1,585.1 224.3,588.6 224.4,586.4 224.6,587.9 224.7,583.2 224.8,588.2 225.0,585.6 225.1,584.1 225.3,584.3 225.4,584.0 225.5,583.5 225.7,584.5 225.8,583.9 226.0,585.3 226.1,585.3 226.2,588.1 226.4,584.9 226.5,583.1 226.7,586.4 226.8,587.0 226.9,585.0 227.1,583.2 227.2,583.1 227.4,587.3 227.5,584.0 227.6,585.4 227.8,583.3 227.9,586.5 228.1,580.3 228.2,581.5 228.3,580.3 228.5,581.6 228.6,584.0 228.8,582.5 228.9,584.9 229.0,585.7 229.2,583.8 229.3,585.1 229.5,586.2 229.6,583.6 229.7,586.1 229.9,585.2 230.0,584.0 230.2,583.7 230.3,583.3 230.4,582.5 230.6,585.2 230.7,586.5 230.9,582.6 231.0,583.0 231.1,585.7 231.3,584.1 231.4,585.9 231.6,587.8 231.7,583.6 231.8,584.7 232.0,585.1 232.1,582.5 232.3,583.0 232.4,586.3 232.5,587.1 232.7,588.4 232.8,585.3 233.0,585.9 233.1,584.7 233.2,585.3 233.4,586.3 233.5,585.9 233.7,587.8 233.8,583.3 233.9,586.2 234.1,584.3 234.2,586.4 234.4,585.2 234.5,584.3 234.6,585.7 234.8,586.6 234.9,581.5 235.1,585.6 235.2,584.4 235.3,585.4 235.5,586.5 235.6,583.2 235.8,584.7 235.9,584.7 236.0,589.0 236.2,584.8 236.3,583.9 236.5,584.8 236.6,585.5 236.7,583.4 236.9,584.9 237.0,584.4 237.2,583.6 237.3,583.7 237.4,587.4 237.6,584.7 237.7,586.5 237.9,588.5 238.0,584.8 238.1,588.1 238.3,586.0 238.4,589.4 238.6,586.9 238.7,586.1 238.8,585.3 239.0,586.2 239.1,586.8 239.3,586.8 239.4,582.8 239.5,586.1 239.7,585.5 239.8,582.2 240.0,588.1 240.1,588.6 240.2,586.9 240.4,585.9 240.5,587.2 240.7,585.4 240.8,585.4 240.9,587.8 241.1,585.0 241.2,587.6 241.4,584.2 241.5,584.9 241.6,581.7 241.8,584.0 241.9,585.6 242.1,584.7 242.2,585.1 242.3,586.5 242.5,587.7 242.6,583.5 242.8,582.8 242.9,586.1 243.0,585.7 243.2,586.1 243.3,583.7 243.5,583.3 243.6,586.7 243.7,585.8 243.9,586.2 244.0,584.9 244.2,584.1 244.3,583.6 244.4,585.7 244.6,586.9 244.7,584.4 244.9,584.3 245.0,585.9 245.1,585.0 245.3,584.7 245.4,583.9 245.6,585.2 245.7,584.5 245.8,585.0 246.0,586.9 246.1,584.1 246.3,585.1 246.4,583.6 246.5,587.2 246.7,586.4 246.8,584.8 247.0,588.1 247.1,585.5 247.2,586.0 247.4,585.9 247.5,585.7 247.7,588.9 247.8,585.2 247.9,585.2 248.1,583.6 248.2,582.9 248.4,584.7 248.5,583.8 248.6,589.1 248.8,584.4 248.9,583.5 249.1,583.9 249.2,584.9 249.3,585.8 249.5,585.9 249.6,585.2 249.8,584.6 249.9,584.3 250.0,585.4 250.2,587.3 250.3,582.3 250.5,586.7 250.6,589.6 250.7,582.9 250.9,583.6 251.0,584.9 251.2,583.7 251.3,584.5 251.4,586.6 251.6,585.0 251.7,587.2 251.9,586.3 252.0,586.6 252.1,585.0 252.3,583.5 252.4,586.3 252.6,584.5 252.7,588.7 252.8,586.9 253.0,584.3 253.1,583.6 253.3,583.7 253.4,583.4 253.5,587.8 253.7,586.0 253.8,589.3 254.0,585.4 254.1,584.7 254.2,585.7 254.4,586.6 254.5,584.4 254.7,584.2 254.8,584.8 254.9,585.9 255.1,584.8 255.2,584.7 255.4,584.3 255.5,583.6 255.7,584.6 255.8,586.7 255.9,584.7 256.1,583.5 256.2,584.6 256.4,583.3 256.5,584.5 256.6,581.0 256.8,582.3 256.9,582.5 257.1,581.3 257.2,581.1 257.3,582.1 257.5,580.5 257.6,581.1 257.8,581.9 257.9,582.4 258.0,584.4 258.2,582.5 258.3,582.8 258.5,584.7 258.6,581.3 258.7,583.8 258.9,585.7 259.0,584.8 259.2,584.4 259.3,584.5 259.4,585.9 259.6,584.7 259.7,587.2 259.9,585.6 260.0,584.2 260.1,586.1 260.3,584.0 260.4,583.7 260.6,586.0 260.7,589.0 260.8,583.7 261.0,582.9 261.1,587.7 261.3,584.8 261.4,584.6 261.5,587.8 261.7,586.0 261.8,583.1 262.0,584.8 262.1,585.1 262.2,583.3 262.4,586.1 262.5,588.1 262.7,583.0 262.8,586.4 262.9,585.2 263.1,583.3 263.2,584.7 263.4,584.9 263.5,586.1 263.6,584.2 263.8,581.6 263.9,586.1 264.1,587.0 264.2,584.7 264.3,586.3 264.5,585.0 264.6,585.1 264.8,584.3 264.9,584.8 265.0,584.6 265.2,583.1 265.3,586.7 265.5,585.1 265.6,584.6 265.7,587.1 265.9,586.7 266.0,585.7 266.2,586.0 266.3,583.3 266.4,584.9 266.6,580.4 266.7,585.7 266.9,585.6 267.0,581.5 267.1,586.0 267.3,581.6 267.4,590.2 267.6,586.2 267.7,582.9 267.8,582.5 268.0,584.4 268.1,586.2 268.3,585.3 268.4,583.8 268.5,584.6 268.7,583.6 268.8,586.3 269.0,583.7 269.1,583.0 269.2,580.1 269.4,583.9 269.5,583.9 269.7,586.4 269.8,587.2 269.9,588.7 270.1,584.2 270.2,581.7 270.4,585.1 270.5,588.9 270.6,584.4 270.8,584.8 270.9,584.7 271.1,580.6 271.2,580.6 271.3,579.4 271.5,582.6 271.6,581.0 271.8,584.1 271.9,581.3 272.0,585.7 272.2,582.3 272.3,584.2 272.5,584.4 272.6,587.2 272.7,583.8 272.9,587.9 273.0,587.0 273.2,586.5 273.3,581.6 273.4,584.8 273.6,586.1 273.7,584.2 273.9,581.2 274.0,585.3 274.1,586.7 274.3,586.8 274.4,585.1 274.6,582.3 274.7,585.2 274.8,585.4 275.0,586.6 275.1,586.9 275.3,583.3 275.4,584.5 275.5,584.3 275.7,587.2 275.8,584.1 276.0,584.5 276.1,582.5 276.2,583.3 276.4,585.4 276.5,584.5 276.7,584.5 276.8,585.1 276.9,586.4 277.1,583.5 277.2,581.3 277.4,585.1 277.5,582.3 277.6,585.5 277.8,585.5 277.9,585.0 278.1,585.4 278.2,583.3 278.3,583.0 278.5,589.1 278.6,583.6 278.8,584.2 278.9,582.0 279.0,586.3 279.2,584.6 279.3,582.9 279.5,583.4 279.6,582.3 279.7,586.1 279.9,585.9 280.0,583.8 280.2,587.0 280.3,584.0 280.4,583.2 280.6,584.1 280.7,586.8 280.9,585.6 281.0,585.1 281.1,583.9 281.3,584.1 281.4,585.2 281.6,587.2 281.7,587.4 281.8,586.0 282.0,586.0 282.1,585.3 282.3,586.0 282.4,584.4 282.5,585.1 282.7,583.7 282.8,584.0 283.0,582.9 283.1,585.3 283.2,585.1 283.4,585.3 283.5,583.2 283.7,582.0 283.8,581.0 283.9,582.4 284.1,582.6 284.2,580.8 284.4,581.7 284.5,582.8 284.6,579.3 284.8,580.5 284.9,581.2 285.1,577.9 285.2,577.3 285.3,573.5 285.5,570.4 285.6,561.7 285.8,546.4 285.9,517.3 286.0,473.4 286.2,423.3 286.3,386.5 286.5,388.2 286.6,430.5 286.7,471.1 286.9,496.0 287.0,499.2 287.2,477.5 287.3,447.2 287.4,418.2 287.6,427.5 287.7,459.7 287.9,502.1 288.0,533.4 288.1,556.6 288.3,567.0 288.4,575.3 288.6,574.8 288.7,576.1 288.8,578.0 289.0,577.8 289.1,579.4 289.3,580.8 289.4,580.6 289.5,582.8 289.7,580.8 289.8,582.1 290.0,582.3 290.1,583.3 290.2,584.2 290.4,584.9 290.5,584.0 290.7,582.5 290.8,586.6 290.9,583.7 291.1,578.2 291.2,583.7 291.4,584.3 291.5,583.5 291.6,584.4 291.8,584.0 291.9,584.0 292.1,585.9 292.2,582.4 292.3,584.0 292.5,582.6 292.6,584.1 292.8,582.7 292.9,584.4 293.0,579.6 293.2,582.6 293.3,582.4 293.5,584.6 293.6,587.0 293.7,585.1 293.9,583.8 294.0,584.4 294.2,585.5 294.3,585.8 294.4,586.6 294.6,585.4 294.7,583.7 294.9,583.6 295.0,583.7 295.1,585.0 295.3,584.4 295.4,584.8 295.6,584.1 295.7,584.3 295.9,583.8 296.0,585.0 296.1,585.0 296.3,582.6 296.4,582.8 296.6,588.3 296.7,584.4 296.8,584.4 297.0,583.6 297.1,588.4 297.3,587.7 297.4,585.7 297.5,584.9 297.7,586.9 297.8,583.3 298.0,583.5 298.1,584.1 298.2,583.8 298.4,587.0 298.5,585.4 298.7,588.8 298.8,583.6 298.9,583.3 299.1,584.5 299.2,586.7 299.4,585.1 299.5,583.6 299.6,587.1 299.8,584.8 299.9,584.0 300.1,586.4 300.2,586.0 300.3,583.2 300.5,583.9 300.6,582.8 300.8,584.7 300.9,586.7 301.0,585.2 301.2,586.1 301.3,585.5 301.5,584.3 301.6,582.7 301.7,584.8 301.9,582.1 302.0,587.2 302.2,585.4 302.3,585.0 302.4,588.4 302.6,587.6 302.7,585.6 302.9,584.9 303.0,584.3 303.1,584.9 303.3,585.5 303.4,587.2 303.6,585.0 303.7,582.5 303.8,584.3 304.0,586.1 304.1,584.8 304.3,584.3 304.4,583.0 304.5,585.9 304.7,584.2 304.8,584.1 305.0,585.5 305.1,585.1 305.2,585.6 305.4,584.8 305.5,584.5 305.7,586.9 305.8,585.2 305.9,582.5 306.1,584.9 306.2,587.9 306.4,582.6 306.5,585.3 306.6,584.6 306.8,584.0 306.9,585.5 307.1,586.5 307.2,586.0 307.3,584.4 307.5,584.8 307.6,585.2 307.8,581.4 307.9,584.4 308.0,583.2 308.2,581.3 308.3,584.5 308.5,585.3 308.6,585.0 308.7,584.4 308.9,581.7 309.0,582.8 309.2,584.8 309.3,585.4 309.4,583.2 309.6,581.5 309.7,585.3 309.9,581.8 310.0,583.7 310.1,584.2 310.3,584.5 310.4,585.1 310.6,584.7 310.7,581.9 310.8,586.1 311.0,584.4 311.1,583.7 311.3,585.3 311.4,584.1 311.5,585.5 311.7,582.1 311.8,581.8 312.0,584.8 312.1,580.1 312.2,583.7 312.4,584.7 312.5,584.0 312.7,579.8 312.8,583.3 312.9,578.5 313.1,576.2 313.2,572.7 313.4,571.7 313.5,565.2 313.6,562.5 313.8,554.1 313.9,549.9 314.1,539.8 314.2,532.5 314.3,523.9 314.5,514.4 314.6,514.2 314.8,513.9 314.9,516.9 315.0,522.6 315.2,534.3 315.3,537.9 315.5,549.3 315.6,557.8 315.7,560.8 315.9,568.3 316.0,570.2 316.2,572.1 316.3,576.3 316.4,579.8 316.6,579.3 316.7,577.1 316.9,581.0 317.0,578.8 317.1,579.7 317.3,584.3 317.4,581.2 317.6,585.1 317.7,582.2 317.8,582.4 318.0,583.8 318.1,586.1 318.3,584.3 318.4,584.4 318.5,583.2 318.7,584.1 318.8,583.3 319.0,584.7 319.1,586.9 319.2,584.4 319.4,582.1 319.5,585.8 319.7,586.1 319.8,587.6 319.9,581.6 320.1,586.3 320.2,582.9 320.4,584.4 320.5,584.9 320.6,584.6 320.8,581.7 320.9,582.0 321.1,584.0 321.2,585.5 321.3,582.5 321.5,583.7 321.6,584.7 321.8,584.0 321.9,586.1 322.0,583.7 322.2,585.4 322.3,585.3 322.5,586.8 322.6,584.8 322.7,584.3 322.9,587.4 323.0,584.5 323.2,584.3 323.3,582.9 323.4,583.2 323.6,586.0 323.7,583.1 323.9,584.2 324.0,585.4 324.1,586.3 324.3,583.6 324.4,583.7 324.6,585.8 324.7,584.6 324.8,585.7 325.0,586.3 325.1,586.6 325.3,584.1 325.4,584.6 325.5,584.5 325.7,584.7 325.8,585.0 326.0,583.6 326.1,587.8 326.2,583.8 326.4,587.0 326.5,585.5 326.7,585.0 326.8,585.1 326.9,584.4 327.1,586.6 327.2,582.5 327.4,583.4 327.5,584.3 327.6,584.0 327.8,585.8 327.9,588.0 328.1,587.6 328.2,584.4 328.3,589.4 328.5,582.7 328.6,584.5 328.8,586.7 328.9,586.1 329.0,587.8 329.2,585.4 329.3,584.6 329.5,583.3 329.6,587.3 329.7,583.5 329.9,584.9 330.0,585.4 330.2,585.2 330.3,584.6 330.4,582.3 330.6,582.8 330.7,583.9 330.9,586.4 331.0,585.6 331.1,583.8 331.3,584.6 331.4,586.5 331.6,582.3 331.7,581.4 331.8,584.4 332.0,585.8 332.1,585.2 332.3,586.9 332.4,587.1 332.5,584.7 332.7,585.6 332.8,583.7 333.0,580.6 333.1,584.5 333.2,585.2 333.4,584.9 333.5,584.5 333.7,582.8 333.8,584.9 333.9,583.8 334.1,586.8 334.2,586.7 334.4,585.5 334.5,583.7 334.6,586.6 334.8,583.1 334.9,586.6 335.1,584.9 335.2,585.2 335.3,582.6 335.5,586.7 335.6,586.5 335.8,585.6 335.9,584.0 336.1,584.0 336.2,587.1 336.3,586.4 336.5,587.2 336.6,582.4 336.8,584.5 336.9,584.1 337.0,588.6 337.2,584.8 337.3,585.5 337.5,583.6 337.6,587.7 337.7,582.9 337.9,584.0 338.0,584.1 338.2,587.0 338.3,581.9 338.4,584.6 338.6,584.5 338.7,585.0 338.9,585.5 339.0,584.7 339.1,584.7 339.3,583.2 339.4,584.1 339.6,586.2 339.7,584.7 339.8,583.4 340.0,586.0 340.1,585.1 340.3,583.2 340.4,584.3 340.5,585.8 340.7,584.0 340.8,583.5 341.0,583.9 341.1,584.7 341.2,582.0 341.4,587.2 341.5,584.5 341.7,584.0 341.8,586.5 341.9,586.3 342.1,586.2 342.2,584.8 342.4,585.2 342.5,584.2 342.6,583.1 342.8,586.1 342.9,584.9 343.1,584.4 343.2,588.3 343.3,585.5 343.5,587.9 343.6,586.5 343.8,586.7 343.9,583.5 344.0,586.2 344.2,586.3 344.3,584.1 344.5,585.5 344.6,587.5 344.7,583.5 344.9,583.7 345.0,585.8 345.2,588.0 345.3,586.4 345.4,586.8 345.6,582.7 345.7,586.5 345.9,584.1 346.0,583.3 346.1,584.8 346.3,584.8 346.4,583.3 346.6,584.0 346.7,587.8 346.8,583.7 347.0,588.9 347.1,586.4 347.3,584.0 347.4,588.3 347.5,583.7 347.7,581.8 347.8,585.7 348.0,588.3 348.1,582.7 348.2,586.9 348.4,587.4 348.5,587.2 348.7,586.3 348.8,586.5 348.9,582.3 349.1,587.0 349.2,588.2 349.4,588.0 349.5,586.2 349.6,582.8 349.8,587.7 349.9,585.8 350.1,584.3 350.2,586.0 350.3,585.9 350.5,586.1 350.6,584.9 350.8,586.7 350.9,583.1 351.0,588.4 351.2,583.9 351.3,583.7 351.5,585.4 351.6,586.0 351.7,583.5 351.9,587.0 352.0,585.8 352.2,586.9 352.3,585.0 352.4,586.9 352.6,586.5 352.7,584.4 352.9,585.5 353.0,585.0 353.1,582.8 353.3,588.6 353.4,586.3 353.6,585.4 353.7,583.1 353.8,587.2 354.0,585.6 354.1,584.5 354.3,587.2 354.4,586.1 354.5,585.4 354.7,586.3 354.8,584.5 355.0,584.0 355.1,586.0 355.2,584.3 355.4,584.6 355.5,585.4 355.7,586.6 355.8,582.7 355.9,587.1 356.1,585.0 356.2,584.0 356.4,589.4 356.5,586.4 356.6,588.4 356.8,585.7 356.9,584.3 357.1,586.5 357.2,585.3 357.3,584.2 357.5,586.5 357.6,585.8 357.8,587.0 357.9,584.5 358.0,585.8 358.2,583.0 358.3,583.4 358.5,587.5 358.6,585.0 358.7,585.0 358.9,585.1 359.0,584.7 359.2,585.7 359.3,583.8 359.4,584.3 359.6,584.7 359.7,586.2 359.9,583.5 360.0,587.6 360.1,583.7 360.3,584.3 360.4,586.7 360.6,584.6 360.7,581.5 360.8,585.2 361.0,586.3 361.1,585.0 361.3,584.3 361.4,582.4 361.5,585.6 361.7,583.7 361.8,585.0 362.0,583.3 362.1,584.6 362.2,586.9 362.4,584.1 362.5,583.5 362.7,585.6 362.8,588.7 362.9,586.8 363.1,585.2 363.2,584.2 363.4,586.1 363.5,583.7 363.6,586.1 363.8,587.5 363.9,584.6 364.1,586.4 364.2,583.2 364.3,583.5 364.5,585.9 364.6,586.3 364.8,584.9 364.9,583.5 365.0,585.1 365.2,585.5 365.3,583.6 365.5,584.2 365.6,586.4 365.7,586.4 365.9,588.8 366.0,585.7 366.2,585.9 366.3,584.5 366.4,586.4 366.6,586.0 366.7,586.0 366.9,586.2 367.0,585.8 367.1,586.3 367.3,583.4 367.4,585.6 367.6,584.7 367.7,584.8 367.8,587.0 368.0,588.6 368.1,587.2 368.3,585.9 368.4,585.4 368.5,587.6 368.7,584.4 368.8,585.9 369.0,584.1 369.1,586.9 369.2,590.0 369.4,584.5 369.5,584.7 369.7,581.8 369.8,585.3 369.9,584.9 370.1,582.6 370.2,589.9 370.4,587.8 370.5,588.6 370.6,584.9 370.8,585.8 370.9,584.6 371.1,588.0 371.2,586.7 371.3,585.5 371.5,585.8 371.6,586.0 371.8,583.8 371.9,586.7 372.0,586.3 372.2,586.4 372.3,584.5 372.5,587.2 372.6,587.2 372.7,587.1 372.9,588.2 373.0,585.9 373.2,586.6 373.3,588.9 373.4,586.5 373.6,585.6 373.7,583.1 373.9,585.8 374.0,583.4 374.1,585.3 374.3,583.5 374.4,587.6 374.6,587.8 374.7,586.0 374.8,586.1 375.0,585.6 375.1,584.9 375.3,587.5 375.4,585.3 375.6,586.5 375.7,582.4 375.8,585.9 376.0,586.3 376.1,582.7 376.3,588.1 376.4,582.9 376.5,585.0 376.7,586.2 376.8,586.2 377.0,585.5 377.1,585.0 377.2,586.7 377.4,584.9 377.5,584.3 377.7,585.5 377.8,583.0 377.9,587.0 378.1,585.3 378.2,583.9 378.4,584.7 378.5,583.1 378.6,583.9 378.8,587.2 378.9,583.1 379.1,586.4 379.2,583.6 379.3,585.3 379.5,583.6 379.6,589.3 379.8,584.2 379.9,585.6 380.0,582.9 380.2,582.8 380.3,583.1 380.5,585.6 380.6,585.2 380.7,586.7 380.9,585.4 381.0,585.1 381.2,584.5 381.3,583.1 381.4,586.7 381.6,585.0 381.7,584.3 381.9,585.5 382.0,588.0 382.1,586.0 382.3,586.3 382.4,587.2 382.6,585.0 382.7,586.0 382.8,585.8 383.0,585.2 383.1,585.5 383.3,584.5 383.4,584.5 383.5,585.0 383.7,584.7 383.8,584.2 384.0,585.9 384.1,583.7 384.2,583.2 384.4,585.6 384.5,583.2 384.7,584.4 384.8,584.6 384.9,582.5 385.1,587.4 385.2,584.0 385.4,586.4 385.5,585.0 385.6,588.9 385.8,584.0 385.9,583.5 386.1,587.0 386.2,582.8 386.3,586.3 386.5,585.6 386.6,587.2 386.8,584.8 386.9,586.1 387.0,585.8 387.2,585.4 387.3,587.3 387.5,584.8 387.6,586.1 387.7,583.4 387.9,585.7 388.0,584.8 388.2,585.0 388.3,583.7 388.4,583.3 388.6,585.6 388.7,587.2 388.9,585.8 389.0,586.3 389.1,584.7 389.3,586.2 389.4,585.2 389.6,585.4 389.7,585.3 389.8,587.2 390.0,583.9 390.1,586.5 390.3,588.3 390.4,586.9 390.5,586.3 390.7,586.4 390.8,585.1 391.0,586.6 391.1,585.3 391.2,584.2 391.4,587.0 391.5,586.7 391.7,583.3 391.8,584.8 391.9,584.1 392.1,585.8 392.2,585.5 392.4,585.7 392.5,586.8 392.6,583.7 392.8,587.3 392.9,586.6 393.1,587.3 393.2,582.5 393.3,586.9 393.5,583.6 393.6,587.6 393.8,582.2 393.9,581.4 394.0,585.5 394.2,583.0 394.3,587.5 394.5,586.1 394.6,583.4 394.7,585.3 394.9,586.2 395.0,585.3 395.2,586.3 395.3,586.5 395.4,583.9 395.6,588.4 395.7,586.3 395.9,585.4 396.0,583.9 396.1,585.1 396.3,586.1 396.4,589.0 396.6,580.7 396.7,586.6 396.8,584.3 397.0,587.4 397.1,583.9 397.3,587.6 397.4,586.3 397.5,585.2 397.7,587.3 397.8,584.0 398.0,585.2 398.1,583.4 398.2,583.9 398.4,585.9 398.5,587.1 398.7,585.8 398.8,583.5 398.9,587.8 399.1,583.5 399.2,587.7 399.4,584.3 399.5,584.4 399.6,586.6 399.8,587.5 399.9,585.2 400.1,584.3 400.2,587.2 400.3,584.4 400.5,584.7 400.6,587.1 400.8,588.1 400.9,585.1 401.0,585.6 401.2,587.4 401.3,586.5 401.5,581.6 401.6,584.0 401.7,584.1 401.9,586.2 402.0,584.9 402.2,583.1 402.3,586.4 402.4,585.8 402.6,585.4 402.7,585.6 402.9,583.8 403.0,585.9 403.1,584.4 403.3,584.2 403.4,584.1 403.6,584.1 403.7,586.7 403.8,586.5 404.0,587.2 404.1,583.9 404.3,583.2 404.4,583.2 404.5,581.4 404.7,584.1 404.8,581.7 405.0,583.0 405.1,581.7 405.2,584.0 405.4,582.6 405.5,583.4 405.7,583.3 405.8,584.3 405.9,578.1 406.1,577.6 406.2,571.3 406.4,572.8 406.5,568.0 406.6,564.9 406.8,554.7 406.9,549.8 407.1,537.1 407.2,528.8 407.3,529.9 407.5,525.0 407.6,527.0 407.8,530.1 407.9,535.9 408.0,537.2 408.2,536.6 408.3,535.6 408.5,527.7 408.6,524.3 408.7,524.9 408.9,533.8 409.0,550.4 409.2,558.0 409.3,570.7 409.4,576.3 409.6,576.6 409.7,581.2 409.9,582.5 410.0,580.2 410.1,582.5 410.3,583.4 410.4,584.0 410.6,584.6 410.7,582.9 410.8,583.8 411.0,584.7 411.1,580.4 411.3,582.9 411.4,586.1 411.5,583.6 411.7,585.4 411.8,585.2 412.0,581.3 412.1,582.3 412.2,584.0 412.4,582.7 412.5,587.0 412.7,583.5 412.8,583.4 412.9,585.9 413.1,587.5 413.2,583.8 413.4,584.3 413.5,585.0 413.6,584.7 413.8,584.7 413.9,583.4 414.1,582.5 414.2,585.7 414.3,582.8 414.5,585.7 414.6,586.1 414.8,585.4 414.9,584.0 415.0,584.2 415.2,585.1 415.3,586.8 415.5,583.5 415.6,585.6 415.8,585.2 415.9,586.4 416.0,582.3 416.2,585.8 416.3,587.4 416.5,583.8 416.6,585.2 416.7,583.8 416.9,583.8 417.0,588.0 417.2,585.6 417.3,581.4 417.4,584.4 417.6,584.4 417.7,583.5 417.9,583.2 418.0,585.1 418.1,583.7 418.3,583.9 418.4,584.8 418.6,585.2 418.7,583.9 418.8,584.6 419.0,586.7 419.1,587.3 419.3,585.3 419.4,585.3 419.5,582.9 419.7,585.2 419.8,585.3 420.0,585.9 420.1,584.9 420.2,584.6 420.4,583.5 420.5,586.0 420.7,584.4 420.8,583.8 420.9,588.0 421.1,584.8 421.2,586.7 421.4,586.1 421.5,585.7 421.6,585.8 421.8,586.7 421.9,585.0 422.1,584.4 422.2,585.7 422.3,587.0 422.5,586.0 422.6,582.6 422.8,584.3 422.9,586.1 423.0,587.0 423.2,584.9 423.3,585.0 423.5,581.7 423.6,587.8 423.7,584.6 423.9,583.7 424.0,583.5 424.2,587.6 424.3,584.6 424.4,585.1 424.6,584.7 424.7,584.6 424.9,586.4 425.0,584.5 425.1,586.7 425.3,587.7 425.4,586.3 425.6,585.0 425.7,582.6 425.8,586.0 426.0,582.9 426.1,586.7 426.3,586.4 426.4,587.7 426.5,585.5 426.7,585.4 426.8,584.0 427.0,586.0 427.1,585.1 427.2,587.4 427.4,585.8 427.5,582.6 427.7,587.1 427.8,585.4 427.9,584.0 428.1,584.4 428.2,585.7 428.4,586.3 428.5,587.4 428.6,583.4 428.8,588.1 428.9,586.0 429.1,587.4 429.2,586.4 429.3,587.6 429.5,585.7 429.6,584.2 429.8,586.5 429.9,585.6 430.0,585.3 430.2,586.2 430.3,582.7 430.5,587.0 430.6,586.4 430.7,584.0 430.9,585.2 431.0,585.7 431.2,583.6 431.3,588.9 431.4,584.9 431.6,583.3 431.7,587.4 431.9,580.8 432.0,584.8 432.1,584.7 432.3,584.5 432.4,585.2 432.6,581.7 432.7,587.3 432.8,586.8 433.0,584.4 433.1,584.3 433.3,587.0 433.4,583.5 433.5,587.3 433.7,586.4 433.8,586.1 434.0,585.2 434.1,585.7 434.2,584.9 434.4,584.3 434.5,584.2 434.7,586.9 434.8,586.3 434.9,583.0 435.1,584.3 435.2,584.2 435.4,587.2 435.5,591.0" fill="none" stroke="#22c322" stroke-width="1.15" stroke-linejoin="round"/>
<rect x="155.5" y="365.5" width="280.0" height="249.0" fill="none" stroke="#2a2a2a" stroke-width="0.95"/>
<line x1="150.0" y1="598.4" x2="155.5" y2="598.4" stroke="#000" stroke-width="1"/>
<text x="146.5" y="602.8" font-size="13" font-weight="bold" text-anchor="end" fill="#111">0</text>
<line x1="150.0" y1="567.2" x2="155.5" y2="567.2" stroke="#000" stroke-width="1"/>
<text x="146.5" y="571.6" font-size="13" font-weight="bold" text-anchor="end" fill="#111">1000</text>
<line x1="150.0" y1="536.1" x2="155.5" y2="536.1" stroke="#000" stroke-width="1"/>
<text x="146.5" y="540.5" font-size="13" font-weight="bold" text-anchor="end" fill="#111">2000</text>
<line x1="150.0" y1="504.9" x2="155.5" y2="504.9" stroke="#000" stroke-width="1"/>
<text x="146.5" y="509.3" font-size="13" font-weight="bold" text-anchor="end" fill="#111">3000</text>
<line x1="150.0" y1="473.8" x2="155.5" y2="473.8" stroke="#000" stroke-width="1"/>
<text x="146.5" y="478.2" font-size="13" font-weight="bold" text-anchor="end" fill="#111">4000</text>
<line x1="150.0" y1="442.6" x2="155.5" y2="442.6" stroke="#000" stroke-width="1"/>
<text x="146.5" y="447.0" font-size="13" font-weight="bold" text-anchor="end" fill="#111">5000</text>
<line x1="150.0" y1="411.5" x2="155.5" y2="411.5" stroke="#000" stroke-width="1"/>
<text x="146.5" y="415.9" font-size="13" font-weight="bold" text-anchor="end" fill="#111">6000</text>
<line x1="150.0" y1="380.3" x2="155.5" y2="380.3" stroke="#000" stroke-width="1"/>
<text x="146.5" y="384.7" font-size="13" font-weight="bold" text-anchor="end" fill="#111">7000</text>
<line x1="152.5" y1="582.8" x2="155.5" y2="582.8" stroke="#000" stroke-width="1"/>
<line x1="152.5" y1="551.7" x2="155.5" y2="551.7" stroke="#000" stroke-width="1"/>
<line x1="152.5" y1="520.5" x2="155.5" y2="520.5" stroke="#000" stroke-width="1"/>
<line x1="152.5" y1="489.4" x2="155.5" y2="489.4" stroke="#000" stroke-width="1"/>
<line x1="152.5" y1="458.2" x2="155.5" y2="458.2" stroke="#000" stroke-width="1"/>
<line x1="152.5" y1="427.1" x2="155.5" y2="427.1" stroke="#000" stroke-width="1"/>
<line x1="152.5" y1="395.9" x2="155.5" y2="395.9" stroke="#000" stroke-width="1"/>
<line x1="155.5" y1="614.5" x2="155.5" y2="617.5" stroke="#000" stroke-width="1"/>
<line x1="195.5" y1="614.5" x2="195.5" y2="620.0" stroke="#000" stroke-width="1"/>
<text x="195.5" y="633.2" font-size="13" font-weight="bold" text-anchor="middle" fill="#111">20</text>
<line x1="195.5" y1="365.5" x2="195.5" y2="369.5" stroke="#000" stroke-width="1"/>
<line x1="235.5" y1="614.5" x2="235.5" y2="617.5" stroke="#000" stroke-width="1"/>
<line x1="235.5" y1="365.5" x2="235.5" y2="368.0" stroke="#000" stroke-width="1"/>
<line x1="275.5" y1="614.5" x2="275.5" y2="620.0" stroke="#000" stroke-width="1"/>
<text x="275.5" y="633.2" font-size="13" font-weight="bold" text-anchor="middle" fill="#111">40</text>
<line x1="275.5" y1="365.5" x2="275.5" y2="369.5" stroke="#000" stroke-width="1"/>
<line x1="315.5" y1="614.5" x2="315.5" y2="617.5" stroke="#000" stroke-width="1"/>
<line x1="315.5" y1="365.5" x2="315.5" y2="368.0" stroke="#000" stroke-width="1"/>
<line x1="355.5" y1="614.5" x2="355.5" y2="620.0" stroke="#000" stroke-width="1"/>
<text x="355.5" y="633.2" font-size="13" font-weight="bold" text-anchor="middle" fill="#111">60</text>
<line x1="355.5" y1="365.5" x2="355.5" y2="369.5" stroke="#000" stroke-width="1"/>
<line x1="395.5" y1="614.5" x2="395.5" y2="617.5" stroke="#000" stroke-width="1"/>
<line x1="395.5" y1="365.5" x2="395.5" y2="368.0" stroke="#000" stroke-width="1"/>
<line x1="435.5" y1="614.5" x2="435.5" y2="620.0" stroke="#000" stroke-width="1"/>
<text x="435.5" y="633.2" font-size="13" font-weight="bold" text-anchor="middle" fill="#111">80</text>
<line x1="435.5" y1="365.5" x2="435.5" y2="369.5" stroke="#000" stroke-width="1"/>
<text transform="translate(106.0,484.8) rotate(-90)" font-size="15" text-anchor="middle" fill="#222" letter-spacing="0.2">Intensity (a.u)</text>
<text x="296.0" y="658.0" font-size="15.2" text-anchor="middle" fill="#222" letter-spacing="0.15">2Theta (Degree)</text>
<rect x="347.20000000000005" y="386.2" width="76" height="21" fill="#fff" stroke="#222" stroke-width="0.9"/>
<line x1="351.20000000000005" y1="396.7" x2="382.20000000000005" y2="396.7" stroke="#22c322" stroke-width="1" opacity="0.75"/>
<text x="387.20000000000005" y="401.9" font-size="15" fill="#111">600C</text>
</svg>
<svg class="a" style="left:0;top:0" width="893" height="720" viewBox="0 0 893 720">
<polyline points="501.5,595.8 501.6,594.1 501.8,594.8 501.9,596.5 502.1,599.0 502.2,593.6 502.3,593.3 502.5,597.3 502.6,592.4 502.8,595.6 502.9,590.8 503.0,593.9 503.2,595.3 503.3,592.8 503.5,594.5 503.6,594.5 503.7,594.5 503.9,594.8 504.0,593.6 504.2,593.3 504.3,593.9 504.4,591.6 504.6,596.5 504.7,595.1 504.9,593.1 505.0,596.2 505.1,591.9 505.3,593.1 505.4,594.5 505.6,593.4 505.7,595.1 505.8,596.4 506.0,592.7 506.1,592.6 506.3,593.8 506.4,594.0 506.6,597.3 506.7,595.2 506.8,594.6 507.0,593.5 507.1,591.7 507.3,594.6 507.4,595.0 507.5,592.2 507.7,593.9 507.8,595.8 508.0,591.7 508.1,594.9 508.2,594.4 508.4,595.1 508.5,592.9 508.7,591.8 508.8,594.0 508.9,592.8 509.1,594.1 509.2,589.7 509.4,591.0 509.5,594.2 509.6,592.4 509.8,591.7 509.9,592.5 510.1,594.3 510.2,593.4 510.3,591.9 510.5,592.4 510.6,594.4 510.8,592.3 510.9,594.5 511.0,596.2 511.2,592.6 511.3,591.4 511.5,592.1 511.6,590.5 511.7,590.0 511.9,592.2 512.0,593.7 512.2,592.7 512.3,594.9 512.4,592.7 512.6,592.7 512.7,592.3 512.9,590.8 513.0,595.8 513.1,591.3 513.3,593.3 513.4,591.2 513.6,592.1 513.7,593.9 513.8,590.9 514.0,593.4 514.1,591.4 514.3,593.1 514.4,592.9 514.5,592.0 514.7,589.2 514.8,591.0 515.0,592.1 515.1,589.4 515.3,592.0 515.4,592.4 515.5,593.5 515.7,591.7 515.8,591.7 516.0,592.9 516.1,594.8 516.2,592.0 516.4,591.6 516.5,592.3 516.7,593.2 516.8,593.3 516.9,592.4 517.1,589.5 517.2,591.3 517.4,594.1 517.5,590.5 517.6,592.2 517.8,587.8 517.9,591.9 518.1,591.5 518.2,591.1 518.3,590.9 518.5,591.2 518.6,591.2 518.8,591.6 518.9,592.1 519.0,591.8 519.2,593.0 519.3,592.0 519.5,592.1 519.6,591.8 519.7,591.7 519.9,591.2 520.0,590.3 520.2,591.4 520.3,590.8 520.4,590.5 520.6,591.4 520.7,591.1 520.9,590.3 521.0,593.4 521.1,589.7 521.3,591.5 521.4,596.4 521.6,589.8 521.7,592.5 521.8,589.2 522.0,592.1 522.1,590.9 522.3,589.5 522.4,591.7 522.5,592.0 522.7,590.6 522.8,588.3 523.0,588.7 523.1,588.2 523.2,589.7 523.4,589.5 523.5,588.6 523.7,589.4 523.8,591.5 524.0,589.0 524.1,590.9 524.2,591.4 524.4,589.9 524.5,590.2 524.7,588.7 524.8,589.6 524.9,590.6 525.1,590.0 525.2,590.8 525.4,590.4 525.5,587.9 525.6,589.2 525.8,590.4 525.9,590.3 526.1,590.7 526.2,590.0 526.3,592.0 526.5,588.7 526.6,590.1 526.8,588.5 526.9,588.1 527.0,589.1 527.2,591.1 527.3,591.4 527.5,588.2 527.6,588.1 527.7,591.6 527.9,590.9 528.0,587.7 528.2,589.2 528.3,586.1 528.4,588.5 528.6,587.8 528.7,589.3 528.9,589.9 529.0,591.4 529.1,593.3 529.3,587.4 529.4,587.8 529.6,589.8 529.7,587.4 529.8,591.3 530.0,586.5 530.1,588.2 530.3,586.3 530.4,591.5 530.5,586.6 530.7,587.4 530.8,588.3 531.0,590.1 531.1,588.2 531.2,588.3 531.4,589.6 531.5,590.8 531.7,590.3 531.8,589.4 531.9,586.8 532.1,586.7 532.2,585.9 532.4,587.7 532.5,590.7 532.7,589.6 532.8,590.2 532.9,588.8 533.1,586.2 533.2,588.6 533.4,589.0 533.5,587.4 533.6,587.1 533.8,586.7 533.9,589.6 534.1,589.5 534.2,588.8 534.3,586.9 534.5,587.8 534.6,589.5 534.8,585.0 534.9,588.8 535.0,588.1 535.2,588.1 535.3,589.2 535.5,587.9 535.6,587.7 535.7,587.4 535.9,587.3 536.0,588.6 536.2,589.2 536.3,586.0 536.4,588.0 536.6,585.9 536.7,586.9 536.9,583.4 537.0,587.7 537.1,590.1 537.3,588.0 537.4,585.6 537.6,584.5 537.7,584.7 537.8,586.3 538.0,584.9 538.1,588.9 538.3,588.2 538.4,588.7 538.5,586.3 538.7,585.1 538.8,587.1 539.0,586.4 539.1,587.8 539.2,587.6 539.4,586.8 539.5,584.6 539.7,586.2 539.8,586.1 539.9,585.2 540.1,585.8 540.2,587.9 540.4,584.1 540.5,587.0 540.6,586.7 540.8,586.8 540.9,585.7 541.1,587.0 541.2,586.0 541.4,583.9 541.5,587.8 541.6,589.4 541.8,584.5 541.9,586.0 542.1,585.4 542.2,585.3 542.3,586.9 542.5,586.0 542.6,589.0 542.8,586.4 542.9,586.1 543.0,588.0 543.2,587.2 543.3,586.3 543.5,585.6 543.6,586.3 543.7,583.9 543.9,584.8 544.0,584.7 544.2,588.6 544.3,586.4 544.4,585.4 544.6,586.3 544.7,585.3 544.9,586.4 545.0,586.7 545.1,585.4 545.3,585.1 545.4,585.5 545.6,584.9 545.7,583.0 545.8,583.5 546.0,582.6 546.1,582.5 546.3,582.7 546.4,582.7 546.5,578.6 546.7,580.4 546.8,578.5 547.0,579.9 547.1,580.3 547.2,579.3 547.4,577.3 547.5,578.4 547.7,575.4 547.8,577.5 547.9,578.2 548.1,575.7 548.2,579.6 548.4,580.6 548.5,576.6 548.6,580.9 548.8,582.1 548.9,583.6 549.1,581.5 549.2,582.0 549.3,588.0 549.5,584.6 549.6,584.3 549.8,584.0 549.9,587.1 550.1,585.2 550.2,582.6 550.3,583.5 550.5,586.9 550.6,584.9 550.8,586.6 550.9,584.2 551.0,590.0 551.2,584.1 551.3,585.1 551.5,583.9 551.6,587.4 551.7,586.0 551.9,587.3 552.0,584.8 552.2,585.2 552.3,582.6 552.4,584.4 552.6,589.0 552.7,585.1 552.9,585.4 553.0,584.0 553.1,584.5 553.3,586.8 553.4,586.1 553.6,583.9 553.7,586.8 553.8,585.4 554.0,587.3 554.1,583.9 554.3,583.9 554.4,585.6 554.5,587.2 554.7,586.5 554.8,586.0 555.0,586.2 555.1,585.3 555.2,588.0 555.4,587.7 555.5,587.2 555.7,584.4 555.8,587.6 555.9,585.6 556.1,584.5 556.2,588.1 556.4,588.8 556.5,588.7 556.6,585.1 556.8,585.3 556.9,586.2 557.1,587.5 557.2,585.8 557.3,588.3 557.5,585.2 557.6,585.9 557.8,585.9 557.9,583.7 558.0,587.6 558.2,587.7 558.3,585.3 558.5,584.2 558.6,587.4 558.8,587.6 558.9,586.2 559.0,585.0 559.2,587.1 559.3,584.5 559.5,582.7 559.6,586.1 559.7,586.8 559.9,582.6 560.0,588.0 560.2,584.2 560.3,584.4 560.4,588.3 560.6,584.9 560.7,583.7 560.9,586.6 561.0,589.6 561.1,587.2 561.3,583.0 561.4,587.6 561.6,584.4 561.7,588.0 561.8,586.8 562.0,587.2 562.1,586.2 562.3,585.2 562.4,585.9 562.5,587.4 562.7,586.1 562.8,586.3 563.0,586.6 563.1,586.9 563.2,587.0 563.4,585.6 563.5,582.7 563.7,585.9 563.8,585.6 563.9,587.3 564.1,586.9 564.2,583.8 564.4,586.5 564.5,585.3 564.6,584.7 564.8,586.9 564.9,584.3 565.1,584.8 565.2,585.1 565.3,587.3 565.5,585.8 565.6,589.0 565.8,585.8 565.9,585.8 566.0,586.7 566.2,585.4 566.3,588.2 566.5,587.1 566.6,588.3 566.7,585.9 566.9,586.8 567.0,584.5 567.2,587.3 567.3,585.3 567.5,586.1 567.6,585.6 567.7,584.9 567.9,583.7 568.0,584.0 568.2,588.2 568.3,585.3 568.4,587.7 568.6,585.6 568.7,587.5 568.9,584.6 569.0,584.9 569.1,586.0 569.3,587.7 569.4,588.6 569.6,588.3 569.7,586.6 569.8,585.2 570.0,584.7 570.1,584.6 570.3,587.6 570.4,586.3 570.5,584.8 570.7,585.3 570.8,586.4 571.0,588.1 571.1,583.4 571.2,586.3 571.4,588.7 571.5,585.6 571.7,585.8 571.8,586.5 571.9,586.3 572.1,588.1 572.2,584.2 572.4,586.4 572.5,589.2 572.6,586.6 572.8,590.3 572.9,585.9 573.1,587.4 573.2,585.7 573.3,585.0 573.5,586.2 573.6,582.4 573.8,585.8 573.9,585.1 574.0,586.0 574.2,586.4 574.3,587.2 574.5,584.3 574.6,584.9 574.7,583.6 574.9,586.9 575.0,587.1 575.2,586.3 575.3,585.9 575.4,586.2 575.6,588.9 575.7,586.2 575.9,585.6 576.0,585.3 576.2,586.5 576.3,586.0 576.4,584.2 576.6,584.0 576.7,585.8 576.9,586.0 577.0,585.9 577.1,584.6 577.3,585.7 577.4,585.7 577.6,583.8 577.7,586.8 577.8,587.5 578.0,586.1 578.1,583.2 578.3,585.1 578.4,588.3 578.5,584.6 578.7,585.6 578.8,585.5 579.0,588.3 579.1,587.0 579.2,586.8 579.4,584.7 579.5,587.3 579.7,587.3 579.8,588.3 579.9,584.8 580.1,586.6 580.2,584.8 580.4,586.1 580.5,585.0 580.6,587.2 580.8,585.1 580.9,586.8 581.1,587.1 581.2,584.4 581.3,587.8 581.5,585.7 581.6,585.4 581.8,585.5 581.9,585.8 582.0,584.4 582.2,586.9 582.3,583.6 582.5,583.7 582.6,585.5 582.7,586.0 582.9,587.7 583.0,587.3 583.2,587.0 583.3,585.6 583.4,583.5 583.6,588.3 583.7,584.5 583.9,585.6 584.0,585.4 584.1,585.6 584.3,586.9 584.4,586.4 584.6,585.7 584.7,584.1 584.9,586.3 585.0,583.8 585.1,584.1 585.3,586.2 585.4,585.3 585.6,583.9 585.7,587.7 585.8,587.1 586.0,584.6 586.1,584.7 586.3,586.9 586.4,587.4 586.5,585.1 586.7,583.9 586.8,586.6 587.0,587.3 587.1,584.1 587.2,584.6 587.4,587.8 587.5,587.3 587.7,586.3 587.8,584.4 587.9,584.8 588.1,585.9 588.2,588.8 588.4,582.1 588.5,587.1 588.6,583.3 588.8,583.5 588.9,585.0 589.1,585.3 589.2,587.1 589.3,587.7 589.5,587.4 589.6,588.1 589.8,586.2 589.9,588.0 590.0,583.8 590.2,582.1 590.3,589.7 590.5,588.1 590.6,585.0 590.7,585.6 590.9,586.4 591.0,586.2 591.2,585.3 591.3,586.7 591.4,585.0 591.6,583.9 591.7,583.9 591.9,583.1 592.0,585.5 592.1,585.1 592.3,588.5 592.4,586.3 592.6,587.4 592.7,584.0 592.8,582.9 593.0,586.5 593.1,586.5 593.3,586.8 593.4,586.1 593.6,587.3 593.7,584.5 593.8,586.4 594.0,583.4 594.1,584.6 594.3,586.5 594.4,586.9 594.5,584.5 594.7,586.5 594.8,588.6 595.0,586.3 595.1,587.3 595.2,582.7 595.4,586.0 595.5,586.8 595.7,589.4 595.8,584.1 595.9,585.1 596.1,586.0 596.2,586.3 596.4,585.7 596.5,584.7 596.6,585.6 596.8,586.7 596.9,585.6 597.1,589.4 597.2,586.8 597.3,586.5 597.5,587.1 597.6,586.3 597.8,584.8 597.9,586.1 598.0,588.1 598.2,585.4 598.3,584.5 598.5,584.4 598.6,584.9 598.7,584.2 598.9,586.0 599.0,590.0 599.2,586.6 599.3,587.8 599.4,585.6 599.6,584.8 599.7,586.8 599.9,584.4 600.0,587.8 600.1,584.9 600.3,587.3 600.4,586.9 600.6,587.6 600.7,585.3 600.8,583.3 601.0,586.6 601.1,586.2 601.3,584.8 601.4,586.8 601.5,585.3 601.7,585.7 601.8,586.6 602.0,587.1 602.1,583.3 602.2,584.9 602.4,585.8 602.5,582.6 602.7,584.0 602.8,585.6 603.0,585.4 603.1,583.6 603.2,584.2 603.4,582.5 603.5,584.8 603.7,585.1 603.8,583.2 603.9,581.9 604.1,583.8 604.2,579.4 604.4,580.1 604.5,583.8 604.6,585.3 604.8,583.8 604.9,585.1 605.1,584.7 605.2,584.1 605.3,584.8 605.5,587.9 605.6,582.3 605.8,586.5 605.9,585.6 606.0,584.4 606.2,585.3 606.3,585.3 606.5,584.8 606.6,587.3 606.7,585.0 606.9,584.2 607.0,586.0 607.2,583.8 607.3,583.3 607.4,586.0 607.6,584.2 607.7,585.3 607.9,583.9 608.0,586.1 608.1,588.0 608.3,584.3 608.4,584.7 608.6,585.1 608.7,587.1 608.8,586.7 609.0,585.2 609.1,585.7 609.3,587.1 609.4,586.0 609.5,585.0 609.7,587.0 609.8,586.1 610.0,587.0 610.1,584.5 610.2,586.0 610.4,586.0 610.5,584.4 610.7,585.3 610.8,586.6 610.9,584.2 611.1,588.1 611.2,587.8 611.4,585.4 611.5,586.2 611.7,584.2 611.8,585.6 611.9,585.7 612.1,584.4 612.2,586.7 612.4,588.1 612.5,584.8 612.6,587.0 612.8,585.2 612.9,587.2 613.1,586.2 613.2,586.6 613.3,587.1 613.5,586.9 613.6,585.2 613.8,586.1 613.9,585.0 614.0,587.2 614.2,587.1 614.3,587.8 614.5,587.4 614.6,586.1 614.7,586.2 614.9,585.3 615.0,584.4 615.2,585.1 615.3,586.3 615.4,587.3 615.6,583.7 615.7,585.1 615.9,590.2 616.0,585.7 616.1,584.5 616.3,586.7 616.4,585.3 616.6,586.2 616.7,585.4 616.8,586.1 617.0,585.2 617.1,585.9 617.3,585.2 617.4,586.7 617.5,585.2 617.7,586.6 617.8,588.7 618.0,585.8 618.1,585.8 618.2,587.4 618.4,584.0 618.5,586.6 618.7,584.9 618.8,586.5 618.9,585.7 619.1,585.3 619.2,584.5 619.4,586.9 619.5,587.8 619.6,583.5 619.8,585.9 619.9,582.5 620.1,586.1 620.2,588.2 620.4,585.4 620.5,584.8 620.6,585.4 620.8,586.5 620.9,585.3 621.1,587.8 621.2,588.0 621.3,586.1 621.5,584.8 621.6,589.3 621.8,585.4 621.9,586.4 622.0,587.2 622.2,585.6 622.3,586.0 622.5,585.7 622.6,584.8 622.7,585.1 622.9,584.2 623.0,584.3 623.2,586.8 623.3,585.9 623.4,588.9 623.6,586.6 623.7,588.1 623.9,586.9 624.0,586.1 624.1,585.2 624.3,586.6 624.4,582.3 624.6,585.7 624.7,588.1 624.8,583.0 625.0,586.1 625.1,586.3 625.3,584.6 625.4,586.7 625.5,583.6 625.7,582.8 625.8,583.6 626.0,585.4 626.1,586.3 626.2,584.5 626.4,584.1 626.5,584.8 626.7,585.1 626.8,583.3 626.9,585.4 627.1,587.2 627.2,587.5 627.4,584.9 627.5,583.0 627.6,585.2 627.8,585.7 627.9,586.3 628.1,583.6 628.2,587.5 628.3,586.3 628.5,583.0 628.6,585.6 628.8,585.3 628.9,583.0 629.1,583.1 629.2,584.4 629.3,582.9 629.5,587.9 629.6,586.4 629.8,584.7 629.9,586.2 630.0,585.7 630.2,585.9 630.3,584.2 630.5,585.5 630.6,582.6 630.7,583.9 630.9,581.8 631.0,585.9 631.2,586.5 631.3,583.2 631.4,582.8 631.6,581.3 631.7,580.7 631.9,582.1 632.0,578.9 632.1,579.9 632.3,578.8 632.4,575.1 632.6,572.6 632.7,568.2 632.8,556.4 633.0,528.8 633.1,492.2 633.3,449.3 633.4,436.6 633.5,453.6 633.7,457.2 633.8,439.3 634.0,409.7 634.1,392.6 634.2,404.0 634.4,439.3 634.5,484.7 634.7,521.2 634.8,546.0 634.9,561.7 635.1,569.5 635.2,573.5 635.4,575.3 635.5,577.2 635.6,578.4 635.8,583.4 635.9,581.0 636.1,578.3 636.2,578.5 636.3,577.4 636.5,580.9 636.6,579.8 636.8,578.2 636.9,575.0 637.0,575.2 637.2,573.0 637.3,571.8 637.5,570.4 637.6,570.5 637.8,568.2 637.9,574.5 638.0,571.2 638.2,573.7 638.3,574.3 638.5,574.9 638.6,578.7 638.7,578.0 638.9,581.0 639.0,581.3 639.2,582.9 639.3,582.8 639.4,581.8 639.6,585.5 639.7,585.8 639.9,586.1 640.0,587.0 640.1,586.7 640.3,583.1 640.4,585.3 640.6,584.1 640.7,585.0 640.8,582.3 641.0,584.7 641.1,585.0 641.3,582.3 641.4,587.2 641.5,587.0 641.7,586.6 641.8,587.6 642.0,585.6 642.1,585.1 642.2,583.4 642.4,589.2 642.5,584.1 642.7,583.3 642.8,586.9 642.9,585.0 643.1,583.1 643.2,586.9 643.4,585.4 643.5,585.4 643.6,586.3 643.8,585.7 643.9,586.8 644.1,587.8 644.2,584.7 644.3,585.9 644.5,584.4 644.6,586.2 644.8,586.8 644.9,587.3 645.0,587.5 645.2,586.8 645.3,585.3 645.5,584.8 645.6,585.1 645.7,586.8 645.9,585.4 646.0,583.4 646.2,586.0 646.3,585.9 646.5,584.9 646.6,584.1 646.7,587.5 646.9,585.6 647.0,584.7 647.2,587.1 647.3,585.2 647.4,585.7 647.6,585.7 647.7,585.7 647.9,585.4 648.0,587.0 648.1,587.8 648.3,585.0 648.4,584.2 648.6,582.9 648.7,586.3 648.8,585.1 649.0,586.0 649.1,586.9 649.3,585.3 649.4,586.2 649.5,585.9 649.7,586.9 649.8,587.5 650.0,586.5 650.1,583.9 650.2,585.1 650.4,584.6 650.5,586.5 650.7,587.8 650.8,584.9 650.9,586.5 651.1,586.9 651.2,587.2 651.4,584.5 651.5,583.9 651.6,583.8 651.8,582.7 651.9,586.8 652.1,586.7 652.2,587.1 652.3,583.1 652.5,587.5 652.6,585.5 652.8,584.5 652.9,588.8 653.0,584.3 653.2,584.0 653.3,585.5 653.5,587.2 653.6,584.2 653.7,585.0 653.9,583.9 654.0,586.4 654.2,588.6 654.3,585.7 654.4,584.6 654.6,588.0 654.7,587.0 654.9,587.6 655.0,584.6 655.2,588.8 655.3,583.8 655.4,587.3 655.6,584.5 655.7,586.2 655.9,586.7 656.0,586.3 656.1,585.0 656.3,586.5 656.4,585.4 656.6,586.5 656.7,585.4 656.8,585.6 657.0,583.8 657.1,587.8 657.3,584.9 657.4,584.9 657.5,586.5 657.7,586.9 657.8,585.1 658.0,583.9 658.1,584.7 658.2,584.1 658.4,587.8 658.5,582.5 658.7,583.5 658.8,585.8 658.9,586.7 659.1,584.1 659.2,583.6 659.4,584.7 659.5,585.0 659.6,583.5 659.8,583.6 659.9,582.3 660.1,581.5 660.2,583.3 660.3,581.2 660.5,583.1 660.6,578.7 660.8,581.7 660.9,578.3 661.0,574.8 661.2,568.3 661.3,565.0 661.5,554.6 661.6,546.5 661.7,535.8 661.9,524.7 662.0,520.3 662.2,515.7 662.3,512.9 662.4,518.3 662.6,524.8 662.7,522.1 662.9,523.5 663.0,527.4 663.1,538.9 663.3,555.7 663.4,564.6 663.6,572.5 663.7,579.2 663.9,581.6 664.0,580.3 664.1,580.4 664.3,584.1 664.4,581.5 664.6,582.6 664.7,581.5 664.8,582.1 665.0,585.7 665.1,581.3 665.3,586.0 665.4,585.4 665.5,586.3 665.7,585.7 665.8,585.2 666.0,585.5 666.1,585.5 666.2,585.8 666.4,587.0 666.5,583.8 666.7,584.7 666.8,583.2 666.9,585.9 667.1,585.9 667.2,585.6 667.4,583.2 667.5,585.6 667.6,584.8 667.8,584.5 667.9,583.9 668.1,588.0 668.2,585.0 668.3,586.8 668.5,585.0 668.6,585.3 668.8,586.3 668.9,586.5 669.0,584.1 669.2,587.0 669.3,584.3 669.5,584.1 669.6,585.8 669.7,586.0 669.9,586.7 670.0,588.0 670.2,585.7 670.3,586.5 670.4,582.5 670.6,587.0 670.7,585.3 670.9,584.7 671.0,583.3 671.1,584.6 671.3,585.2 671.4,583.9 671.6,584.2 671.7,585.8 671.8,586.1 672.0,587.8 672.1,587.3 672.3,589.7 672.4,587.5 672.6,587.0 672.7,585.4 672.8,588.6 673.0,584.9 673.1,584.2 673.3,584.7 673.4,585.6 673.5,584.2 673.7,586.0 673.8,583.4 674.0,587.5 674.1,585.5 674.2,586.9 674.4,583.8 674.5,584.3 674.7,583.8 674.8,585.7 674.9,584.7 675.1,585.8 675.2,588.0 675.4,584.9 675.5,585.8 675.6,586.7 675.8,588.5 675.9,585.1 676.1,586.5 676.2,588.5 676.3,587.4 676.5,585.8 676.6,585.9 676.8,585.4 676.9,583.5 677.0,586.9 677.2,587.8 677.3,587.6 677.5,588.7 677.6,585.2 677.7,585.1 677.9,582.4 678.0,585.4 678.2,585.2 678.3,587.4 678.4,587.3 678.6,584.5 678.7,584.5 678.9,585.8 679.0,587.2 679.1,585.3 679.3,585.4 679.4,586.9 679.6,585.1 679.7,587.2 679.8,587.5 680.0,587.1 680.1,586.8 680.3,585.4 680.4,585.2 680.5,583.3 680.7,584.8 680.8,588.8 681.0,586.5 681.1,587.3 681.3,584.7 681.4,584.6 681.5,585.7 681.7,587.7 681.8,586.6 682.0,586.0 682.1,584.7 682.2,583.2 682.4,587.5 682.5,586.0 682.7,588.5 682.8,589.0 682.9,584.0 683.1,586.2 683.2,585.9 683.4,584.1 683.5,585.8 683.6,584.8 683.8,586.3 683.9,585.6 684.1,584.7 684.2,586.9 684.3,589.8 684.5,584.3 684.6,587.2 684.8,583.9 684.9,583.6 685.0,584.1 685.2,586.6 685.3,589.2 685.5,585.5 685.6,584.0 685.7,586.1 685.9,587.3 686.0,586.0 686.2,583.5 686.3,585.2 686.4,584.9 686.6,584.6 686.7,586.7 686.9,585.3 687.0,585.0 687.1,586.4 687.3,586.9 687.4,583.7 687.6,582.9 687.7,584.0 687.8,585.4 688.0,584.2 688.1,584.6 688.3,585.2 688.4,586.8 688.5,586.4 688.7,583.9 688.8,586.0 689.0,584.3 689.1,585.7 689.2,587.2 689.4,587.2 689.5,586.3 689.7,586.9 689.8,586.1 689.9,582.4 690.1,583.5 690.2,584.1 690.4,587.5 690.5,584.4 690.7,586.6 690.8,585.9 690.9,585.4 691.1,585.5 691.2,587.5 691.4,583.8 691.5,585.9 691.6,582.4 691.8,585.8 691.9,584.9 692.1,586.1 692.2,584.3 692.3,587.9 692.5,587.3 692.6,587.4 692.8,586.0 692.9,584.3 693.0,586.9 693.2,584.3 693.3,585.7 693.5,585.1 693.6,584.4 693.7,586.6 693.9,588.2 694.0,588.8 694.2,587.1 694.3,584.1 694.4,588.0 694.6,585.2 694.7,585.3 694.9,584.1 695.0,587.4 695.1,585.0 695.3,586.9 695.4,584.9 695.6,585.9 695.7,586.3 695.8,583.7 696.0,585.9 696.1,583.4 696.3,583.6 696.4,584.9 696.5,584.7 696.7,585.5 696.8,586.6 697.0,586.9 697.1,585.6 697.2,587.0 697.4,585.6 697.5,584.6 697.7,584.8 697.8,589.2 697.9,586.9 698.1,584.8 698.2,586.8 698.4,585.9 698.5,589.5 698.6,586.0 698.8,585.0 698.9,586.7 699.1,585.6 699.2,587.0 699.4,587.9 699.5,585.4 699.6,588.4 699.8,587.2 699.9,585.6 700.1,583.7 700.2,586.6 700.3,582.7 700.5,587.3 700.6,588.4 700.8,584.9 700.9,586.2 701.0,585.7 701.2,584.7 701.3,587.5 701.5,584.5 701.6,587.2 701.7,582.6 701.9,588.4 702.0,584.9 702.2,582.5 702.3,586.1 702.4,585.8 702.6,584.4 702.7,587.1 702.9,583.7 703.0,589.7 703.1,585.3 703.3,586.8 703.4,585.8 703.6,583.9 703.7,586.8 703.8,584.0 704.0,584.9 704.1,584.3 704.3,589.0 704.4,587.5 704.5,585.8 704.7,585.7 704.8,584.4 705.0,587.3 705.1,585.6 705.2,584.6 705.4,584.1 705.5,584.3 705.7,588.6 705.8,583.1 705.9,586.3 706.1,583.9 706.2,586.7 706.4,587.9 706.5,583.6 706.6,585.7 706.8,586.5 706.9,588.0 707.1,586.4 707.2,584.7 707.3,587.0 707.5,585.1 707.6,587.6 707.8,585.7 707.9,582.5 708.1,586.2 708.2,584.9 708.3,587.1 708.5,587.5 708.6,585.6 708.8,585.4 708.9,587.4 709.0,589.4 709.2,587.5 709.3,583.8 709.5,586.5 709.6,585.7 709.7,584.5 709.9,586.5 710.0,585.2 710.2,586.9 710.3,587.0 710.4,585.7 710.6,586.6 710.7,587.7 710.9,584.8 711.0,585.6 711.1,587.9 711.3,585.1 711.4,585.8 711.6,586.2 711.7,583.7 711.8,583.8 712.0,585.4 712.1,587.8 712.3,584.8 712.4,584.4 712.5,585.3 712.7,588.1 712.8,585.2 713.0,586.2 713.1,585.6 713.2,587.0 713.4,581.8 713.5,585.0 713.7,587.6 713.8,584.3 713.9,587.2 714.1,585.4 714.2,586.8 714.4,582.9 714.5,586.5 714.6,585.9 714.8,583.4 714.9,586.1 715.1,584.7 715.2,588.3 715.3,588.2 715.5,586.4 715.6,586.7 715.8,588.0 715.9,585.9 716.0,586.6 716.2,584.3 716.3,587.6 716.5,588.0 716.6,587.0 716.8,586.6 716.9,584.8 717.0,585.1 717.2,587.1 717.3,583.4 717.5,585.9 717.6,584.4 717.7,586.5 717.9,584.5 718.0,585.5 718.2,587.0 718.3,585.8 718.4,583.0 718.6,584.4 718.7,587.0 718.9,585.9 719.0,584.6 719.1,584.4 719.3,587.6 719.4,583.7 719.6,586.6 719.7,584.6 719.8,584.6 720.0,588.4 720.1,586.0 720.3,587.0 720.4,585.0 720.5,587.9 720.7,583.7 720.8,586.2 721.0,584.2 721.1,584.9 721.2,585.6 721.4,589.3 721.5,585.3 721.7,583.6 721.8,585.4 721.9,582.7 722.1,585.4 722.2,585.0 722.4,584.8 722.5,585.1 722.6,585.5 722.8,587.4 722.9,585.5 723.1,586.2 723.2,587.2 723.3,585.8 723.5,589.0 723.6,586.4 723.8,585.1 723.9,584.5 724.0,588.4 724.2,586.0 724.3,587.3 724.5,586.6 724.6,585.9 724.7,586.5 724.9,587.9 725.0,586.8 725.2,585.2 725.3,582.4 725.5,584.0 725.6,586.5 725.7,583.9 725.9,586.3 726.0,587.5 726.2,586.5 726.3,588.7 726.4,586.2 726.6,584.1 726.7,586.9 726.9,584.8 727.0,583.2 727.1,585.5 727.3,588.1 727.4,586.8 727.6,586.4 727.7,584.2 727.8,589.2 728.0,586.1 728.1,586.0 728.3,586.6 728.4,585.3 728.5,586.6 728.7,584.4 728.8,585.1 729.0,583.7 729.1,586.3 729.2,586.1 729.4,587.5 729.5,585.3 729.7,586.5 729.8,585.1 729.9,587.8 730.1,585.8 730.2,586.9 730.4,585.1 730.5,587.2 730.6,585.1 730.8,582.8 730.9,587.2 731.1,587.3 731.2,588.3 731.3,584.9 731.5,586.7 731.6,583.4 731.8,586.2 731.9,586.4 732.0,584.5 732.2,585.7 732.3,585.9 732.5,586.7 732.6,585.3 732.7,587.6 732.9,585.9 733.0,584.2 733.2,584.7 733.3,584.8 733.4,586.0 733.6,584.8 733.7,586.6 733.9,585.5 734.0,589.0 734.2,586.5 734.3,586.2 734.4,585.5 734.6,588.9 734.7,587.3 734.9,584.4 735.0,587.7 735.1,586.2 735.3,586.7 735.4,584.5 735.6,585.8 735.7,584.7 735.8,586.8 736.0,586.1 736.1,584.8 736.3,584.4 736.4,581.8 736.5,581.9 736.7,586.8 736.8,583.6 737.0,586.8 737.1,585.1 737.2,586.1 737.4,584.3 737.5,587.3 737.7,586.8 737.8,585.7 737.9,589.0 738.1,587.3 738.2,585.2 738.4,588.2 738.5,586.8 738.6,586.8 738.8,586.3 738.9,583.3 739.1,587.3 739.2,584.0 739.3,587.1 739.5,583.9 739.6,587.4 739.8,588.1 739.9,586.1 740.0,585.8 740.2,584.1 740.3,585.1 740.5,585.5 740.6,586.3 740.7,585.1 740.9,586.4 741.0,586.1 741.2,585.7 741.3,586.8 741.4,585.4 741.6,586.9 741.7,583.8 741.9,583.9 742.0,584.5 742.1,585.5 742.3,585.7 742.4,586.0 742.6,589.0 742.7,586.5 742.9,587.5 743.0,585.5 743.1,586.2 743.3,583.4 743.4,582.9 743.6,586.0 743.7,585.7 743.8,585.1 744.0,586.9 744.1,586.6 744.3,583.7 744.4,584.7 744.5,585.6 744.7,586.5 744.8,585.9 745.0,590.1 745.1,585.2 745.2,585.0 745.4,584.7 745.5,582.9 745.7,587.1 745.8,584.9 745.9,582.8 746.1,585.3 746.2,585.3 746.4,586.9 746.5,582.9 746.6,585.0 746.8,583.5 746.9,587.7 747.1,586.9 747.2,587.6 747.3,583.4 747.5,586.4 747.6,585.6 747.8,584.9 747.9,586.9 748.0,585.6 748.2,586.0 748.3,583.0 748.5,583.1 748.6,586.0 748.7,589.1 748.9,585.3 749.0,584.2 749.2,583.0 749.3,586.5 749.4,583.3 749.6,584.1 749.7,585.6 749.9,584.2 750.0,585.8 750.1,584.5 750.3,585.9 750.4,581.3 750.6,583.8 750.7,583.6 750.8,584.3 751.0,585.3 751.1,584.4 751.3,582.8 751.4,587.2 751.6,582.7 751.7,582.3 751.8,584.0 752.0,584.1 752.1,584.4 752.3,583.3 752.4,582.6 752.5,586.7 752.7,586.9 752.8,583.0 753.0,583.7 753.1,583.0 753.2,579.4 753.4,584.5 753.5,582.6 753.7,580.9 753.8,585.0 753.9,582.6 754.1,580.2 754.2,580.6 754.4,578.0 754.5,576.4 754.6,569.4 754.8,563.1 754.9,563.5 755.1,548.0 755.2,541.8 755.3,533.5 755.5,528.9 755.6,527.2 755.8,532.1 755.9,538.5 756.0,548.8 756.2,553.9 756.3,553.6 756.5,556.1 756.6,551.9 756.7,550.1 756.9,552.8 757.0,564.3 757.2,571.5 757.3,575.5 757.4,580.4 757.6,584.0 757.7,581.2 757.9,584.6 758.0,585.0 758.1,585.7 758.3,584.7 758.4,582.6 758.6,583.4 758.7,580.4 758.8,583.1 759.0,584.6 759.1,585.3 759.3,579.5 759.4,583.3 759.5,585.5 759.7,583.8 759.8,588.0 760.0,583.8 760.1,585.2 760.3,585.9 760.4,583.8 760.5,583.2 760.7,583.1 760.8,585.3 761.0,586.5 761.1,583.1 761.2,584.4 761.4,586.6 761.5,583.8 761.7,585.5 761.8,583.4 761.9,585.0 762.1,582.0 762.2,584.4 762.4,584.9 762.5,586.1 762.6,584.3 762.8,584.8 762.9,582.4 763.1,585.0 763.2,585.9 763.3,583.1 763.5,582.8 763.6,583.2 763.8,587.6 763.9,585.8 764.0,585.5 764.2,585.4 764.3,582.9 764.5,582.6 764.6,586.4 764.7,585.1 764.9,584.3 765.0,586.7 765.2,584.8 765.3,586.5 765.4,583.9 765.6,585.3 765.7,583.7 765.9,584.5 766.0,584.7 766.1,584.7 766.3,582.6 766.4,582.3 766.6,584.1 766.7,585.2 766.8,584.3 767.0,583.7 767.1,585.0 767.3,585.4 767.4,586.2 767.5,585.6 767.7,583.1 767.8,586.2 768.0,583.0 768.1,583.2 768.2,583.7 768.4,584.3 768.5,584.7 768.7,586.8 768.8,583.2 769.0,584.1 769.1,584.8 769.2,587.0 769.4,584.6 769.5,585.0 769.7,582.7 769.8,581.9 769.9,585.6 770.1,582.2 770.2,585.0 770.4,586.1 770.5,584.2 770.6,586.7 770.8,587.3 770.9,587.0 771.1,582.3 771.2,583.9 771.3,585.6 771.5,583.6 771.6,583.0 771.8,583.8 771.9,585.7 772.0,583.5 772.2,583.7 772.3,585.9 772.5,584.9 772.6,584.9 772.7,586.1 772.9,585.6 773.0,582.5 773.2,584.3 773.3,585.3 773.4,583.4 773.6,583.7 773.7,583.1 773.9,582.9 774.0,586.1 774.1,584.8 774.3,585.1 774.4,583.6 774.6,583.4 774.7,584.2 774.8,582.5 775.0,584.6 775.1,587.4 775.3,583.0 775.4,583.6 775.5,584.4 775.7,585.6 775.8,585.0 776.0,586.1 776.1,585.9 776.2,585.2 776.4,582.1 776.5,583.7 776.7,585.9 776.8,584.3 776.9,584.1 777.1,583.9 777.2,582.5 777.4,584.4 777.5,581.4 777.7,582.5 777.8,583.8 777.9,584.3 778.1,584.2 778.2,584.2 778.4,585.2 778.5,584.3 778.6,585.7 778.8,583.7 778.9,585.5 779.1,584.0 779.2,583.7 779.3,583.7 779.5,583.5 779.6,584.4 779.8,585.1 779.9,583.5 780.0,583.5 780.2,585.5 780.3,582.6 780.5,584.1 780.6,583.0 780.7,586.0 780.9,584.8 781.0,584.8 781.2,584.8 781.3,581.0 781.4,584.5 781.6,583.7 781.7,583.4 781.9,585.2 782.0,583.1" fill="none" stroke="#0d6b0d" stroke-width="1.15" stroke-linejoin="round"/>
<rect x="501.5" y="365.5" width="280.5" height="249.0" fill="none" stroke="#2a2a2a" stroke-width="0.95"/>
<line x1="496.0" y1="598.4" x2="501.5" y2="598.4" stroke="#000" stroke-width="1"/>
<text x="492.5" y="602.8" font-size="13" font-weight="bold" text-anchor="end" fill="#111">0</text>
<line x1="496.0" y1="567.2" x2="501.5" y2="567.2" stroke="#000" stroke-width="1"/>
<text x="492.5" y="571.6" font-size="13" font-weight="bold" text-anchor="end" fill="#111">1000</text>
<line x1="496.0" y1="536.1" x2="501.5" y2="536.1" stroke="#000" stroke-width="1"/>
<text x="492.5" y="540.5" font-size="13" font-weight="bold" text-anchor="end" fill="#111">2000</text>
<line x1="496.0" y1="504.9" x2="501.5" y2="504.9" stroke="#000" stroke-width="1"/>
<text x="492.5" y="509.3" font-size="13" font-weight="bold" text-anchor="end" fill="#111">3000</text>
<line x1="496.0" y1="473.8" x2="501.5" y2="473.8" stroke="#000" stroke-width="1"/>
<text x="492.5" y="478.2" font-size="13" font-weight="bold" text-anchor="end" fill="#111">4000</text>
<line x1="496.0" y1="442.6" x2="501.5" y2="442.6" stroke="#000" stroke-width="1"/>
<text x="492.5" y="447.0" font-size="13" font-weight="bold" text-anchor="end" fill="#111">5000</text>
<line x1="496.0" y1="411.5" x2="501.5" y2="411.5" stroke="#000" stroke-width="1"/>
<text x="492.5" y="415.9" font-size="13" font-weight="bold" text-anchor="end" fill="#111">6000</text>
<line x1="496.0" y1="380.3" x2="501.5" y2="380.3" stroke="#000" stroke-width="1"/>
<text x="492.5" y="384.7" font-size="13" font-weight="bold" text-anchor="end" fill="#111">7000</text>
<line x1="498.5" y1="582.8" x2="501.5" y2="582.8" stroke="#000" stroke-width="1"/>
<line x1="498.5" y1="551.7" x2="501.5" y2="551.7" stroke="#000" stroke-width="1"/>
<line x1="498.5" y1="520.5" x2="501.5" y2="520.5" stroke="#000" stroke-width="1"/>
<line x1="498.5" y1="489.4" x2="501.5" y2="489.4" stroke="#000" stroke-width="1"/>
<line x1="498.5" y1="458.2" x2="501.5" y2="458.2" stroke="#000" stroke-width="1"/>
<line x1="498.5" y1="427.1" x2="501.5" y2="427.1" stroke="#000" stroke-width="1"/>
<line x1="498.5" y1="395.9" x2="501.5" y2="395.9" stroke="#000" stroke-width="1"/>
<line x1="501.5" y1="614.5" x2="501.5" y2="617.5" stroke="#000" stroke-width="1"/>
<line x1="541.6" y1="614.5" x2="541.6" y2="620.0" stroke="#000" stroke-width="1"/>
<text x="541.6" y="633.2" font-size="13" font-weight="bold" text-anchor="middle" fill="#111">20</text>
<line x1="541.6" y1="365.5" x2="541.6" y2="369.5" stroke="#000" stroke-width="1"/>
<line x1="581.6" y1="614.5" x2="581.6" y2="617.5" stroke="#000" stroke-width="1"/>
<line x1="581.6" y1="365.5" x2="581.6" y2="368.0" stroke="#000" stroke-width="1"/>
<line x1="621.7" y1="614.5" x2="621.7" y2="620.0" stroke="#000" stroke-width="1"/>
<text x="621.7" y="633.2" font-size="13" font-weight="bold" text-anchor="middle" fill="#111">40</text>
<line x1="621.7" y1="365.5" x2="621.7" y2="369.5" stroke="#000" stroke-width="1"/>
<line x1="661.8" y1="614.5" x2="661.8" y2="617.5" stroke="#000" stroke-width="1"/>
<line x1="661.8" y1="365.5" x2="661.8" y2="368.0" stroke="#000" stroke-width="1"/>
<line x1="701.9" y1="614.5" x2="701.9" y2="620.0" stroke="#000" stroke-width="1"/>
<text x="701.9" y="633.2" font-size="13" font-weight="bold" text-anchor="middle" fill="#111">60</text>
<line x1="701.9" y1="365.5" x2="701.9" y2="369.5" stroke="#000" stroke-width="1"/>
<line x1="741.9" y1="614.5" x2="741.9" y2="617.5" stroke="#000" stroke-width="1"/>
<line x1="741.9" y1="365.5" x2="741.9" y2="368.0" stroke="#000" stroke-width="1"/>
<line x1="782.0" y1="614.5" x2="782.0" y2="620.0" stroke="#000" stroke-width="1"/>
<text x="782.0" y="633.2" font-size="13" font-weight="bold" text-anchor="middle" fill="#111">80</text>
<line x1="782.0" y1="365.5" x2="782.0" y2="369.5" stroke="#000" stroke-width="1"/>
<text transform="translate(452.0,484.8) rotate(-90)" font-size="15" text-anchor="middle" fill="#222" letter-spacing="0.2">Intensity (a.u)</text>
<text x="642.2" y="658.0" font-size="15.2" text-anchor="middle" fill="#222" letter-spacing="0.15">2Theta (Degree)</text>
<rect x="691.2" y="381.3" width="75" height="21" fill="#fff" stroke="#222" stroke-width="0.9"/>
<line x1="695.2" y1="391.8" x2="726.2" y2="391.8" stroke="#0d6b0d" stroke-width="1" opacity="0.75"/>
<text x="731.2" y="397.0" font-size="15" fill="#111">700C</text>
</svg>
<div id="status" class="a">
<div class="a" style="left:6.1px;top:3.5px;font-size:11.7px;letter-spacing:-0.416px;white-space:pre;color:#111;font-family:'Liberation Sans',sans-serif;">For Help, press F1</div>
<div class="a" style="left:414.9px;top:3.5px;font-size:11.7px;letter-spacing:-0.893px;white-space:pre;color:#111;font-family:'Liberation Sans',sans-serif;">--</div>
<svg class="a" style="left:428px;top:5.5px" width="12" height="12" viewBox="0 0 12 12"><path d="M1 0.500v9" stroke="#888" stroke-width="1"/><path d="M1 0.500h9.500v6H1z" fill="#d81818"/></svg>
<div class="a" style="left:450.8px;top:3.5px;font-size:11.7px;letter-spacing:-0.659px;white-space:pre;color:#111;font-family:'Liberation Sans',sans-serif;">AU : ON</div>
<div class="a" style="left:497.5px;top:3.5px;font-size:11.7px;letter-spacing:-0.307px;white-space:pre;color:#111;font-family:'Liberation Sans',sans-serif;">Light Grids</div>
<div class="a" style="left:559.5px;top:3.5px;font-size:11.7px;letter-spacing:-0.352px;white-space:pre;color:#111;font-family:'Liberation Sans',sans-serif;">1:[AllData]Sheet1!Col("Intensity")[1:3900]</div>
<div class="a" style="left:766.0px;top:3.5px;font-size:11.7px;letter-spacing:-0.496px;white-space:pre;color:#111;font-family:'Liberation Sans',sans-serif;">4:[Graph5]4!1</div>
<div class="a" style="left:840.0px;top:3.5px;font-size:11.7px;letter-spacing:-0.695px;white-space:pre;color:#111;font-family:'Liberation Sans',sans-serif;">Radian</div>
<i class="a" style="left:446px;top:4px;width:1px;height:14px;background:#dcdcdc"></i>
<i class="a" style="left:492.5px;top:4px;width:1px;height:14px;background:#dcdcdc"></i>
<i class="a" style="left:553.5px;top:4px;width:1px;height:14px;background:#dcdcdc"></i>
<i class="a" style="left:761.5px;top:4px;width:1px;height:14px;background:#dcdcdc"></i>
<i class="a" style="left:835px;top:4px;width:1px;height:14px;background:#dcdcdc"></i>
<svg class="a" style="left:881px;top:7.5px" width="12" height="12" viewBox="0 0 12 12" fill="#b4b4b4"><rect x="8" y="8" width="2" height="2"/><rect x="8" y="4" width="2" height="2"/><rect x="4" y="8" width="2" height="2"/><rect x="8" y="0" width="2" height="2"/><rect x="4" y="4" width="2" height="2"/><rect x="0" y="8" width="2" height="2"/></svg>
</div>
<div class="a" style="left:0;top:0;width:893px;height:1px;background:#1e6f86"></div>
<div class="a" style="left:0;top:0;width:1px;height:720px;background:#cfe2f0"></div>
<div class="a" style="left:1px;top:0;width:1px;height:720px;background:#3b6487"></div>
<div class="a" style="left:892px;top:0;width:1px;height:720px;background:#8cc4ea"></div>
<div class="a" style="left:0;top:719px;width:893px;height:1px;background:#2a6a82"></div>
</div>
</body></html>
